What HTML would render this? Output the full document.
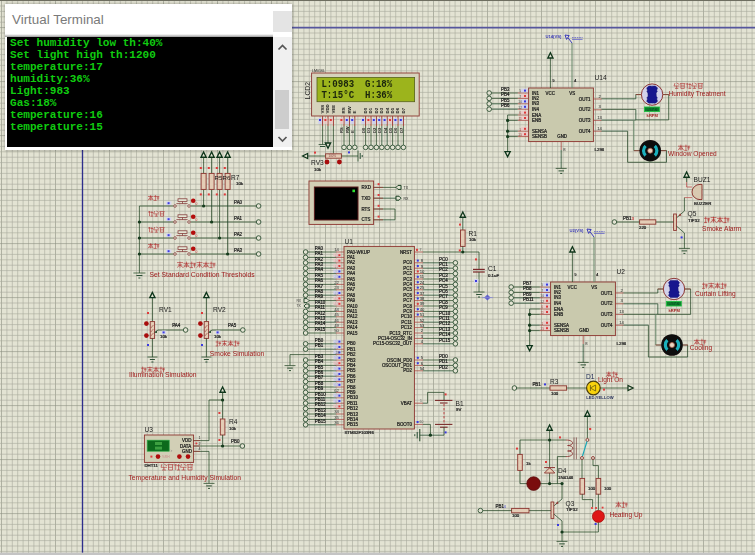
<!DOCTYPE html>
<html><head><meta charset="utf-8"><title>Virtual Terminal</title>
<style>
html,body{margin:0;padding:0;}
body{width:755px;height:555px;overflow:hidden;position:relative;background:#e3e3d3;font-family:"Liberation Sans",sans-serif;}
#vt{position:absolute;left:5px;top:4px;width:287px;height:145.6px;background:#fff;box-shadow:0 0 3px rgba(0,0,0,.35);}
#vt .title{position:absolute;left:7px;top:7.6px;font-size:13.4px;color:#7a7a7a;white-space:nowrap;line-height:16px;}
#vt .close{position:absolute;left:268px;top:7px;width:19px;height:21px;background:#e4e4e4;}
#vt .scr{position:absolute;left:2px;top:33px;width:266px;height:110px;background:#000;overflow:hidden;}
#vt .scr div{font-family:"Liberation Mono",monospace;font-weight:bold;font-size:11.05px;line-height:12px;height:12px;color:#10cc10;white-space:pre;padding-left:3px;}
#vt .sb{position:absolute;left:268px;top:33px;width:18.6px;height:110px;background:#f0f0f0;}
#vt .grad{position:absolute;left:0;top:29.5px;width:268px;height:3.5px;background:linear-gradient(#fff,#9a9a9a);}
#vt .thumb{position:absolute;left:1.8px;top:53px;width:14.6px;height:38.6px;background:#cdcdcd;}
</style></head><body>
<svg width="755" height="555" viewBox="0 0 755 555" style="position:absolute;left:0;top:0"><defs><filter id="bl" x="0" y="0" width="100%" height="100%" filterUnits="userSpaceOnUse"><feGaussianBlur stdDeviation="0.2"/></filter></defs><g><rect width="755" height="555" fill="#e3e3d3"/>
<line x1="1.50" y1="0" x2="1.50" y2="555" stroke="#8c8e82" stroke-width="0.6"/>
<line x1="6.90" y1="0" x2="6.90" y2="555" stroke="#a8aa9c" stroke-width="0.6"/>
<line x1="12.30" y1="0" x2="12.30" y2="555" stroke="#a8aa9c" stroke-width="0.6"/>
<line x1="17.70" y1="0" x2="17.70" y2="555" stroke="#a8aa9c" stroke-width="0.6"/>
<line x1="23.10" y1="0" x2="23.10" y2="555" stroke="#a8aa9c" stroke-width="0.6"/>
<line x1="28.50" y1="0" x2="28.50" y2="555" stroke="#a8aa9c" stroke-width="0.6"/>
<line x1="33.90" y1="0" x2="33.90" y2="555" stroke="#a8aa9c" stroke-width="0.6"/>
<line x1="39.30" y1="0" x2="39.30" y2="555" stroke="#a8aa9c" stroke-width="0.6"/>
<line x1="44.70" y1="0" x2="44.70" y2="555" stroke="#a8aa9c" stroke-width="0.6"/>
<line x1="50.10" y1="0" x2="50.10" y2="555" stroke="#a8aa9c" stroke-width="0.6"/>
<line x1="55.50" y1="0" x2="55.50" y2="555" stroke="#8c8e82" stroke-width="0.6"/>
<line x1="60.90" y1="0" x2="60.90" y2="555" stroke="#a8aa9c" stroke-width="0.6"/>
<line x1="66.30" y1="0" x2="66.30" y2="555" stroke="#a8aa9c" stroke-width="0.6"/>
<line x1="71.70" y1="0" x2="71.70" y2="555" stroke="#a8aa9c" stroke-width="0.6"/>
<line x1="77.10" y1="0" x2="77.10" y2="555" stroke="#a8aa9c" stroke-width="0.6"/>
<line x1="82.50" y1="0" x2="82.50" y2="555" stroke="#a8aa9c" stroke-width="0.6"/>
<line x1="87.90" y1="0" x2="87.90" y2="555" stroke="#a8aa9c" stroke-width="0.6"/>
<line x1="93.30" y1="0" x2="93.30" y2="555" stroke="#a8aa9c" stroke-width="0.6"/>
<line x1="98.70" y1="0" x2="98.70" y2="555" stroke="#a8aa9c" stroke-width="0.6"/>
<line x1="104.10" y1="0" x2="104.10" y2="555" stroke="#a8aa9c" stroke-width="0.6"/>
<line x1="109.50" y1="0" x2="109.50" y2="555" stroke="#8c8e82" stroke-width="0.6"/>
<line x1="114.90" y1="0" x2="114.90" y2="555" stroke="#a8aa9c" stroke-width="0.6"/>
<line x1="120.30" y1="0" x2="120.30" y2="555" stroke="#a8aa9c" stroke-width="0.6"/>
<line x1="125.70" y1="0" x2="125.70" y2="555" stroke="#a8aa9c" stroke-width="0.6"/>
<line x1="131.10" y1="0" x2="131.10" y2="555" stroke="#a8aa9c" stroke-width="0.6"/>
<line x1="136.50" y1="0" x2="136.50" y2="555" stroke="#a8aa9c" stroke-width="0.6"/>
<line x1="141.90" y1="0" x2="141.90" y2="555" stroke="#a8aa9c" stroke-width="0.6"/>
<line x1="147.30" y1="0" x2="147.30" y2="555" stroke="#a8aa9c" stroke-width="0.6"/>
<line x1="152.70" y1="0" x2="152.70" y2="555" stroke="#a8aa9c" stroke-width="0.6"/>
<line x1="158.10" y1="0" x2="158.10" y2="555" stroke="#a8aa9c" stroke-width="0.6"/>
<line x1="163.50" y1="0" x2="163.50" y2="555" stroke="#8c8e82" stroke-width="0.6"/>
<line x1="168.90" y1="0" x2="168.90" y2="555" stroke="#a8aa9c" stroke-width="0.6"/>
<line x1="174.30" y1="0" x2="174.30" y2="555" stroke="#a8aa9c" stroke-width="0.6"/>
<line x1="179.70" y1="0" x2="179.70" y2="555" stroke="#a8aa9c" stroke-width="0.6"/>
<line x1="185.10" y1="0" x2="185.10" y2="555" stroke="#a8aa9c" stroke-width="0.6"/>
<line x1="190.50" y1="0" x2="190.50" y2="555" stroke="#a8aa9c" stroke-width="0.6"/>
<line x1="195.90" y1="0" x2="195.90" y2="555" stroke="#a8aa9c" stroke-width="0.6"/>
<line x1="201.30" y1="0" x2="201.30" y2="555" stroke="#a8aa9c" stroke-width="0.6"/>
<line x1="206.70" y1="0" x2="206.70" y2="555" stroke="#a8aa9c" stroke-width="0.6"/>
<line x1="212.10" y1="0" x2="212.10" y2="555" stroke="#a8aa9c" stroke-width="0.6"/>
<line x1="217.50" y1="0" x2="217.50" y2="555" stroke="#8c8e82" stroke-width="0.6"/>
<line x1="222.90" y1="0" x2="222.90" y2="555" stroke="#a8aa9c" stroke-width="0.6"/>
<line x1="228.30" y1="0" x2="228.30" y2="555" stroke="#a8aa9c" stroke-width="0.6"/>
<line x1="233.70" y1="0" x2="233.70" y2="555" stroke="#a8aa9c" stroke-width="0.6"/>
<line x1="239.10" y1="0" x2="239.10" y2="555" stroke="#a8aa9c" stroke-width="0.6"/>
<line x1="244.50" y1="0" x2="244.50" y2="555" stroke="#a8aa9c" stroke-width="0.6"/>
<line x1="249.90" y1="0" x2="249.90" y2="555" stroke="#a8aa9c" stroke-width="0.6"/>
<line x1="255.30" y1="0" x2="255.30" y2="555" stroke="#a8aa9c" stroke-width="0.6"/>
<line x1="260.70" y1="0" x2="260.70" y2="555" stroke="#a8aa9c" stroke-width="0.6"/>
<line x1="266.10" y1="0" x2="266.10" y2="555" stroke="#a8aa9c" stroke-width="0.6"/>
<line x1="271.50" y1="0" x2="271.50" y2="555" stroke="#8c8e82" stroke-width="0.6"/>
<line x1="276.90" y1="0" x2="276.90" y2="555" stroke="#a8aa9c" stroke-width="0.6"/>
<line x1="282.30" y1="0" x2="282.30" y2="555" stroke="#a8aa9c" stroke-width="0.6"/>
<line x1="287.70" y1="0" x2="287.70" y2="555" stroke="#a8aa9c" stroke-width="0.6"/>
<line x1="293.10" y1="0" x2="293.10" y2="555" stroke="#a8aa9c" stroke-width="0.6"/>
<line x1="298.50" y1="0" x2="298.50" y2="555" stroke="#a8aa9c" stroke-width="0.6"/>
<line x1="303.90" y1="0" x2="303.90" y2="555" stroke="#a8aa9c" stroke-width="0.6"/>
<line x1="309.30" y1="0" x2="309.30" y2="555" stroke="#a8aa9c" stroke-width="0.6"/>
<line x1="314.70" y1="0" x2="314.70" y2="555" stroke="#a8aa9c" stroke-width="0.6"/>
<line x1="320.10" y1="0" x2="320.10" y2="555" stroke="#a8aa9c" stroke-width="0.6"/>
<line x1="325.50" y1="0" x2="325.50" y2="555" stroke="#8c8e82" stroke-width="0.6"/>
<line x1="330.90" y1="0" x2="330.90" y2="555" stroke="#a8aa9c" stroke-width="0.6"/>
<line x1="336.30" y1="0" x2="336.30" y2="555" stroke="#a8aa9c" stroke-width="0.6"/>
<line x1="341.70" y1="0" x2="341.70" y2="555" stroke="#a8aa9c" stroke-width="0.6"/>
<line x1="347.10" y1="0" x2="347.10" y2="555" stroke="#a8aa9c" stroke-width="0.6"/>
<line x1="352.50" y1="0" x2="352.50" y2="555" stroke="#a8aa9c" stroke-width="0.6"/>
<line x1="357.90" y1="0" x2="357.90" y2="555" stroke="#a8aa9c" stroke-width="0.6"/>
<line x1="363.30" y1="0" x2="363.30" y2="555" stroke="#a8aa9c" stroke-width="0.6"/>
<line x1="368.70" y1="0" x2="368.70" y2="555" stroke="#a8aa9c" stroke-width="0.6"/>
<line x1="374.10" y1="0" x2="374.10" y2="555" stroke="#a8aa9c" stroke-width="0.6"/>
<line x1="379.50" y1="0" x2="379.50" y2="555" stroke="#8c8e82" stroke-width="0.6"/>
<line x1="384.90" y1="0" x2="384.90" y2="555" stroke="#a8aa9c" stroke-width="0.6"/>
<line x1="390.30" y1="0" x2="390.30" y2="555" stroke="#a8aa9c" stroke-width="0.6"/>
<line x1="395.70" y1="0" x2="395.70" y2="555" stroke="#a8aa9c" stroke-width="0.6"/>
<line x1="401.10" y1="0" x2="401.10" y2="555" stroke="#a8aa9c" stroke-width="0.6"/>
<line x1="406.50" y1="0" x2="406.50" y2="555" stroke="#a8aa9c" stroke-width="0.6"/>
<line x1="411.90" y1="0" x2="411.90" y2="555" stroke="#a8aa9c" stroke-width="0.6"/>
<line x1="417.30" y1="0" x2="417.30" y2="555" stroke="#a8aa9c" stroke-width="0.6"/>
<line x1="422.70" y1="0" x2="422.70" y2="555" stroke="#a8aa9c" stroke-width="0.6"/>
<line x1="428.10" y1="0" x2="428.10" y2="555" stroke="#a8aa9c" stroke-width="0.6"/>
<line x1="433.50" y1="0" x2="433.50" y2="555" stroke="#8c8e82" stroke-width="0.6"/>
<line x1="438.90" y1="0" x2="438.90" y2="555" stroke="#a8aa9c" stroke-width="0.6"/>
<line x1="444.30" y1="0" x2="444.30" y2="555" stroke="#a8aa9c" stroke-width="0.6"/>
<line x1="449.70" y1="0" x2="449.70" y2="555" stroke="#a8aa9c" stroke-width="0.6"/>
<line x1="455.10" y1="0" x2="455.10" y2="555" stroke="#a8aa9c" stroke-width="0.6"/>
<line x1="460.50" y1="0" x2="460.50" y2="555" stroke="#a8aa9c" stroke-width="0.6"/>
<line x1="465.90" y1="0" x2="465.90" y2="555" stroke="#a8aa9c" stroke-width="0.6"/>
<line x1="471.30" y1="0" x2="471.30" y2="555" stroke="#a8aa9c" stroke-width="0.6"/>
<line x1="476.70" y1="0" x2="476.70" y2="555" stroke="#a8aa9c" stroke-width="0.6"/>
<line x1="482.10" y1="0" x2="482.10" y2="555" stroke="#a8aa9c" stroke-width="0.6"/>
<line x1="487.50" y1="0" x2="487.50" y2="555" stroke="#8c8e82" stroke-width="0.6"/>
<line x1="492.90" y1="0" x2="492.90" y2="555" stroke="#a8aa9c" stroke-width="0.6"/>
<line x1="498.30" y1="0" x2="498.30" y2="555" stroke="#a8aa9c" stroke-width="0.6"/>
<line x1="503.70" y1="0" x2="503.70" y2="555" stroke="#a8aa9c" stroke-width="0.6"/>
<line x1="509.10" y1="0" x2="509.10" y2="555" stroke="#a8aa9c" stroke-width="0.6"/>
<line x1="514.50" y1="0" x2="514.50" y2="555" stroke="#a8aa9c" stroke-width="0.6"/>
<line x1="519.90" y1="0" x2="519.90" y2="555" stroke="#a8aa9c" stroke-width="0.6"/>
<line x1="525.30" y1="0" x2="525.30" y2="555" stroke="#a8aa9c" stroke-width="0.6"/>
<line x1="530.70" y1="0" x2="530.70" y2="555" stroke="#a8aa9c" stroke-width="0.6"/>
<line x1="536.10" y1="0" x2="536.10" y2="555" stroke="#a8aa9c" stroke-width="0.6"/>
<line x1="541.50" y1="0" x2="541.50" y2="555" stroke="#8c8e82" stroke-width="0.6"/>
<line x1="546.90" y1="0" x2="546.90" y2="555" stroke="#a8aa9c" stroke-width="0.6"/>
<line x1="552.30" y1="0" x2="552.30" y2="555" stroke="#a8aa9c" stroke-width="0.6"/>
<line x1="557.70" y1="0" x2="557.70" y2="555" stroke="#a8aa9c" stroke-width="0.6"/>
<line x1="563.10" y1="0" x2="563.10" y2="555" stroke="#a8aa9c" stroke-width="0.6"/>
<line x1="568.50" y1="0" x2="568.50" y2="555" stroke="#a8aa9c" stroke-width="0.6"/>
<line x1="573.90" y1="0" x2="573.90" y2="555" stroke="#a8aa9c" stroke-width="0.6"/>
<line x1="579.30" y1="0" x2="579.30" y2="555" stroke="#a8aa9c" stroke-width="0.6"/>
<line x1="584.70" y1="0" x2="584.70" y2="555" stroke="#a8aa9c" stroke-width="0.6"/>
<line x1="590.10" y1="0" x2="590.10" y2="555" stroke="#a8aa9c" stroke-width="0.6"/>
<line x1="595.50" y1="0" x2="595.50" y2="555" stroke="#8c8e82" stroke-width="0.6"/>
<line x1="600.90" y1="0" x2="600.90" y2="555" stroke="#a8aa9c" stroke-width="0.6"/>
<line x1="606.30" y1="0" x2="606.30" y2="555" stroke="#a8aa9c" stroke-width="0.6"/>
<line x1="611.70" y1="0" x2="611.70" y2="555" stroke="#a8aa9c" stroke-width="0.6"/>
<line x1="617.10" y1="0" x2="617.10" y2="555" stroke="#a8aa9c" stroke-width="0.6"/>
<line x1="622.50" y1="0" x2="622.50" y2="555" stroke="#a8aa9c" stroke-width="0.6"/>
<line x1="627.90" y1="0" x2="627.90" y2="555" stroke="#a8aa9c" stroke-width="0.6"/>
<line x1="633.30" y1="0" x2="633.30" y2="555" stroke="#a8aa9c" stroke-width="0.6"/>
<line x1="638.70" y1="0" x2="638.70" y2="555" stroke="#a8aa9c" stroke-width="0.6"/>
<line x1="644.10" y1="0" x2="644.10" y2="555" stroke="#a8aa9c" stroke-width="0.6"/>
<line x1="649.50" y1="0" x2="649.50" y2="555" stroke="#8c8e82" stroke-width="0.6"/>
<line x1="654.90" y1="0" x2="654.90" y2="555" stroke="#a8aa9c" stroke-width="0.6"/>
<line x1="660.30" y1="0" x2="660.30" y2="555" stroke="#a8aa9c" stroke-width="0.6"/>
<line x1="665.70" y1="0" x2="665.70" y2="555" stroke="#a8aa9c" stroke-width="0.6"/>
<line x1="671.10" y1="0" x2="671.10" y2="555" stroke="#a8aa9c" stroke-width="0.6"/>
<line x1="676.50" y1="0" x2="676.50" y2="555" stroke="#a8aa9c" stroke-width="0.6"/>
<line x1="681.90" y1="0" x2="681.90" y2="555" stroke="#a8aa9c" stroke-width="0.6"/>
<line x1="687.30" y1="0" x2="687.30" y2="555" stroke="#a8aa9c" stroke-width="0.6"/>
<line x1="692.70" y1="0" x2="692.70" y2="555" stroke="#a8aa9c" stroke-width="0.6"/>
<line x1="698.10" y1="0" x2="698.10" y2="555" stroke="#a8aa9c" stroke-width="0.6"/>
<line x1="703.50" y1="0" x2="703.50" y2="555" stroke="#8c8e82" stroke-width="0.6"/>
<line x1="708.90" y1="0" x2="708.90" y2="555" stroke="#a8aa9c" stroke-width="0.6"/>
<line x1="714.30" y1="0" x2="714.30" y2="555" stroke="#a8aa9c" stroke-width="0.6"/>
<line x1="719.70" y1="0" x2="719.70" y2="555" stroke="#a8aa9c" stroke-width="0.6"/>
<line x1="725.10" y1="0" x2="725.10" y2="555" stroke="#a8aa9c" stroke-width="0.6"/>
<line x1="730.50" y1="0" x2="730.50" y2="555" stroke="#a8aa9c" stroke-width="0.6"/>
<line x1="735.90" y1="0" x2="735.90" y2="555" stroke="#a8aa9c" stroke-width="0.6"/>
<line x1="741.30" y1="0" x2="741.30" y2="555" stroke="#a8aa9c" stroke-width="0.6"/>
<line x1="746.70" y1="0" x2="746.70" y2="555" stroke="#a8aa9c" stroke-width="0.6"/>
<line x1="752.10" y1="0" x2="752.10" y2="555" stroke="#a8aa9c" stroke-width="0.6"/>
<line x1="0" y1="0.60" x2="755" y2="0.60" stroke="#a8aa9c" stroke-width="0.6"/>
<line x1="0" y1="6.00" x2="755" y2="6.00" stroke="#a8aa9c" stroke-width="0.6"/>
<line x1="0" y1="11.40" x2="755" y2="11.40" stroke="#a8aa9c" stroke-width="0.6"/>
<line x1="0" y1="16.80" x2="755" y2="16.80" stroke="#a8aa9c" stroke-width="0.6"/>
<line x1="0" y1="22.20" x2="755" y2="22.20" stroke="#a8aa9c" stroke-width="0.6"/>
<line x1="0" y1="27.60" x2="755" y2="27.60" stroke="#8c8e82" stroke-width="0.6"/>
<line x1="0" y1="33.00" x2="755" y2="33.00" stroke="#a8aa9c" stroke-width="0.6"/>
<line x1="0" y1="38.40" x2="755" y2="38.40" stroke="#a8aa9c" stroke-width="0.6"/>
<line x1="0" y1="43.80" x2="755" y2="43.80" stroke="#a8aa9c" stroke-width="0.6"/>
<line x1="0" y1="49.20" x2="755" y2="49.20" stroke="#a8aa9c" stroke-width="0.6"/>
<line x1="0" y1="54.60" x2="755" y2="54.60" stroke="#a8aa9c" stroke-width="0.6"/>
<line x1="0" y1="60.00" x2="755" y2="60.00" stroke="#a8aa9c" stroke-width="0.6"/>
<line x1="0" y1="65.40" x2="755" y2="65.40" stroke="#a8aa9c" stroke-width="0.6"/>
<line x1="0" y1="70.80" x2="755" y2="70.80" stroke="#a8aa9c" stroke-width="0.6"/>
<line x1="0" y1="76.20" x2="755" y2="76.20" stroke="#a8aa9c" stroke-width="0.6"/>
<line x1="0" y1="81.60" x2="755" y2="81.60" stroke="#8c8e82" stroke-width="0.6"/>
<line x1="0" y1="87.00" x2="755" y2="87.00" stroke="#a8aa9c" stroke-width="0.6"/>
<line x1="0" y1="92.40" x2="755" y2="92.40" stroke="#a8aa9c" stroke-width="0.6"/>
<line x1="0" y1="97.80" x2="755" y2="97.80" stroke="#a8aa9c" stroke-width="0.6"/>
<line x1="0" y1="103.20" x2="755" y2="103.20" stroke="#a8aa9c" stroke-width="0.6"/>
<line x1="0" y1="108.60" x2="755" y2="108.60" stroke="#a8aa9c" stroke-width="0.6"/>
<line x1="0" y1="114.00" x2="755" y2="114.00" stroke="#a8aa9c" stroke-width="0.6"/>
<line x1="0" y1="119.40" x2="755" y2="119.40" stroke="#a8aa9c" stroke-width="0.6"/>
<line x1="0" y1="124.80" x2="755" y2="124.80" stroke="#a8aa9c" stroke-width="0.6"/>
<line x1="0" y1="130.20" x2="755" y2="130.20" stroke="#a8aa9c" stroke-width="0.6"/>
<line x1="0" y1="135.60" x2="755" y2="135.60" stroke="#8c8e82" stroke-width="0.6"/>
<line x1="0" y1="141.00" x2="755" y2="141.00" stroke="#a8aa9c" stroke-width="0.6"/>
<line x1="0" y1="146.40" x2="755" y2="146.40" stroke="#a8aa9c" stroke-width="0.6"/>
<line x1="0" y1="151.80" x2="755" y2="151.80" stroke="#a8aa9c" stroke-width="0.6"/>
<line x1="0" y1="157.20" x2="755" y2="157.20" stroke="#a8aa9c" stroke-width="0.6"/>
<line x1="0" y1="162.60" x2="755" y2="162.60" stroke="#a8aa9c" stroke-width="0.6"/>
<line x1="0" y1="168.00" x2="755" y2="168.00" stroke="#a8aa9c" stroke-width="0.6"/>
<line x1="0" y1="173.40" x2="755" y2="173.40" stroke="#a8aa9c" stroke-width="0.6"/>
<line x1="0" y1="178.80" x2="755" y2="178.80" stroke="#a8aa9c" stroke-width="0.6"/>
<line x1="0" y1="184.20" x2="755" y2="184.20" stroke="#a8aa9c" stroke-width="0.6"/>
<line x1="0" y1="189.60" x2="755" y2="189.60" stroke="#8c8e82" stroke-width="0.6"/>
<line x1="0" y1="195.00" x2="755" y2="195.00" stroke="#a8aa9c" stroke-width="0.6"/>
<line x1="0" y1="200.40" x2="755" y2="200.40" stroke="#a8aa9c" stroke-width="0.6"/>
<line x1="0" y1="205.80" x2="755" y2="205.80" stroke="#a8aa9c" stroke-width="0.6"/>
<line x1="0" y1="211.20" x2="755" y2="211.20" stroke="#a8aa9c" stroke-width="0.6"/>
<line x1="0" y1="216.60" x2="755" y2="216.60" stroke="#a8aa9c" stroke-width="0.6"/>
<line x1="0" y1="222.00" x2="755" y2="222.00" stroke="#a8aa9c" stroke-width="0.6"/>
<line x1="0" y1="227.40" x2="755" y2="227.40" stroke="#a8aa9c" stroke-width="0.6"/>
<line x1="0" y1="232.80" x2="755" y2="232.80" stroke="#a8aa9c" stroke-width="0.6"/>
<line x1="0" y1="238.20" x2="755" y2="238.20" stroke="#a8aa9c" stroke-width="0.6"/>
<line x1="0" y1="243.60" x2="755" y2="243.60" stroke="#8c8e82" stroke-width="0.6"/>
<line x1="0" y1="249.00" x2="755" y2="249.00" stroke="#a8aa9c" stroke-width="0.6"/>
<line x1="0" y1="254.40" x2="755" y2="254.40" stroke="#a8aa9c" stroke-width="0.6"/>
<line x1="0" y1="259.80" x2="755" y2="259.80" stroke="#a8aa9c" stroke-width="0.6"/>
<line x1="0" y1="265.20" x2="755" y2="265.20" stroke="#a8aa9c" stroke-width="0.6"/>
<line x1="0" y1="270.60" x2="755" y2="270.60" stroke="#a8aa9c" stroke-width="0.6"/>
<line x1="0" y1="276.00" x2="755" y2="276.00" stroke="#a8aa9c" stroke-width="0.6"/>
<line x1="0" y1="281.40" x2="755" y2="281.40" stroke="#a8aa9c" stroke-width="0.6"/>
<line x1="0" y1="286.80" x2="755" y2="286.80" stroke="#a8aa9c" stroke-width="0.6"/>
<line x1="0" y1="292.20" x2="755" y2="292.20" stroke="#a8aa9c" stroke-width="0.6"/>
<line x1="0" y1="297.60" x2="755" y2="297.60" stroke="#8c8e82" stroke-width="0.6"/>
<line x1="0" y1="303.00" x2="755" y2="303.00" stroke="#a8aa9c" stroke-width="0.6"/>
<line x1="0" y1="308.40" x2="755" y2="308.40" stroke="#a8aa9c" stroke-width="0.6"/>
<line x1="0" y1="313.80" x2="755" y2="313.80" stroke="#a8aa9c" stroke-width="0.6"/>
<line x1="0" y1="319.20" x2="755" y2="319.20" stroke="#a8aa9c" stroke-width="0.6"/>
<line x1="0" y1="324.60" x2="755" y2="324.60" stroke="#a8aa9c" stroke-width="0.6"/>
<line x1="0" y1="330.00" x2="755" y2="330.00" stroke="#a8aa9c" stroke-width="0.6"/>
<line x1="0" y1="335.40" x2="755" y2="335.40" stroke="#a8aa9c" stroke-width="0.6"/>
<line x1="0" y1="340.80" x2="755" y2="340.80" stroke="#a8aa9c" stroke-width="0.6"/>
<line x1="0" y1="346.20" x2="755" y2="346.20" stroke="#a8aa9c" stroke-width="0.6"/>
<line x1="0" y1="351.60" x2="755" y2="351.60" stroke="#8c8e82" stroke-width="0.6"/>
<line x1="0" y1="357.00" x2="755" y2="357.00" stroke="#a8aa9c" stroke-width="0.6"/>
<line x1="0" y1="362.40" x2="755" y2="362.40" stroke="#a8aa9c" stroke-width="0.6"/>
<line x1="0" y1="367.80" x2="755" y2="367.80" stroke="#a8aa9c" stroke-width="0.6"/>
<line x1="0" y1="373.20" x2="755" y2="373.20" stroke="#a8aa9c" stroke-width="0.6"/>
<line x1="0" y1="378.60" x2="755" y2="378.60" stroke="#a8aa9c" stroke-width="0.6"/>
<line x1="0" y1="384.00" x2="755" y2="384.00" stroke="#a8aa9c" stroke-width="0.6"/>
<line x1="0" y1="389.40" x2="755" y2="389.40" stroke="#a8aa9c" stroke-width="0.6"/>
<line x1="0" y1="394.80" x2="755" y2="394.80" stroke="#a8aa9c" stroke-width="0.6"/>
<line x1="0" y1="400.20" x2="755" y2="400.20" stroke="#a8aa9c" stroke-width="0.6"/>
<line x1="0" y1="405.60" x2="755" y2="405.60" stroke="#8c8e82" stroke-width="0.6"/>
<line x1="0" y1="411.00" x2="755" y2="411.00" stroke="#a8aa9c" stroke-width="0.6"/>
<line x1="0" y1="416.40" x2="755" y2="416.40" stroke="#a8aa9c" stroke-width="0.6"/>
<line x1="0" y1="421.80" x2="755" y2="421.80" stroke="#a8aa9c" stroke-width="0.6"/>
<line x1="0" y1="427.20" x2="755" y2="427.20" stroke="#a8aa9c" stroke-width="0.6"/>
<line x1="0" y1="432.60" x2="755" y2="432.60" stroke="#a8aa9c" stroke-width="0.6"/>
<line x1="0" y1="438.00" x2="755" y2="438.00" stroke="#a8aa9c" stroke-width="0.6"/>
<line x1="0" y1="443.40" x2="755" y2="443.40" stroke="#a8aa9c" stroke-width="0.6"/>
<line x1="0" y1="448.80" x2="755" y2="448.80" stroke="#a8aa9c" stroke-width="0.6"/>
<line x1="0" y1="454.20" x2="755" y2="454.20" stroke="#a8aa9c" stroke-width="0.6"/>
<line x1="0" y1="459.60" x2="755" y2="459.60" stroke="#8c8e82" stroke-width="0.6"/>
<line x1="0" y1="465.00" x2="755" y2="465.00" stroke="#a8aa9c" stroke-width="0.6"/>
<line x1="0" y1="470.40" x2="755" y2="470.40" stroke="#a8aa9c" stroke-width="0.6"/>
<line x1="0" y1="475.80" x2="755" y2="475.80" stroke="#a8aa9c" stroke-width="0.6"/>
<line x1="0" y1="481.20" x2="755" y2="481.20" stroke="#a8aa9c" stroke-width="0.6"/>
<line x1="0" y1="486.60" x2="755" y2="486.60" stroke="#a8aa9c" stroke-width="0.6"/>
<line x1="0" y1="492.00" x2="755" y2="492.00" stroke="#a8aa9c" stroke-width="0.6"/>
<line x1="0" y1="497.40" x2="755" y2="497.40" stroke="#a8aa9c" stroke-width="0.6"/>
<line x1="0" y1="502.80" x2="755" y2="502.80" stroke="#a8aa9c" stroke-width="0.6"/>
<line x1="0" y1="508.20" x2="755" y2="508.20" stroke="#a8aa9c" stroke-width="0.6"/>
<line x1="0" y1="513.60" x2="755" y2="513.60" stroke="#8c8e82" stroke-width="0.6"/>
<line x1="0" y1="519.00" x2="755" y2="519.00" stroke="#a8aa9c" stroke-width="0.6"/>
<line x1="0" y1="524.40" x2="755" y2="524.40" stroke="#a8aa9c" stroke-width="0.6"/>
<line x1="0" y1="529.80" x2="755" y2="529.80" stroke="#a8aa9c" stroke-width="0.6"/>
<line x1="0" y1="535.20" x2="755" y2="535.20" stroke="#a8aa9c" stroke-width="0.6"/>
<line x1="0" y1="540.60" x2="755" y2="540.60" stroke="#a8aa9c" stroke-width="0.6"/>
<line x1="0" y1="546.00" x2="755" y2="546.00" stroke="#a8aa9c" stroke-width="0.6"/>
<line x1="0" y1="551.40" x2="755" y2="551.40" stroke="#a8aa9c" stroke-width="0.6"/></g><g filter="url(#bl)"><line x1="82.5" y1="27.6" x2="82.5" y2="553.0" stroke="#2e2e8c" stroke-width="1.35"/>
<line x1="82.5" y1="27.7" x2="755.0" y2="27.7" stroke="#56569e" stroke-width="1.8"/>
<rect x="0" y="0" width="755" height="1" fill="#6e6e60"/>
<rect x="0" y="552.6" width="755" height="2.4" fill="#c4c4c4"/>
<text x="312.0" y="71.5" font-size="3.6" fill="#1c1c1c" text-anchor="start" font-weight="normal" font-family="Liberation Sans, sans-serif" >LM016L</text>
<rect x="311.6" y="73.0" width="107.6" height="43.0" fill="#d6d3bc" stroke="#8c3630" stroke-width="0.9" />
<rect x="317" y="77.5" width="97.6" height="24.2" fill="#9cb41f" stroke="#55611a" stroke-width="0.8"/>
<text transform="translate(321.40,87.4) scale(1,1.3)" font-size="9.1" fill="#1c260a" font-weight="bold" font-family="Liberation Mono, monospace">L</text>
<text transform="translate(326.85,87.4) scale(1,1.3)" font-size="9.1" fill="#1c260a" font-weight="bold" font-family="Liberation Mono, monospace">:</text>
<text transform="translate(332.30,87.4) scale(1,1.3)" font-size="9.1" fill="#1c260a" font-weight="bold" font-family="Liberation Mono, monospace">0</text>
<text transform="translate(337.75,87.4) scale(1,1.3)" font-size="9.1" fill="#1c260a" font-weight="bold" font-family="Liberation Mono, monospace">9</text>
<text transform="translate(343.20,87.4) scale(1,1.3)" font-size="9.1" fill="#1c260a" font-weight="bold" font-family="Liberation Mono, monospace">8</text>
<text transform="translate(348.65,87.4) scale(1,1.3)" font-size="9.1" fill="#1c260a" font-weight="bold" font-family="Liberation Mono, monospace">3</text>
<text transform="translate(365.00,87.4) scale(1,1.3)" font-size="9.1" fill="#1c260a" font-weight="bold" font-family="Liberation Mono, monospace">G</text>
<text transform="translate(370.45,87.4) scale(1,1.3)" font-size="9.1" fill="#1c260a" font-weight="bold" font-family="Liberation Mono, monospace">:</text>
<text transform="translate(375.90,87.4) scale(1,1.3)" font-size="9.1" fill="#1c260a" font-weight="bold" font-family="Liberation Mono, monospace">1</text>
<text transform="translate(381.35,87.4) scale(1,1.3)" font-size="9.1" fill="#1c260a" font-weight="bold" font-family="Liberation Mono, monospace">8</text>
<text transform="translate(386.80,87.4) scale(1,1.3)" font-size="9.1" fill="#1c260a" font-weight="bold" font-family="Liberation Mono, monospace">%</text>
<text transform="translate(321.40,97.8) scale(1,1.3)" font-size="9.1" fill="#1c260a" font-weight="bold" font-family="Liberation Mono, monospace">T</text>
<text transform="translate(326.85,97.8) scale(1,1.3)" font-size="9.1" fill="#1c260a" font-weight="bold" font-family="Liberation Mono, monospace">:</text>
<text transform="translate(332.30,97.8) scale(1,1.3)" font-size="9.1" fill="#1c260a" font-weight="bold" font-family="Liberation Mono, monospace">1</text>
<text transform="translate(337.75,97.8) scale(1,1.3)" font-size="9.1" fill="#1c260a" font-weight="bold" font-family="Liberation Mono, monospace">5</text>
<text transform="translate(343.20,97.8) scale(1,1.3)" font-size="9.1" fill="#1c260a" font-weight="bold" font-family="Liberation Mono, monospace">°</text>
<text transform="translate(348.65,97.8) scale(1,1.3)" font-size="9.1" fill="#1c260a" font-weight="bold" font-family="Liberation Mono, monospace">C</text>
<text transform="translate(365.00,97.8) scale(1,1.3)" font-size="9.1" fill="#1c260a" font-weight="bold" font-family="Liberation Mono, monospace">H</text>
<text transform="translate(370.45,97.8) scale(1,1.3)" font-size="9.1" fill="#1c260a" font-weight="bold" font-family="Liberation Mono, monospace">:</text>
<text transform="translate(375.90,97.8) scale(1,1.3)" font-size="9.1" fill="#1c260a" font-weight="bold" font-family="Liberation Mono, monospace">3</text>
<text transform="translate(381.35,97.8) scale(1,1.3)" font-size="9.1" fill="#1c260a" font-weight="bold" font-family="Liberation Mono, monospace">6</text>
<text transform="translate(386.80,97.8) scale(1,1.3)" font-size="9.1" fill="#1c260a" font-weight="bold" font-family="Liberation Mono, monospace">%</text>
<text transform="translate(310.4,99.4) rotate(-90)" font-size="6.8" fill="#1c1c1c" font-family="Liberation Sans, sans-serif">LCD2</text>
<text transform="translate(324.0,113.5) rotate(-90)" font-size="4.4" font-weight="bold" fill="#1c1c1c" font-family="Liberation Sans, sans-serif">VSS</text>
<line x1="322.6" y1="116.0" x2="322.6" y2="126.0" stroke="#a03c34" stroke-width="1"/>
<rect x="318.2" y="118" width="3.8" height="6" fill="#d0d0f0" opacity="0.8"/>
<rect x="319.0" y="119.0" width="2.0" height="2.0" fill="#3a3ae0"/>
<text transform="translate(329.4,113.5) rotate(-90)" font-size="4.4" font-weight="bold" fill="#1c1c1c" font-family="Liberation Sans, sans-serif">VDD</text>
<line x1="328.0" y1="116.0" x2="328.0" y2="126.0" stroke="#a03c34" stroke-width="1"/>
<rect x="323.6" y="118" width="3.8" height="6" fill="#ecc8c8" opacity="0.8"/>
<rect x="324.4" y="119.0" width="2.0" height="2.0" fill="#e03a3a"/>
<text transform="translate(334.8,113.5) rotate(-90)" font-size="4.4" font-weight="bold" fill="#1c1c1c" font-family="Liberation Sans, sans-serif">VEE</text>
<line x1="333.4" y1="116.0" x2="333.4" y2="126.0" stroke="#a03c34" stroke-width="1"/>
<rect x="329.0" y="118" width="3.8" height="6" fill="#ecc8c8" opacity="0.8"/>
<rect x="329.8" y="119.0" width="2.0" height="2.0" fill="#e03a3a"/>
<text transform="translate(345.4,113.5) rotate(-90)" font-size="4.4" font-weight="bold" fill="#1c1c1c" font-family="Liberation Sans, sans-serif">RS</text>
<line x1="344.0" y1="116.0" x2="344.0" y2="126.0" stroke="#a03c34" stroke-width="1"/>
<rect x="339.6" y="118" width="3.8" height="6" fill="#ecc8c8" opacity="0.8"/>
<rect x="340.4" y="119.0" width="2.0" height="2.0" fill="#e03a3a"/>
<text transform="translate(343.4,133) rotate(-90)" font-size="4" font-weight="bold" fill="#1c1c1c" font-family="Liberation Sans, sans-serif">RS</text>
<line x1="344.0" y1="126.0" x2="344.0" y2="145.3" stroke="#1a4022" stroke-width="0.72"/>
<circle cx="344.0" cy="147.4" r="2.3" fill="#e3e3d3" stroke="#1a4022" stroke-width="0.8" />
<text transform="translate(350.8,113.5) rotate(-90)" font-size="4.4" font-weight="bold" fill="#1c1c1c" font-family="Liberation Sans, sans-serif">RW</text>
<line x1="349.4" y1="116.0" x2="349.4" y2="126.0" stroke="#a03c34" stroke-width="1"/>
<rect x="345.0" y="118" width="3.8" height="6" fill="#d0d0f0" opacity="0.8"/>
<rect x="345.8" y="119.0" width="2.0" height="2.0" fill="#3a3ae0"/>
<text transform="translate(348.8,133) rotate(-90)" font-size="4" font-weight="bold" fill="#1c1c1c" font-family="Liberation Sans, sans-serif">RW</text>
<line x1="349.4" y1="126.0" x2="349.4" y2="145.3" stroke="#1a4022" stroke-width="0.72"/>
<circle cx="349.4" cy="147.4" r="2.3" fill="#e3e3d3" stroke="#1a4022" stroke-width="0.8" />
<text transform="translate(356.2,113.5) rotate(-90)" font-size="4.4" font-weight="bold" fill="#1c1c1c" font-family="Liberation Sans, sans-serif">E</text>
<line x1="354.8" y1="116.0" x2="354.8" y2="126.0" stroke="#a03c34" stroke-width="1"/>
<rect x="350.4" y="118" width="3.8" height="6" fill="#d0d0f0" opacity="0.8"/>
<rect x="351.2" y="119.0" width="2.0" height="2.0" fill="#3a3ae0"/>
<text transform="translate(354.2,133) rotate(-90)" font-size="4" font-weight="bold" fill="#1c1c1c" font-family="Liberation Sans, sans-serif">E</text>
<line x1="354.8" y1="126.0" x2="354.8" y2="145.3" stroke="#1a4022" stroke-width="0.72"/>
<circle cx="354.8" cy="147.4" r="2.3" fill="#e3e3d3" stroke="#1a4022" stroke-width="0.8" />
<text transform="translate(367.0,113.5) rotate(-90)" font-size="4.4" font-weight="bold" fill="#1c1c1c" font-family="Liberation Sans, sans-serif">D0</text>
<line x1="365.6" y1="116.0" x2="365.6" y2="126.0" stroke="#a03c34" stroke-width="1"/>
<rect x="361.2" y="118" width="3.8" height="6" fill="#d0d0f0" opacity="0.8"/>
<rect x="362.0" y="119.0" width="2.0" height="2.0" fill="#3a3ae0"/>
<text transform="translate(365.0,133) rotate(-90)" font-size="4" font-weight="bold" fill="#1c1c1c" font-family="Liberation Sans, sans-serif">D0</text>
<line x1="365.6" y1="126.0" x2="365.6" y2="145.3" stroke="#1a4022" stroke-width="0.72"/>
<circle cx="365.6" cy="147.4" r="2.3" fill="#e3e3d3" stroke="#1a4022" stroke-width="0.8" />
<text transform="translate(372.4,113.5) rotate(-90)" font-size="4.4" font-weight="bold" fill="#1c1c1c" font-family="Liberation Sans, sans-serif">D1</text>
<line x1="371.0" y1="116.0" x2="371.0" y2="126.0" stroke="#a03c34" stroke-width="1"/>
<rect x="366.6" y="118" width="3.8" height="6" fill="#ecc8c8" opacity="0.8"/>
<rect x="367.4" y="119.0" width="2.0" height="2.0" fill="#e03a3a"/>
<text transform="translate(370.4,133) rotate(-90)" font-size="4" font-weight="bold" fill="#1c1c1c" font-family="Liberation Sans, sans-serif">D1</text>
<line x1="371.0" y1="126.0" x2="371.0" y2="145.3" stroke="#1a4022" stroke-width="0.72"/>
<circle cx="371.0" cy="147.4" r="2.3" fill="#e3e3d3" stroke="#1a4022" stroke-width="0.8" />
<text transform="translate(377.8,113.5) rotate(-90)" font-size="4.4" font-weight="bold" fill="#1c1c1c" font-family="Liberation Sans, sans-serif">D2</text>
<line x1="376.4" y1="116.0" x2="376.4" y2="126.0" stroke="#a03c34" stroke-width="1"/>
<rect x="372.0" y="118" width="3.8" height="6" fill="#d0d0f0" opacity="0.8"/>
<rect x="372.8" y="119.0" width="2.0" height="2.0" fill="#3a3ae0"/>
<text transform="translate(375.8,133) rotate(-90)" font-size="4" font-weight="bold" fill="#1c1c1c" font-family="Liberation Sans, sans-serif">D2</text>
<line x1="376.4" y1="126.0" x2="376.4" y2="145.3" stroke="#1a4022" stroke-width="0.72"/>
<circle cx="376.4" cy="147.4" r="2.3" fill="#e3e3d3" stroke="#1a4022" stroke-width="0.8" />
<text transform="translate(383.2,113.5) rotate(-90)" font-size="4.4" font-weight="bold" fill="#1c1c1c" font-family="Liberation Sans, sans-serif">D3</text>
<line x1="381.8" y1="116.0" x2="381.8" y2="126.0" stroke="#a03c34" stroke-width="1"/>
<rect x="377.4" y="118" width="3.8" height="6" fill="#d0d0f0" opacity="0.8"/>
<rect x="378.2" y="119.0" width="2.0" height="2.0" fill="#3a3ae0"/>
<text transform="translate(381.2,133) rotate(-90)" font-size="4" font-weight="bold" fill="#1c1c1c" font-family="Liberation Sans, sans-serif">D3</text>
<line x1="381.8" y1="126.0" x2="381.8" y2="145.3" stroke="#1a4022" stroke-width="0.72"/>
<circle cx="381.8" cy="147.4" r="2.3" fill="#e3e3d3" stroke="#1a4022" stroke-width="0.8" />
<text transform="translate(388.6,113.5) rotate(-90)" font-size="4.4" font-weight="bold" fill="#1c1c1c" font-family="Liberation Sans, sans-serif">D4</text>
<line x1="387.2" y1="116.0" x2="387.2" y2="126.0" stroke="#a03c34" stroke-width="1"/>
<rect x="382.8" y="118" width="3.8" height="6" fill="#d0d0f0" opacity="0.8"/>
<rect x="383.6" y="119.0" width="2.0" height="2.0" fill="#3a3ae0"/>
<text transform="translate(386.6,133) rotate(-90)" font-size="4" font-weight="bold" fill="#1c1c1c" font-family="Liberation Sans, sans-serif">D4</text>
<line x1="387.2" y1="126.0" x2="387.2" y2="145.3" stroke="#1a4022" stroke-width="0.72"/>
<circle cx="387.2" cy="147.4" r="2.3" fill="#e3e3d3" stroke="#1a4022" stroke-width="0.8" />
<text transform="translate(394.0,113.5) rotate(-90)" font-size="4.4" font-weight="bold" fill="#1c1c1c" font-family="Liberation Sans, sans-serif">D5</text>
<line x1="392.6" y1="116.0" x2="392.6" y2="126.0" stroke="#a03c34" stroke-width="1"/>
<rect x="388.2" y="118" width="3.8" height="6" fill="#ecc8c8" opacity="0.8"/>
<rect x="389.0" y="119.0" width="2.0" height="2.0" fill="#e03a3a"/>
<text transform="translate(392.0,133) rotate(-90)" font-size="4" font-weight="bold" fill="#1c1c1c" font-family="Liberation Sans, sans-serif">D5</text>
<line x1="392.6" y1="126.0" x2="392.6" y2="145.3" stroke="#1a4022" stroke-width="0.72"/>
<circle cx="392.6" cy="147.4" r="2.3" fill="#e3e3d3" stroke="#1a4022" stroke-width="0.8" />
<text transform="translate(399.4,113.5) rotate(-90)" font-size="4.4" font-weight="bold" fill="#1c1c1c" font-family="Liberation Sans, sans-serif">D6</text>
<line x1="398.0" y1="116.0" x2="398.0" y2="126.0" stroke="#a03c34" stroke-width="1"/>
<rect x="393.6" y="118" width="3.8" height="6" fill="#d0d0f0" opacity="0.8"/>
<rect x="394.4" y="119.0" width="2.0" height="2.0" fill="#3a3ae0"/>
<text transform="translate(397.4,133) rotate(-90)" font-size="4" font-weight="bold" fill="#1c1c1c" font-family="Liberation Sans, sans-serif">D6</text>
<line x1="398.0" y1="126.0" x2="398.0" y2="145.3" stroke="#1a4022" stroke-width="0.72"/>
<circle cx="398.0" cy="147.4" r="2.3" fill="#e3e3d3" stroke="#1a4022" stroke-width="0.8" />
<text transform="translate(404.8,113.5) rotate(-90)" font-size="4.4" font-weight="bold" fill="#1c1c1c" font-family="Liberation Sans, sans-serif">D7</text>
<line x1="403.4" y1="116.0" x2="403.4" y2="126.0" stroke="#a03c34" stroke-width="1"/>
<rect x="399.0" y="118" width="3.8" height="6" fill="#d0d0f0" opacity="0.8"/>
<rect x="399.8" y="119.0" width="2.0" height="2.0" fill="#3a3ae0"/>
<text transform="translate(402.8,133) rotate(-90)" font-size="4" font-weight="bold" fill="#1c1c1c" font-family="Liberation Sans, sans-serif">D7</text>
<line x1="403.4" y1="126.0" x2="403.4" y2="145.3" stroke="#1a4022" stroke-width="0.72"/>
<circle cx="403.4" cy="147.4" r="2.3" fill="#e3e3d3" stroke="#1a4022" stroke-width="0.8" />
<line x1="322.6" y1="126.0" x2="322.6" y2="144.5" stroke="#1a4022" stroke-width="0.72"/>
<line x1="318.6" y1="144.5" x2="326.6" y2="144.5" stroke="#1a4022" stroke-width="0.72"/>
<line x1="320.0" y1="146.5" x2="325.2" y2="146.5" stroke="#1a4022" stroke-width="0.9"/>
<line x1="328.0" y1="126.0" x2="328.0" y2="143.0" stroke="#1a4022" stroke-width="0.72"/>
<polygon points="328.0,148.2 325.4,143.0 330.6,143.0" fill="#e3e3d3" stroke="#10351a" stroke-width="1.35"/>
<line x1="333.4" y1="126.0" x2="333.4" y2="153.6" stroke="#1a4022" stroke-width="0.72"/>
<line x1="307.5" y1="156.0" x2="325.6" y2="156.0" stroke="#1a4022" stroke-width="0.72"/>
<polygon points="302.5,156.0 307.7,153.4 307.7,158.6" fill="#e3e3d3" stroke="#10351a" stroke-width="1.2"/>
<rect x="325.6" y="153.8" width="15.8" height="4.4" fill="#e4cdb6" stroke="#8c3630" stroke-width="0.9" />
<text x="328.5" y="157.2" font-size="3" fill="#844" text-anchor="start" font-weight="normal" font-family="Liberation Sans, sans-serif" >100%</text>
<line x1="341.4" y1="156.0" x2="358.0" y2="156.0" stroke="#1a4022" stroke-width="0.72"/>
<line x1="358.0" y1="150.5" x2="358.0" y2="161.5" stroke="#1a4022" stroke-width="0.72"/>
<line x1="360.2" y1="153.0" x2="360.2" y2="159.0" stroke="#1a4022" stroke-width="0.9"/>
<line x1="362.2" y1="155.0" x2="362.2" y2="157.0" stroke="#1a4022" stroke-width="0.9"/>
<rect x="314.0" y="151.6" width="2.0" height="2.0" fill="#e03a3a"/>
<rect x="348.0" y="151.4" width="2.0" height="2.0" fill="#3a3ae0"/>
<circle cx="327.0" cy="162.0" r="2.4" fill="#a80808" stroke="none" stroke-width="1" />
<circle cx="339.4" cy="162.0" r="2.4" fill="#a80808" stroke="none" stroke-width="1" />
<text x="311.0" y="165.0" font-size="6.6" fill="#1c1c1c" text-anchor="start" font-weight="normal" font-family="Liberation Sans, sans-serif" >RV3</text>
<text x="314.0" y="170.5" font-size="4.3500000000000005" fill="#1c1c1c" text-anchor="start" font-weight="normal" font-family="Liberation Sans, sans-serif"  stroke="#1c1c1c" stroke-width="0.22">10k</text>
<rect x="309.0" y="181.0" width="64.6" height="43.4" fill="#d2cfb6" stroke="#8c3630" stroke-width="0.9" />
<rect x="314.4" y="187" width="43.6" height="33" fill="#000" stroke="#5a1c1c" stroke-width="1"/>
<rect x="352.4" y="189.6" width="2.6" height="2.6" fill="#2ee02e"/>
<text x="361.5" y="189.0" font-size="4.45" fill="#1c1c1c" text-anchor="start" font-weight="normal" font-family="Liberation Sans, sans-serif"  stroke="#1c1c1c" stroke-width="0.22">RXD</text>
<rect x="377.6" y="183.2" width="2.0" height="2.0" fill="#e03a3a"/>
<text x="361.5" y="199.8" font-size="4.45" fill="#1c1c1c" text-anchor="start" font-weight="normal" font-family="Liberation Sans, sans-serif"  stroke="#1c1c1c" stroke-width="0.22">TXD</text>
<rect x="377.6" y="194.0" width="2.0" height="2.0" fill="#e03a3a"/>
<text x="361.5" y="210.6" font-size="4.45" fill="#1c1c1c" text-anchor="start" font-weight="normal" font-family="Liberation Sans, sans-serif"  stroke="#1c1c1c" stroke-width="0.22">RTS</text>
<rect x="377.6" y="204.8" width="2.0" height="2.0" fill="#e03a3a"/>
<text x="361.5" y="221.4" font-size="4.45" fill="#1c1c1c" text-anchor="start" font-weight="normal" font-family="Liberation Sans, sans-serif"  stroke="#1c1c1c" stroke-width="0.22">CTS</text>
<rect x="377.6" y="215.6" width="2.0" height="2.0" fill="#e03a3a"/>
<line x1="373.6" y1="187.4" x2="396.0" y2="187.4" stroke="#1a4022" stroke-width="0.72"/>
<line x1="373.6" y1="198.2" x2="396.0" y2="198.2" stroke="#1a4022" stroke-width="0.72"/>
<line x1="373.6" y1="187.4" x2="383.0" y2="187.4" stroke="#a03c34" stroke-width="0.72"/>
<line x1="373.6" y1="198.2" x2="383.0" y2="198.2" stroke="#a03c34" stroke-width="0.72"/>
<polyline points="373.6,209.0 395.0,209.0 395.0,219.8 373.6,219.8" fill="none" stroke="#1a4022" stroke-width="0.72" />
<line x1="373.6" y1="209.0" x2="383.0" y2="209.0" stroke="#a03c34" stroke-width="0.72"/>
<line x1="373.6" y1="219.8" x2="383.0" y2="219.8" stroke="#a03c34" stroke-width="0.72"/>
<polygon points="396,187.4 398,185.4 401,185.4 401,189.4 398,189.4" fill="#e3e3d3" stroke="#1a4022" stroke-width="1"/>
<polygon points="401,198.2 399,196.2 396,196.2 396,200.2 399,200.2" fill="#e3e3d3" stroke="#1a4022" stroke-width="1"/>
<text x="403.5" y="189.0" font-size="3.6" fill="#1c1c1c" text-anchor="start" font-weight="normal" font-family="Liberation Sans, sans-serif" >TX</text>
<text x="403.5" y="199.8" font-size="3.6" fill="#1c1c1c" text-anchor="start" font-weight="normal" font-family="Liberation Sans, sans-serif" >RX</text>
<polygon points="203.6,152.0 201.0,157.2 206.2,157.2" fill="#e3e3d3" stroke="#10351a" stroke-width="1.35"/>
<line x1="203.6" y1="157.3" x2="203.6" y2="173.4" stroke="#1a4022" stroke-width="0.72"/>
<line x1="203.6" y1="189.4" x2="203.6" y2="206.0" stroke="#1a4022" stroke-width="0.72"/>
<rect x="201.1" y="173.4" width="5.0" height="16.0" fill="#e4cdb6" stroke="#8c3630" stroke-width="0.9" />
<rect x="199.8" y="167.0" width="2.0" height="2.0" fill="#e03a3a"/>
<rect x="199.8" y="193.4" width="2.0" height="2.0" fill="#e03a3a"/>
<circle cx="203.6" cy="206.0" r="1.6" fill="#143a1c" stroke="none" stroke-width="1" />
<polygon points="211.6,152.0 209.0,157.2 214.2,157.2" fill="#e3e3d3" stroke="#10351a" stroke-width="1.35"/>
<line x1="211.6" y1="157.3" x2="211.6" y2="173.4" stroke="#1a4022" stroke-width="0.72"/>
<line x1="211.6" y1="189.4" x2="211.6" y2="222.0" stroke="#1a4022" stroke-width="0.72"/>
<rect x="209.1" y="173.4" width="5.0" height="16.0" fill="#e4cdb6" stroke="#8c3630" stroke-width="0.9" />
<rect x="207.8" y="167.0" width="2.0" height="2.0" fill="#e03a3a"/>
<rect x="207.8" y="193.4" width="2.0" height="2.0" fill="#e03a3a"/>
<circle cx="211.6" cy="222.0" r="1.6" fill="#143a1c" stroke="none" stroke-width="1" />
<polygon points="219.6,152.0 217.0,157.2 222.2,157.2" fill="#e3e3d3" stroke="#10351a" stroke-width="1.35"/>
<line x1="219.6" y1="157.3" x2="219.6" y2="173.4" stroke="#1a4022" stroke-width="0.72"/>
<line x1="219.6" y1="189.4" x2="219.6" y2="238.0" stroke="#1a4022" stroke-width="0.72"/>
<rect x="217.1" y="173.4" width="5.0" height="16.0" fill="#e4cdb6" stroke="#8c3630" stroke-width="0.9" />
<rect x="215.8" y="167.0" width="2.0" height="2.0" fill="#e03a3a"/>
<rect x="215.8" y="193.4" width="2.0" height="2.0" fill="#e03a3a"/>
<circle cx="219.6" cy="238.0" r="1.6" fill="#143a1c" stroke="none" stroke-width="1" />
<polygon points="227.6,152.0 225.0,157.2 230.2,157.2" fill="#e3e3d3" stroke="#10351a" stroke-width="1.35"/>
<line x1="227.6" y1="157.3" x2="227.6" y2="173.4" stroke="#1a4022" stroke-width="0.72"/>
<line x1="227.6" y1="189.4" x2="227.6" y2="254.0" stroke="#1a4022" stroke-width="0.72"/>
<rect x="225.1" y="173.4" width="5.0" height="16.0" fill="#e4cdb6" stroke="#8c3630" stroke-width="0.9" />
<rect x="223.8" y="167.0" width="2.0" height="2.0" fill="#e03a3a"/>
<rect x="223.8" y="193.4" width="2.0" height="2.0" fill="#e03a3a"/>
<circle cx="227.6" cy="254.0" r="1.6" fill="#143a1c" stroke="none" stroke-width="1" />
<text x="214.5" y="179.5" font-size="6.2" fill="#1c1c1c" text-anchor="start" font-weight="normal" font-family="Liberation Sans, sans-serif" >R5</text>
<text x="222.5" y="179.5" font-size="6.2" fill="#1c1c1c" text-anchor="start" font-weight="normal" font-family="Liberation Sans, sans-serif" >R6</text>
<text x="231.0" y="179.5" font-size="6.6" fill="#1c1c1c" text-anchor="start" font-weight="normal" font-family="Liberation Sans, sans-serif" >R7</text>
<text x="236.0" y="185.0" font-size="4.3500000000000005" fill="#1c1c1c" text-anchor="start" font-weight="normal" font-family="Liberation Sans, sans-serif"  stroke="#1c1c1c" stroke-width="0.22">10k</text>
<line x1="191.0" y1="206.0" x2="256.5" y2="206.0" stroke="#1a4022" stroke-width="0.72"/>
<circle cx="258.6" cy="206.0" r="2.3" fill="#e3e3d3" stroke="#1a4022" stroke-width="0.8" />
<text x="234.0" y="204.0" font-size="4.45" fill="#1c1c1c" text-anchor="start" font-weight="normal" font-family="Liberation Sans, sans-serif"  stroke="#1c1c1c" stroke-width="0.22">PA0</text>
<line x1="139.4" y1="206.0" x2="173.6" y2="206.0" stroke="#1a4022" stroke-width="0.72"/>
<circle cx="175.0" cy="206.0" r="1.3" fill="#e3e3d3" stroke="#7c2c2c" stroke-width="0.7" />
<circle cx="189.0" cy="206.0" r="1.3" fill="#e3e3d3" stroke="#7c2c2c" stroke-width="0.7" />
<rect x="178.0" y="198.8" width="9.0" height="2.8" fill="#e3e3d3" stroke="#7c2c2c" stroke-width="0.7" />
<line x1="182.5" y1="201.6" x2="182.5" y2="203.6" stroke="#7c2c2c" stroke-width="0.7"/>
<line x1="176.4" y1="203.6" x2="187.6" y2="203.6" stroke="#7c2c2c" stroke-width="0.7"/>
<circle cx="193.2" cy="200.8" r="2.3" fill="#b41010" stroke="none" stroke-width="1" />
<text x="195.5" y="205.0" font-size="3.4" fill="#c33" text-anchor="start" font-weight="normal" font-family="Liberation Sans, sans-serif" >0</text>
<rect x="166" y="201.4" width="5.4" height="3.6" fill="#d6d6ee"/>
<rect x="167.6" y="202.2" width="2.0" height="2.0" fill="#3a3ae0"/>
<line x1="191.0" y1="222.0" x2="256.5" y2="222.0" stroke="#1a4022" stroke-width="0.72"/>
<circle cx="258.6" cy="222.0" r="2.3" fill="#e3e3d3" stroke="#1a4022" stroke-width="0.8" />
<text x="234.0" y="220.0" font-size="4.45" fill="#1c1c1c" text-anchor="start" font-weight="normal" font-family="Liberation Sans, sans-serif"  stroke="#1c1c1c" stroke-width="0.22">PA1</text>
<line x1="139.4" y1="222.0" x2="173.6" y2="222.0" stroke="#1a4022" stroke-width="0.72"/>
<circle cx="175.0" cy="222.0" r="1.3" fill="#e3e3d3" stroke="#7c2c2c" stroke-width="0.7" />
<circle cx="189.0" cy="222.0" r="1.3" fill="#e3e3d3" stroke="#7c2c2c" stroke-width="0.7" />
<rect x="178.0" y="214.8" width="9.0" height="2.8" fill="#e3e3d3" stroke="#7c2c2c" stroke-width="0.7" />
<line x1="182.5" y1="217.6" x2="182.5" y2="219.6" stroke="#7c2c2c" stroke-width="0.7"/>
<line x1="176.4" y1="219.6" x2="187.6" y2="219.6" stroke="#7c2c2c" stroke-width="0.7"/>
<circle cx="193.2" cy="216.8" r="2.3" fill="#b41010" stroke="none" stroke-width="1" />
<text x="195.5" y="221.0" font-size="3.4" fill="#c33" text-anchor="start" font-weight="normal" font-family="Liberation Sans, sans-serif" >0</text>
<rect x="166" y="217.4" width="5.4" height="3.6" fill="#d6d6ee"/>
<rect x="167.6" y="218.2" width="2.0" height="2.0" fill="#3a3ae0"/>
<line x1="191.0" y1="238.0" x2="256.5" y2="238.0" stroke="#1a4022" stroke-width="0.72"/>
<circle cx="258.6" cy="238.0" r="2.3" fill="#e3e3d3" stroke="#1a4022" stroke-width="0.8" />
<text x="234.0" y="236.0" font-size="4.45" fill="#1c1c1c" text-anchor="start" font-weight="normal" font-family="Liberation Sans, sans-serif"  stroke="#1c1c1c" stroke-width="0.22">PA2</text>
<line x1="139.4" y1="238.0" x2="173.6" y2="238.0" stroke="#1a4022" stroke-width="0.72"/>
<circle cx="175.0" cy="238.0" r="1.3" fill="#e3e3d3" stroke="#7c2c2c" stroke-width="0.7" />
<circle cx="189.0" cy="238.0" r="1.3" fill="#e3e3d3" stroke="#7c2c2c" stroke-width="0.7" />
<rect x="178.0" y="230.8" width="9.0" height="2.8" fill="#e3e3d3" stroke="#7c2c2c" stroke-width="0.7" />
<line x1="182.5" y1="233.6" x2="182.5" y2="235.6" stroke="#7c2c2c" stroke-width="0.7"/>
<line x1="176.4" y1="235.6" x2="187.6" y2="235.6" stroke="#7c2c2c" stroke-width="0.7"/>
<circle cx="193.2" cy="232.8" r="2.3" fill="#b41010" stroke="none" stroke-width="1" />
<text x="195.5" y="237.0" font-size="3.4" fill="#c33" text-anchor="start" font-weight="normal" font-family="Liberation Sans, sans-serif" >0</text>
<rect x="166" y="233.4" width="5.4" height="3.6" fill="#d6d6ee"/>
<rect x="167.6" y="234.2" width="2.0" height="2.0" fill="#3a3ae0"/>
<line x1="191.0" y1="254.0" x2="256.5" y2="254.0" stroke="#1a4022" stroke-width="0.72"/>
<circle cx="258.6" cy="254.0" r="2.3" fill="#e3e3d3" stroke="#1a4022" stroke-width="0.8" />
<text x="234.0" y="252.0" font-size="4.45" fill="#1c1c1c" text-anchor="start" font-weight="normal" font-family="Liberation Sans, sans-serif"  stroke="#1c1c1c" stroke-width="0.22">PA3</text>
<line x1="139.4" y1="254.0" x2="173.6" y2="254.0" stroke="#1a4022" stroke-width="0.72"/>
<circle cx="175.0" cy="254.0" r="1.3" fill="#e3e3d3" stroke="#7c2c2c" stroke-width="0.7" />
<circle cx="189.0" cy="254.0" r="1.3" fill="#e3e3d3" stroke="#7c2c2c" stroke-width="0.7" />
<rect x="178.0" y="246.8" width="9.0" height="2.8" fill="#e3e3d3" stroke="#7c2c2c" stroke-width="0.7" />
<line x1="182.5" y1="249.6" x2="182.5" y2="251.6" stroke="#7c2c2c" stroke-width="0.7"/>
<line x1="176.4" y1="251.6" x2="187.6" y2="251.6" stroke="#7c2c2c" stroke-width="0.7"/>
<circle cx="193.2" cy="248.8" r="2.3" fill="#b41010" stroke="none" stroke-width="1" />
<text x="195.5" y="253.0" font-size="3.4" fill="#c33" text-anchor="start" font-weight="normal" font-family="Liberation Sans, sans-serif" >0</text>
<rect x="166" y="249.4" width="5.4" height="3.6" fill="#d6d6ee"/>
<rect x="167.6" y="250.2" width="2.0" height="2.0" fill="#3a3ae0"/>
<polyline points="139.4,206.0 139.4,273.0" fill="none" stroke="#1a4022" stroke-width="0.72" />
<circle cx="139.4" cy="222.0" r="1.6" fill="#143a1c" stroke="none" stroke-width="1" />
<circle cx="139.4" cy="238.0" r="1.6" fill="#143a1c" stroke="none" stroke-width="1" />
<circle cx="139.4" cy="254.0" r="1.6" fill="#143a1c" stroke="none" stroke-width="1" />
<line x1="133.4" y1="273.0" x2="145.4" y2="273.0" stroke="#1a4022" stroke-width="0.72"/>
<line x1="136.4" y1="275.5" x2="142.4" y2="275.5" stroke="#1a4022" stroke-width="0.9"/>
<line x1="138.4" y1="278.0" x2="140.4" y2="278.0" stroke="#1a4022" stroke-width="0.9"/>
<path transform="translate(148.0,195.0)" d="M2.7 0 V5.4 M0 1.5 H5.4 M0 5.4 L2.7 1.5 M5.4 5.4 L2.7 1.5 M1 4.1 H4.4" stroke="#b03030" stroke-width="0.8" fill="none" opacity="0.78"/>
<path transform="translate(153.9,195.0)" d="M0 1.5 H5.4 M1.5 0 V5.4 M4.1 1.5 V5.4 M2.7 3.0 H5.4 M0 5.4 H2.7" stroke="#b03030" stroke-width="0.8" fill="none" opacity="0.78"/>
<path transform="translate(148.0,211.0)" d="M0 1 H2.6 M1.5 0 V5.2 M2.6 1.5 H5.2 M3.9 0 V5.2 M2.6 5.2 H5.2" stroke="#b03030" stroke-width="0.8" fill="none" opacity="0.78"/>
<path transform="translate(153.7,211.0)" d="M1 0 L0 2.9 M0 2.9 H5.2 M2.6 2.9 V5.2 M1 5.2 H4.2 M2.6 0 L5.2 1.5" stroke="#b03030" stroke-width="0.8" fill="none" opacity="0.78"/>
<path transform="translate(159.4,211.0)" d="M0 0.6 H5.2 M1 0.6 V5.2 M4.2 0.6 V5.2 M1 2.9 H4.2 M1 5.2 H4.2" stroke="#b03030" stroke-width="0.8" fill="none" opacity="0.78"/>
<path transform="translate(148.0,227.0)" d="M0 1 H2.6 M1.5 0 V5.2 M2.6 1.5 H5.2 M3.9 0 V5.2 M2.6 5.2 H5.2" stroke="#b03030" stroke-width="0.8" fill="none" opacity="0.78"/>
<path transform="translate(153.7,227.0)" d="M1 0 L0 2.9 M0 2.9 H5.2 M2.6 2.9 V5.2 M1 5.2 H4.2 M2.6 0 L5.2 1.5" stroke="#b03030" stroke-width="0.8" fill="none" opacity="0.78"/>
<path transform="translate(159.4,227.0)" d="M0 0.6 H5.2 M1 0.6 V5.2 M4.2 0.6 V5.2 M1 2.9 H4.2 M1 5.2 H4.2" stroke="#b03030" stroke-width="0.8" fill="none" opacity="0.78"/>
<path transform="translate(148.0,243.0)" d="M2.7 0 V5.4 M0 1.5 H5.4 M0 5.4 L2.7 1.5 M5.4 5.4 L2.7 1.5 M1 4.1 H4.4" stroke="#b03030" stroke-width="0.8" fill="none" opacity="0.78"/>
<path transform="translate(153.9,243.0)" d="M0 1.5 H5.4 M1.5 0 V5.4 M4.1 1.5 V5.4 M2.7 3.0 H5.4 M0 5.4 H2.7" stroke="#b03030" stroke-width="0.8" fill="none" opacity="0.78"/>
<path transform="translate(177.0,261.6)" d="M0 1 H6.0 M3.0 0 V6.0 M0 6.0 L3.0 3.3 L6.0 6.0 M1 3.3 H5.0" stroke="#b03030" stroke-width="0.8" fill="none" opacity="0.78"/>
<path transform="translate(183.5,261.6)" d="M3.0 0 V6.0 M0 1.7 H6.0 M0 6.0 L3.0 1.7 M6.0 6.0 L3.0 1.7 M1 4.5 H5.0" stroke="#b03030" stroke-width="0.8" fill="none" opacity="0.78"/>
<path transform="translate(190.0,261.6)" d="M0 1.7 H6.0 M1.7 0 V6.0 M4.5 1.7 V6.0 M3.0 3.3 H6.0 M0 6.0 H3.0" stroke="#b03030" stroke-width="0.8" fill="none" opacity="0.78"/>
<path transform="translate(196.5,261.6)" d="M0 1 H6.0 M3.0 0 V6.0 M0 6.0 L3.0 3.3 L6.0 6.0 M1 3.3 H5.0" stroke="#b03030" stroke-width="0.8" fill="none" opacity="0.78"/>
<path transform="translate(203.0,261.6)" d="M3.0 0 V6.0 M0 1.7 H6.0 M0 6.0 L3.0 1.7 M6.0 6.0 L3.0 1.7 M1 4.5 H5.0" stroke="#b03030" stroke-width="0.8" fill="none" opacity="0.78"/>
<path transform="translate(209.5,261.6)" d="M0 1.7 H6.0 M1.7 0 V6.0 M4.5 1.7 V6.0 M3.0 3.3 H6.0 M0 6.0 H3.0" stroke="#b03030" stroke-width="0.8" fill="none" opacity="0.78"/>
<text x="149.6" y="277.0" font-size="6.75" fill="#a02020" text-anchor="start" font-weight="normal" font-family="Liberation Sans, sans-serif" >Set Standard Condition Thresholds</text>
<polygon points="152.4,292.4 149.8,297.6 155.0,297.6" fill="#e3e3d3" stroke="#10351a" stroke-width="1.35"/>
<line x1="152.4" y1="297.6" x2="152.4" y2="321.6" stroke="#1a4022" stroke-width="0.72"/>
<rect x="150.2" y="321.6" width="4.4" height="16.8" fill="#e4cdb6" stroke="#8c3630" stroke-width="0.9" />
<path d="M150.8 328.0 l2.6 -3 M150.8 332.0 l2.6 -3 M150.8 336.0 l2.6 -3" stroke="#8c3630" stroke-width="0.6"/>
<line x1="152.4" y1="338.4" x2="152.4" y2="357.0" stroke="#1a4022" stroke-width="0.72"/>
<line x1="147.4" y1="357.0" x2="157.4" y2="357.0" stroke="#1a4022" stroke-width="0.72"/>
<line x1="149.9" y1="359.5" x2="154.9" y2="359.5" stroke="#1a4022" stroke-width="0.9"/>
<line x1="151.4" y1="362.0" x2="153.4" y2="362.0" stroke="#1a4022" stroke-width="0.9"/>
<polyline points="154.6,332.6 158.0,330.0 183.4,330.0" fill="none" stroke="#1a4022" stroke-width="0.72" />
<circle cx="185.6" cy="330.0" r="2.3" fill="#e3e3d3" stroke="#1a4022" stroke-width="0.8" />
<polygon points="154.6,332.6 156.8,330.4 157.0,333.0" fill="#1a4022"/>
<text x="172.2" y="327.4" font-size="4.45" fill="#1c1c1c" text-anchor="start" font-weight="normal" font-family="Liberation Sans, sans-serif"  stroke="#1c1c1c" stroke-width="0.22">PA4</text>
<rect x="161.8" y="330.6" width="4.4" height="3.6" fill="#d6d6ee"/>
<rect x="162.6" y="331.4" width="2.0" height="2.0" fill="#3a3ae0"/>
<text x="160.0" y="338.0" font-size="4.3500000000000005" fill="#1c1c1c" text-anchor="start" font-weight="normal" font-family="Liberation Sans, sans-serif"  stroke="#1c1c1c" stroke-width="0.22">10k</text>
<circle cx="146.4" cy="323.6" r="2.3" fill="#a80808" stroke="none" stroke-width="1" />
<circle cx="146.4" cy="335.6" r="2.3" fill="#a80808" stroke="none" stroke-width="1" />
<rect x="147.0" y="312.0" width="2.0" height="2.0" fill="#e03a3a"/>
<rect x="147.0" y="344.0" width="2.0" height="2.0" fill="#3a3ae0"/>
<text x="159.0" y="312.2" font-size="6.6" fill="#1c1c1c" text-anchor="start" font-weight="normal" font-family="Liberation Sans, sans-serif" >RV1</text>
<polygon points="206.4,292.4 203.8,297.6 209.0,297.6" fill="#e3e3d3" stroke="#10351a" stroke-width="1.35"/>
<line x1="206.4" y1="297.6" x2="206.4" y2="321.6" stroke="#1a4022" stroke-width="0.72"/>
<rect x="204.2" y="321.6" width="4.4" height="16.8" fill="#e4cdb6" stroke="#8c3630" stroke-width="0.9" />
<path d="M204.8 328.0 l2.6 -3 M204.8 332.0 l2.6 -3 M204.8 336.0 l2.6 -3" stroke="#8c3630" stroke-width="0.6"/>
<line x1="206.4" y1="338.4" x2="206.4" y2="357.0" stroke="#1a4022" stroke-width="0.72"/>
<line x1="201.4" y1="357.0" x2="211.4" y2="357.0" stroke="#1a4022" stroke-width="0.72"/>
<line x1="203.9" y1="359.5" x2="208.9" y2="359.5" stroke="#1a4022" stroke-width="0.9"/>
<line x1="205.4" y1="362.0" x2="207.4" y2="362.0" stroke="#1a4022" stroke-width="0.9"/>
<polyline points="208.6,332.6 212.0,330.0 240.6,330.0" fill="none" stroke="#1a4022" stroke-width="0.72" />
<circle cx="242.8" cy="330.0" r="2.3" fill="#e3e3d3" stroke="#1a4022" stroke-width="0.8" />
<polygon points="208.6,332.6 210.8,330.4 211.0,333.0" fill="#1a4022"/>
<text x="228.1" y="327.4" font-size="4.45" fill="#1c1c1c" text-anchor="start" font-weight="normal" font-family="Liberation Sans, sans-serif"  stroke="#1c1c1c" stroke-width="0.22">PA5</text>
<rect x="215.8" y="330.6" width="4.4" height="3.6" fill="#d6d6ee"/>
<rect x="216.6" y="331.4" width="2.0" height="2.0" fill="#3a3ae0"/>
<text x="214.0" y="338.0" font-size="4.3500000000000005" fill="#1c1c1c" text-anchor="start" font-weight="normal" font-family="Liberation Sans, sans-serif"  stroke="#1c1c1c" stroke-width="0.22">10k</text>
<circle cx="200.4" cy="323.6" r="2.3" fill="#a80808" stroke="none" stroke-width="1" />
<circle cx="200.4" cy="335.6" r="2.3" fill="#a80808" stroke="none" stroke-width="1" />
<rect x="201.0" y="312.0" width="2.0" height="2.0" fill="#e03a3a"/>
<rect x="201.0" y="344.0" width="2.0" height="2.0" fill="#3a3ae0"/>
<text x="213.0" y="312.2" font-size="6.6" fill="#1c1c1c" text-anchor="start" font-weight="normal" font-family="Liberation Sans, sans-serif" >RV2</text>
<path transform="translate(141.0,366.6)" d="M0 1.6 H5.6 M1.6 0 V5.6 M4.2 1.6 V5.6 M2.8 3.1 H5.6 M0 5.6 H2.8" stroke="#b03030" stroke-width="0.8" fill="none" opacity="0.78"/>
<path transform="translate(147.1,366.6)" d="M0 1 H5.6 M2.8 0 V5.6 M0 5.6 L2.8 3.1 L5.6 5.6 M1 3.1 H4.6" stroke="#b03030" stroke-width="0.8" fill="none" opacity="0.78"/>
<path transform="translate(153.2,366.6)" d="M2.8 0 V5.6 M0 1.6 H5.6 M0 5.6 L2.8 1.6 M5.6 5.6 L2.8 1.6 M1 4.2 H4.6" stroke="#b03030" stroke-width="0.8" fill="none" opacity="0.78"/>
<path transform="translate(159.3,366.6)" d="M0 1.6 H5.6 M1.6 0 V5.6 M4.2 1.6 V5.6 M2.8 3.1 H5.6 M0 5.6 H2.8" stroke="#b03030" stroke-width="0.8" fill="none" opacity="0.78"/>
<text x="129.0" y="377.0" font-size="6.75" fill="#a02020" text-anchor="start" font-weight="normal" font-family="Liberation Sans, sans-serif" >Illumination Simulation</text>
<path transform="translate(215.6,340.4)" d="M0 1.6 H5.6 M1.6 0 V5.6 M4.2 1.6 V5.6 M2.8 3.1 H5.6 M0 5.6 H2.8" stroke="#b03030" stroke-width="0.8" fill="none" opacity="0.78"/>
<path transform="translate(221.7,340.4)" d="M0 1 H5.6 M2.8 0 V5.6 M0 5.6 L2.8 3.1 L5.6 5.6 M1 3.1 H4.6" stroke="#b03030" stroke-width="0.8" fill="none" opacity="0.78"/>
<path transform="translate(227.8,340.4)" d="M2.8 0 V5.6 M0 1.6 H5.6 M0 5.6 L2.8 1.6 M5.6 5.6 L2.8 1.6 M1 4.2 H4.6" stroke="#b03030" stroke-width="0.8" fill="none" opacity="0.78"/>
<path transform="translate(233.9,340.4)" d="M0 1.6 H5.6 M1.6 0 V5.6 M4.2 1.6 V5.6 M2.8 3.1 H5.6 M0 5.6 H2.8" stroke="#b03030" stroke-width="0.8" fill="none" opacity="0.78"/>
<text x="209.8" y="355.5" font-size="6.75" fill="#a02020" text-anchor="start" font-weight="normal" font-family="Liberation Sans, sans-serif" >Smoke Simulation</text>
<text x="144.4" y="432.4" font-size="6.6" fill="#1c1c1c" text-anchor="start" font-weight="normal" font-family="Liberation Sans, sans-serif" >U3</text>
<rect x="144.4" y="435.0" width="49.2" height="27.4" fill="#d2cfb6" stroke="#8c3630" stroke-width="0.9" />
<rect x="147.2" y="440.2" width="22" height="11" fill="#0c6a1e" stroke="#2aa83e" stroke-width="0.7"/>
<rect x="155" y="442" width="7" height="3" fill="#3da040"/><rect x="155" y="446.6" width="7" height="3" fill="#3da040"/>
<circle cx="158.0" cy="456.6" r="2.3" fill="#b00c0c" stroke="none" stroke-width="1" />
<circle cx="179.4" cy="456.6" r="2.3" fill="#b00c0c" stroke="none" stroke-width="1" />
<circle cx="188.0" cy="456.6" r="2.3" fill="#b00c0c" stroke="none" stroke-width="1" />
<rect x="150.4" y="455.6" width="2.0" height="2.0" fill="#e03a3a"/>
<text x="162.0" y="458.0" font-size="3.2" fill="#c88" text-anchor="start" font-weight="normal" font-family="Liberation Sans, sans-serif" >%RH</text>
<text x="170.4" y="452.0" font-size="3" fill="#777" text-anchor="start" font-weight="normal" font-family="Liberation Sans, sans-serif" >></text>
<text x="182.0" y="442.2" font-size="4.45" fill="#1c1c1c" text-anchor="start" font-weight="normal" font-family="Liberation Sans, sans-serif"  stroke="#1c1c1c" stroke-width="0.22">VDD</text>
<text x="180.0" y="447.6" font-size="4.45" fill="#1c1c1c" text-anchor="start" font-weight="normal" font-family="Liberation Sans, sans-serif"  stroke="#1c1c1c" stroke-width="0.22">DATA</text>
<text x="182.0" y="453.0" font-size="4.45" fill="#1c1c1c" text-anchor="start" font-weight="normal" font-family="Liberation Sans, sans-serif"  stroke="#1c1c1c" stroke-width="0.22">GND</text>
<text x="144.4" y="467.0" font-size="4.3500000000000005" fill="#1c1c1c" text-anchor="start" font-weight="normal" font-family="Liberation Sans, sans-serif"  stroke="#1c1c1c" stroke-width="0.22">DHT11</text>
<path transform="translate(161.0,464.0)" d="M1 0 L0 3.3 M0 3.3 H6.0 M3.0 3.3 V6.0 M1 6.0 H5.0 M3.0 0 L6.0 1.7" stroke="#b03030" stroke-width="0.8" fill="none" opacity="0.78"/>
<path transform="translate(167.5,464.0)" d="M0 0.6 H6.0 M1 0.6 V6.0 M5.0 0.6 V6.0 M1 3.3 H5.0 M1 6.0 H5.0" stroke="#b03030" stroke-width="0.8" fill="none" opacity="0.78"/>
<path transform="translate(174.0,464.0)" d="M0 1 H3.0 M1.7 0 V6.0 M3.0 1.7 H6.0 M4.5 0 V6.0 M3.0 6.0 H6.0" stroke="#b03030" stroke-width="0.8" fill="none" opacity="0.78"/>
<path transform="translate(180.5,464.0)" d="M1 0 L0 3.3 M0 3.3 H6.0 M3.0 3.3 V6.0 M1 6.0 H5.0 M3.0 0 L6.0 1.7" stroke="#b03030" stroke-width="0.8" fill="none" opacity="0.78"/>
<path transform="translate(187.0,464.0)" d="M0 0.6 H6.0 M1 0.6 V6.0 M5.0 0.6 V6.0 M1 3.3 H5.0 M1 6.0 H5.0" stroke="#b03030" stroke-width="0.8" fill="none" opacity="0.78"/>
<text x="128.4" y="480.0" font-size="6.75" fill="#a02020" text-anchor="start" font-weight="normal" font-family="Liberation Sans, sans-serif" >Temperature and Humidity Simulation</text>
<polyline points="193.6,440.6 209.0,440.6 209.0,400.0 222.6,400.0" fill="none" stroke="#1a4022" stroke-width="0.72" />
<line x1="193.6" y1="446.0" x2="240.3" y2="446.0" stroke="#1a4022" stroke-width="0.72"/>
<circle cx="242.4" cy="446.0" r="2.3" fill="#e3e3d3" stroke="#1a4022" stroke-width="0.8" />
<polyline points="193.6,451.4 209.0,451.4 209.0,483.4" fill="none" stroke="#1a4022" stroke-width="0.72" />
<line x1="203.5" y1="483.4" x2="214.5" y2="483.4" stroke="#1a4022" stroke-width="0.72"/>
<line x1="206.2" y1="485.9" x2="211.8" y2="485.9" stroke="#1a4022" stroke-width="0.9"/>
<line x1="208.0" y1="488.4" x2="210.0" y2="488.4" stroke="#1a4022" stroke-width="0.9"/>
<line x1="193.6" y1="440.6" x2="200.0" y2="440.6" stroke="#a03c34" stroke-width="0.72"/>
<line x1="193.6" y1="446.0" x2="200.0" y2="446.0" stroke="#a03c34" stroke-width="0.72"/>
<line x1="193.6" y1="451.4" x2="200.0" y2="451.4" stroke="#a03c34" stroke-width="0.72"/>
<text x="198.4" y="439.4" font-size="3.6" fill="#1c1c1c" text-anchor="start" font-weight="normal" font-family="Liberation Sans, sans-serif" >1</text>
<text x="198.4" y="444.8" font-size="3.6" fill="#1c1c1c" text-anchor="start" font-weight="normal" font-family="Liberation Sans, sans-serif" >2</text>
<text x="198.4" y="450.4" font-size="3.6" fill="#1c1c1c" text-anchor="start" font-weight="normal" font-family="Liberation Sans, sans-serif" >4</text>
<rect x="195.5" y="442.5" width="1.8" height="1.8" fill="#e03a3a"/>
<polygon points="222.6,387.0 220.0,392.2 225.2,392.2" fill="#e3e3d3" stroke="#10351a" stroke-width="1.35"/>
<line x1="222.6" y1="392.2" x2="222.6" y2="419.0" stroke="#1a4022" stroke-width="0.72"/>
<circle cx="222.6" cy="400.0" r="1.6" fill="#143a1c" stroke="none" stroke-width="1" />
<rect x="220.3" y="419.0" width="4.6" height="16.0" fill="#e4cdb6" stroke="#8c3630" stroke-width="0.9" />
<line x1="222.6" y1="435.0" x2="222.6" y2="446.0" stroke="#1a4022" stroke-width="0.72"/>
<circle cx="222.6" cy="446.0" r="1.6" fill="#143a1c" stroke="none" stroke-width="1" />
<rect x="218.4" y="412.0" width="2.0" height="2.0" fill="#e03a3a"/>
<rect x="218.4" y="439.0" width="2.0" height="2.0" fill="#e03a3a"/>
<text x="229.0" y="424.4" font-size="6.6" fill="#1c1c1c" text-anchor="start" font-weight="normal" font-family="Liberation Sans, sans-serif" >R4</text>
<text x="229.0" y="429.6" font-size="4.3500000000000005" fill="#1c1c1c" text-anchor="start" font-weight="normal" font-family="Liberation Sans, sans-serif"  stroke="#1c1c1c" stroke-width="0.22">10k</text>
<text x="231.0" y="443.4" font-size="4.45" fill="#1c1c1c" text-anchor="start" font-weight="normal" font-family="Liberation Sans, sans-serif"  stroke="#1c1c1c" stroke-width="0.22">PB0</text>
<text x="344.4" y="243.6" font-size="6.6" fill="#1c1c1c" text-anchor="start" font-weight="normal" font-family="Liberation Sans, sans-serif" >U1</text>
<rect x="344.0" y="246.4" width="70.4" height="182.6" fill="#c9c9ad" stroke="#8c3630" stroke-width="0.9" />
<text x="344.4" y="433.6" font-size="4.3500000000000005" fill="#1c1c1c" text-anchor="start" font-weight="normal" font-family="Liberation Sans, sans-serif"  stroke="#1c1c1c" stroke-width="0.22">STM32F103R6</text>
<line x1="336.0" y1="252.0" x2="344.0" y2="252.0" stroke="#a03c34" stroke-width="0.72"/>
<line x1="307.7" y1="252.0" x2="336.0" y2="252.0" stroke="#1a4022" stroke-width="0.72"/>
<circle cx="305.6" cy="252.0" r="2.3" fill="#e3e3d3" stroke="#1a4022" stroke-width="0.8" />
<text x="347.0" y="253.6" font-size="4.45" fill="#1c1c1c" text-anchor="start" font-weight="normal" font-family="Liberation Sans, sans-serif"  stroke="#1c1c1c" stroke-width="0.22">PA0-WKUP</text>
<text x="314.8" y="249.7" font-size="4.45" fill="#1c1c1c" text-anchor="start" font-weight="normal" font-family="Liberation Sans, sans-serif"  stroke="#1c1c1c" stroke-width="0.22">PA0</text>
<text x="336.6" y="251.4" font-size="4.2" fill="#333" text-anchor="middle" font-weight="normal" font-family="Liberation Sans, sans-serif" >14</text>
<line x1="336.0" y1="257.4" x2="344.0" y2="257.4" stroke="#a03c34" stroke-width="0.72"/>
<line x1="307.7" y1="257.4" x2="336.0" y2="257.4" stroke="#1a4022" stroke-width="0.72"/>
<circle cx="305.6" cy="257.4" r="2.3" fill="#e3e3d3" stroke="#1a4022" stroke-width="0.8" />
<text x="347.0" y="259.0" font-size="4.45" fill="#1c1c1c" text-anchor="start" font-weight="normal" font-family="Liberation Sans, sans-serif"  stroke="#1c1c1c" stroke-width="0.22">PA1</text>
<text x="314.8" y="255.1" font-size="4.45" fill="#1c1c1c" text-anchor="start" font-weight="normal" font-family="Liberation Sans, sans-serif"  stroke="#1c1c1c" stroke-width="0.22">PA1</text>
<text x="336.6" y="256.8" font-size="4.2" fill="#333" text-anchor="middle" font-weight="normal" font-family="Liberation Sans, sans-serif" >15</text>
<rect x="333.4" y="253.2" width="7.6" height="3.6" fill="#ecc8c8" opacity="0.8"/>
<rect x="338.4" y="254.2" width="2.0" height="2.0" fill="#e03a3a"/>
<line x1="336.0" y1="262.8" x2="344.0" y2="262.8" stroke="#a03c34" stroke-width="0.72"/>
<line x1="307.7" y1="262.8" x2="336.0" y2="262.8" stroke="#1a4022" stroke-width="0.72"/>
<circle cx="305.6" cy="262.8" r="2.3" fill="#e3e3d3" stroke="#1a4022" stroke-width="0.8" />
<text x="347.0" y="264.4" font-size="4.45" fill="#1c1c1c" text-anchor="start" font-weight="normal" font-family="Liberation Sans, sans-serif"  stroke="#1c1c1c" stroke-width="0.22">PA2</text>
<text x="314.8" y="260.5" font-size="4.45" fill="#1c1c1c" text-anchor="start" font-weight="normal" font-family="Liberation Sans, sans-serif"  stroke="#1c1c1c" stroke-width="0.22">PA2</text>
<text x="336.6" y="262.2" font-size="4.2" fill="#333" text-anchor="middle" font-weight="normal" font-family="Liberation Sans, sans-serif" >16</text>
<rect x="333.4" y="258.6" width="7.6" height="3.6" fill="#ecc8c8" opacity="0.8"/>
<rect x="338.4" y="259.6" width="2.0" height="2.0" fill="#e03a3a"/>
<line x1="336.0" y1="268.2" x2="344.0" y2="268.2" stroke="#a03c34" stroke-width="0.72"/>
<line x1="307.7" y1="268.2" x2="336.0" y2="268.2" stroke="#1a4022" stroke-width="0.72"/>
<circle cx="305.6" cy="268.2" r="2.3" fill="#e3e3d3" stroke="#1a4022" stroke-width="0.8" />
<text x="347.0" y="269.8" font-size="4.45" fill="#1c1c1c" text-anchor="start" font-weight="normal" font-family="Liberation Sans, sans-serif"  stroke="#1c1c1c" stroke-width="0.22">PA3</text>
<text x="314.8" y="265.9" font-size="4.45" fill="#1c1c1c" text-anchor="start" font-weight="normal" font-family="Liberation Sans, sans-serif"  stroke="#1c1c1c" stroke-width="0.22">PA3</text>
<text x="336.6" y="267.6" font-size="4.2" fill="#333" text-anchor="middle" font-weight="normal" font-family="Liberation Sans, sans-serif" >17</text>
<rect x="333.4" y="264.0" width="7.6" height="3.6" fill="#ecc8c8" opacity="0.8"/>
<rect x="338.4" y="265.0" width="2.0" height="2.0" fill="#e03a3a"/>
<line x1="336.0" y1="273.6" x2="344.0" y2="273.6" stroke="#a03c34" stroke-width="0.72"/>
<line x1="307.7" y1="273.6" x2="336.0" y2="273.6" stroke="#1a4022" stroke-width="0.72"/>
<circle cx="305.6" cy="273.6" r="2.3" fill="#e3e3d3" stroke="#1a4022" stroke-width="0.8" />
<text x="347.0" y="275.2" font-size="4.45" fill="#1c1c1c" text-anchor="start" font-weight="normal" font-family="Liberation Sans, sans-serif"  stroke="#1c1c1c" stroke-width="0.22">PA4</text>
<text x="314.8" y="271.3" font-size="4.45" fill="#1c1c1c" text-anchor="start" font-weight="normal" font-family="Liberation Sans, sans-serif"  stroke="#1c1c1c" stroke-width="0.22">PA4</text>
<text x="336.6" y="273.0" font-size="4.2" fill="#333" text-anchor="middle" font-weight="normal" font-family="Liberation Sans, sans-serif" >20</text>
<rect x="333.4" y="269.4" width="7.6" height="3.6" fill="#d0d0f0" opacity="0.8"/>
<rect x="338.4" y="270.4" width="2.0" height="2.0" fill="#3a3ae0"/>
<line x1="336.0" y1="279.0" x2="344.0" y2="279.0" stroke="#a03c34" stroke-width="0.72"/>
<line x1="307.7" y1="279.0" x2="336.0" y2="279.0" stroke="#1a4022" stroke-width="0.72"/>
<circle cx="305.6" cy="279.0" r="2.3" fill="#e3e3d3" stroke="#1a4022" stroke-width="0.8" />
<text x="347.0" y="280.6" font-size="4.45" fill="#1c1c1c" text-anchor="start" font-weight="normal" font-family="Liberation Sans, sans-serif"  stroke="#1c1c1c" stroke-width="0.22">PA5</text>
<text x="314.8" y="276.7" font-size="4.45" fill="#1c1c1c" text-anchor="start" font-weight="normal" font-family="Liberation Sans, sans-serif"  stroke="#1c1c1c" stroke-width="0.22">PA5</text>
<text x="336.6" y="278.4" font-size="4.2" fill="#333" text-anchor="middle" font-weight="normal" font-family="Liberation Sans, sans-serif" >21</text>
<rect x="333.4" y="274.8" width="7.6" height="3.6" fill="#d0d0f0" opacity="0.8"/>
<rect x="338.4" y="275.8" width="2.0" height="2.0" fill="#3a3ae0"/>
<line x1="336.0" y1="284.4" x2="344.0" y2="284.4" stroke="#a03c34" stroke-width="0.72"/>
<line x1="307.7" y1="284.4" x2="336.0" y2="284.4" stroke="#1a4022" stroke-width="0.72"/>
<circle cx="305.6" cy="284.4" r="2.3" fill="#e3e3d3" stroke="#1a4022" stroke-width="0.8" />
<text x="347.0" y="286.0" font-size="4.45" fill="#1c1c1c" text-anchor="start" font-weight="normal" font-family="Liberation Sans, sans-serif"  stroke="#1c1c1c" stroke-width="0.22">PA6</text>
<text x="314.8" y="282.1" font-size="4.45" fill="#1c1c1c" text-anchor="start" font-weight="normal" font-family="Liberation Sans, sans-serif"  stroke="#1c1c1c" stroke-width="0.22">PA6</text>
<text x="336.6" y="283.8" font-size="4.2" fill="#333" text-anchor="middle" font-weight="normal" font-family="Liberation Sans, sans-serif" >22</text>
<line x1="336.0" y1="289.8" x2="344.0" y2="289.8" stroke="#a03c34" stroke-width="0.72"/>
<line x1="307.7" y1="289.8" x2="336.0" y2="289.8" stroke="#1a4022" stroke-width="0.72"/>
<circle cx="305.6" cy="289.8" r="2.3" fill="#e3e3d3" stroke="#1a4022" stroke-width="0.8" />
<text x="347.0" y="291.4" font-size="4.45" fill="#1c1c1c" text-anchor="start" font-weight="normal" font-family="Liberation Sans, sans-serif"  stroke="#1c1c1c" stroke-width="0.22">PA7</text>
<text x="314.8" y="287.5" font-size="4.45" fill="#1c1c1c" text-anchor="start" font-weight="normal" font-family="Liberation Sans, sans-serif"  stroke="#1c1c1c" stroke-width="0.22">PA7</text>
<text x="336.6" y="289.2" font-size="4.2" fill="#333" text-anchor="middle" font-weight="normal" font-family="Liberation Sans, sans-serif" >23</text>
<line x1="336.0" y1="295.2" x2="344.0" y2="295.2" stroke="#a03c34" stroke-width="0.72"/>
<line x1="307.7" y1="295.2" x2="336.0" y2="295.2" stroke="#1a4022" stroke-width="0.72"/>
<circle cx="305.6" cy="295.2" r="2.3" fill="#e3e3d3" stroke="#1a4022" stroke-width="0.8" />
<text x="347.0" y="296.8" font-size="4.45" fill="#1c1c1c" text-anchor="start" font-weight="normal" font-family="Liberation Sans, sans-serif"  stroke="#1c1c1c" stroke-width="0.22">PA8</text>
<text x="314.8" y="292.9" font-size="4.45" fill="#1c1c1c" text-anchor="start" font-weight="normal" font-family="Liberation Sans, sans-serif"  stroke="#1c1c1c" stroke-width="0.22">PA8</text>
<text x="336.6" y="294.6" font-size="4.2" fill="#333" text-anchor="middle" font-weight="normal" font-family="Liberation Sans, sans-serif" >41</text>
<rect x="333.4" y="291.0" width="7.6" height="3.6" fill="#d0d0f0" opacity="0.8"/>
<rect x="338.4" y="292.0" width="2.0" height="2.0" fill="#3a3ae0"/>
<text x="296.4" y="301.8" font-size="3.4" fill="#333" text-anchor="start" font-weight="normal" font-family="Liberation Sans, sans-serif" >RX</text>
<line x1="336.0" y1="300.6" x2="344.0" y2="300.6" stroke="#a03c34" stroke-width="0.72"/>
<line x1="309.0" y1="300.6" x2="336.0" y2="300.6" stroke="#1a4022" stroke-width="0.72"/>
<polygon points="309,300.6 307,298.6 304,298.6 304,302.6 307,302.6" fill="#e3e3d3" stroke="#1a4022" stroke-width="0.9"/>
<text x="347.0" y="302.2" font-size="4.45" fill="#1c1c1c" text-anchor="start" font-weight="normal" font-family="Liberation Sans, sans-serif"  stroke="#1c1c1c" stroke-width="0.22">PA9</text>
<text x="314.8" y="298.3" font-size="4.45" fill="#1c1c1c" text-anchor="start" font-weight="normal" font-family="Liberation Sans, sans-serif"  stroke="#1c1c1c" stroke-width="0.22">PA9</text>
<text x="336.6" y="300.0" font-size="4.2" fill="#333" text-anchor="middle" font-weight="normal" font-family="Liberation Sans, sans-serif" >42</text>
<rect x="333.4" y="296.4" width="7.6" height="3.6" fill="#ecc8c8" opacity="0.8"/>
<rect x="338.4" y="297.4" width="2.0" height="2.0" fill="#e03a3a"/>
<text x="296.4" y="307.2" font-size="3.4" fill="#333" text-anchor="start" font-weight="normal" font-family="Liberation Sans, sans-serif" >TX</text>
<line x1="336.0" y1="306.0" x2="344.0" y2="306.0" stroke="#a03c34" stroke-width="0.72"/>
<line x1="309.0" y1="306.0" x2="336.0" y2="306.0" stroke="#1a4022" stroke-width="0.72"/>
<polygon points="304,306.0 306,304.0 309,304.0 309,308.0 306,308.0" fill="#e3e3d3" stroke="#1a4022" stroke-width="0.9"/>
<text x="347.0" y="307.6" font-size="4.45" fill="#1c1c1c" text-anchor="start" font-weight="normal" font-family="Liberation Sans, sans-serif"  stroke="#1c1c1c" stroke-width="0.22">PA10</text>
<text x="314.8" y="303.7" font-size="4.45" fill="#1c1c1c" text-anchor="start" font-weight="normal" font-family="Liberation Sans, sans-serif"  stroke="#1c1c1c" stroke-width="0.22">PA10</text>
<text x="336.6" y="305.4" font-size="4.2" fill="#333" text-anchor="middle" font-weight="normal" font-family="Liberation Sans, sans-serif" >43</text>
<rect x="333.4" y="301.8" width="7.6" height="3.6" fill="#ecc8c8" opacity="0.8"/>
<rect x="338.4" y="302.8" width="2.0" height="2.0" fill="#e03a3a"/>
<line x1="336.0" y1="311.4" x2="344.0" y2="311.4" stroke="#a03c34" stroke-width="0.72"/>
<line x1="307.7" y1="311.4" x2="336.0" y2="311.4" stroke="#1a4022" stroke-width="0.72"/>
<circle cx="305.6" cy="311.4" r="2.3" fill="#e3e3d3" stroke="#1a4022" stroke-width="0.8" />
<text x="347.0" y="313.0" font-size="4.45" fill="#1c1c1c" text-anchor="start" font-weight="normal" font-family="Liberation Sans, sans-serif"  stroke="#1c1c1c" stroke-width="0.22">PA11</text>
<text x="314.8" y="309.1" font-size="4.45" fill="#1c1c1c" text-anchor="start" font-weight="normal" font-family="Liberation Sans, sans-serif"  stroke="#1c1c1c" stroke-width="0.22">PA11</text>
<text x="336.6" y="310.8" font-size="4.2" fill="#333" text-anchor="middle" font-weight="normal" font-family="Liberation Sans, sans-serif" >44</text>
<line x1="336.0" y1="316.8" x2="344.0" y2="316.8" stroke="#a03c34" stroke-width="0.72"/>
<line x1="307.7" y1="316.8" x2="336.0" y2="316.8" stroke="#1a4022" stroke-width="0.72"/>
<circle cx="305.6" cy="316.8" r="2.3" fill="#e3e3d3" stroke="#1a4022" stroke-width="0.8" />
<text x="347.0" y="318.4" font-size="4.45" fill="#1c1c1c" text-anchor="start" font-weight="normal" font-family="Liberation Sans, sans-serif"  stroke="#1c1c1c" stroke-width="0.22">PA12</text>
<text x="314.8" y="314.5" font-size="4.45" fill="#1c1c1c" text-anchor="start" font-weight="normal" font-family="Liberation Sans, sans-serif"  stroke="#1c1c1c" stroke-width="0.22">PA12</text>
<text x="336.6" y="316.2" font-size="4.2" fill="#333" text-anchor="middle" font-weight="normal" font-family="Liberation Sans, sans-serif" >45</text>
<line x1="336.0" y1="322.2" x2="344.0" y2="322.2" stroke="#a03c34" stroke-width="0.72"/>
<line x1="307.7" y1="322.2" x2="336.0" y2="322.2" stroke="#1a4022" stroke-width="0.72"/>
<circle cx="305.6" cy="322.2" r="2.3" fill="#e3e3d3" stroke="#1a4022" stroke-width="0.8" />
<text x="347.0" y="323.8" font-size="4.45" fill="#1c1c1c" text-anchor="start" font-weight="normal" font-family="Liberation Sans, sans-serif"  stroke="#1c1c1c" stroke-width="0.22">PA13</text>
<text x="314.8" y="319.9" font-size="4.45" fill="#1c1c1c" text-anchor="start" font-weight="normal" font-family="Liberation Sans, sans-serif"  stroke="#1c1c1c" stroke-width="0.22">PA13</text>
<text x="336.6" y="321.6" font-size="4.2" fill="#333" text-anchor="middle" font-weight="normal" font-family="Liberation Sans, sans-serif" >46</text>
<line x1="336.0" y1="327.6" x2="344.0" y2="327.6" stroke="#a03c34" stroke-width="0.72"/>
<line x1="307.7" y1="327.6" x2="336.0" y2="327.6" stroke="#1a4022" stroke-width="0.72"/>
<circle cx="305.6" cy="327.6" r="2.3" fill="#e3e3d3" stroke="#1a4022" stroke-width="0.8" />
<text x="347.0" y="329.2" font-size="4.45" fill="#1c1c1c" text-anchor="start" font-weight="normal" font-family="Liberation Sans, sans-serif"  stroke="#1c1c1c" stroke-width="0.22">PA14</text>
<text x="314.8" y="325.3" font-size="4.45" fill="#1c1c1c" text-anchor="start" font-weight="normal" font-family="Liberation Sans, sans-serif"  stroke="#1c1c1c" stroke-width="0.22">PA14</text>
<text x="336.6" y="327.0" font-size="4.2" fill="#333" text-anchor="middle" font-weight="normal" font-family="Liberation Sans, sans-serif" >49</text>
<line x1="336.0" y1="333.0" x2="344.0" y2="333.0" stroke="#a03c34" stroke-width="0.72"/>
<line x1="307.7" y1="333.0" x2="336.0" y2="333.0" stroke="#1a4022" stroke-width="0.72"/>
<circle cx="305.6" cy="333.0" r="2.3" fill="#e3e3d3" stroke="#1a4022" stroke-width="0.8" />
<text x="347.0" y="334.6" font-size="4.45" fill="#1c1c1c" text-anchor="start" font-weight="normal" font-family="Liberation Sans, sans-serif"  stroke="#1c1c1c" stroke-width="0.22">PA15</text>
<text x="314.8" y="330.7" font-size="4.45" fill="#1c1c1c" text-anchor="start" font-weight="normal" font-family="Liberation Sans, sans-serif"  stroke="#1c1c1c" stroke-width="0.22">PA15</text>
<text x="336.6" y="332.4" font-size="4.2" fill="#333" text-anchor="middle" font-weight="normal" font-family="Liberation Sans, sans-serif" >50</text>
<line x1="336.0" y1="343.8" x2="344.0" y2="343.8" stroke="#a03c34" stroke-width="0.72"/>
<line x1="307.7" y1="343.8" x2="336.0" y2="343.8" stroke="#1a4022" stroke-width="0.72"/>
<circle cx="305.6" cy="343.8" r="2.3" fill="#e3e3d3" stroke="#1a4022" stroke-width="0.8" />
<text x="347.0" y="345.4" font-size="4.45" fill="#1c1c1c" text-anchor="start" font-weight="normal" font-family="Liberation Sans, sans-serif"  stroke="#1c1c1c" stroke-width="0.22">PB0</text>
<text x="314.8" y="341.5" font-size="4.45" fill="#1c1c1c" text-anchor="start" font-weight="normal" font-family="Liberation Sans, sans-serif"  stroke="#1c1c1c" stroke-width="0.22">PB0</text>
<text x="336.6" y="343.2" font-size="4.2" fill="#333" text-anchor="middle" font-weight="normal" font-family="Liberation Sans, sans-serif" >26</text>
<rect x="333.4" y="339.6" width="7.6" height="3.6" fill="#d0d0f0" opacity="0.8"/>
<rect x="338.4" y="340.6" width="2.0" height="2.0" fill="#3a3ae0"/>
<line x1="336.0" y1="349.2" x2="344.0" y2="349.2" stroke="#a03c34" stroke-width="0.72"/>
<line x1="307.7" y1="349.2" x2="336.0" y2="349.2" stroke="#1a4022" stroke-width="0.72"/>
<circle cx="305.6" cy="349.2" r="2.3" fill="#e3e3d3" stroke="#1a4022" stroke-width="0.8" />
<text x="347.0" y="350.8" font-size="4.45" fill="#1c1c1c" text-anchor="start" font-weight="normal" font-family="Liberation Sans, sans-serif"  stroke="#1c1c1c" stroke-width="0.22">PB1</text>
<text x="314.8" y="346.9" font-size="4.45" fill="#1c1c1c" text-anchor="start" font-weight="normal" font-family="Liberation Sans, sans-serif"  stroke="#1c1c1c" stroke-width="0.22">PB1</text>
<text x="336.6" y="348.6" font-size="4.2" fill="#333" text-anchor="middle" font-weight="normal" font-family="Liberation Sans, sans-serif" >27</text>
<rect x="333.4" y="345.0" width="7.6" height="3.6" fill="#d0d0f0" opacity="0.8"/>
<rect x="338.4" y="346.0" width="2.0" height="2.0" fill="#3a3ae0"/>
<line x1="336.0" y1="354.6" x2="344.0" y2="354.6" stroke="#a03c34" stroke-width="0.72"/>
<polyline points="336.0,354.6 290.0,354.6 290.0,365.6" fill="none" stroke="#1a4022" stroke-width="0.72" />
<line x1="284.5" y1="365.6" x2="295.5" y2="365.6" stroke="#1a4022" stroke-width="0.72"/>
<line x1="287.2" y1="368.1" x2="292.8" y2="368.1" stroke="#1a4022" stroke-width="0.9"/>
<line x1="289.0" y1="370.6" x2="291.0" y2="370.6" stroke="#1a4022" stroke-width="0.9"/>
<text x="347.0" y="356.2" font-size="4.45" fill="#1c1c1c" text-anchor="start" font-weight="normal" font-family="Liberation Sans, sans-serif"  stroke="#1c1c1c" stroke-width="0.22">PB2</text>
<rect x="333.4" y="350.4" width="7.6" height="3.6" fill="#d0d0f0" opacity="0.8"/>
<rect x="338.4" y="351.4" width="2.0" height="2.0" fill="#3a3ae0"/>
<text x="337.5" y="354.0" font-size="3.4" fill="#555" text-anchor="middle" font-weight="normal" font-family="Liberation Sans, sans-serif" >28</text>
<line x1="336.0" y1="360.0" x2="344.0" y2="360.0" stroke="#a03c34" stroke-width="0.72"/>
<line x1="307.7" y1="360.0" x2="336.0" y2="360.0" stroke="#1a4022" stroke-width="0.72"/>
<circle cx="305.6" cy="360.0" r="2.3" fill="#e3e3d3" stroke="#1a4022" stroke-width="0.8" />
<text x="347.0" y="361.6" font-size="4.45" fill="#1c1c1c" text-anchor="start" font-weight="normal" font-family="Liberation Sans, sans-serif"  stroke="#1c1c1c" stroke-width="0.22">PB3</text>
<text x="314.8" y="357.7" font-size="4.45" fill="#1c1c1c" text-anchor="start" font-weight="normal" font-family="Liberation Sans, sans-serif"  stroke="#1c1c1c" stroke-width="0.22">PB3</text>
<text x="336.6" y="359.4" font-size="4.2" fill="#333" text-anchor="middle" font-weight="normal" font-family="Liberation Sans, sans-serif" >55</text>
<rect x="333.4" y="355.8" width="7.6" height="3.6" fill="#d0d0f0" opacity="0.8"/>
<rect x="338.4" y="356.8" width="2.0" height="2.0" fill="#3a3ae0"/>
<line x1="336.0" y1="365.4" x2="344.0" y2="365.4" stroke="#a03c34" stroke-width="0.72"/>
<line x1="307.7" y1="365.4" x2="336.0" y2="365.4" stroke="#1a4022" stroke-width="0.72"/>
<circle cx="305.6" cy="365.4" r="2.3" fill="#e3e3d3" stroke="#1a4022" stroke-width="0.8" />
<text x="347.0" y="367.0" font-size="4.45" fill="#1c1c1c" text-anchor="start" font-weight="normal" font-family="Liberation Sans, sans-serif"  stroke="#1c1c1c" stroke-width="0.22">PB4</text>
<text x="314.8" y="363.1" font-size="4.45" fill="#1c1c1c" text-anchor="start" font-weight="normal" font-family="Liberation Sans, sans-serif"  stroke="#1c1c1c" stroke-width="0.22">PB4</text>
<text x="336.6" y="364.8" font-size="4.2" fill="#333" text-anchor="middle" font-weight="normal" font-family="Liberation Sans, sans-serif" >56</text>
<rect x="333.4" y="361.2" width="7.6" height="3.6" fill="#ecc8c8" opacity="0.8"/>
<rect x="338.4" y="362.2" width="2.0" height="2.0" fill="#e03a3a"/>
<line x1="336.0" y1="370.8" x2="344.0" y2="370.8" stroke="#a03c34" stroke-width="0.72"/>
<line x1="307.7" y1="370.8" x2="336.0" y2="370.8" stroke="#1a4022" stroke-width="0.72"/>
<circle cx="305.6" cy="370.8" r="2.3" fill="#e3e3d3" stroke="#1a4022" stroke-width="0.8" />
<text x="347.0" y="372.4" font-size="4.45" fill="#1c1c1c" text-anchor="start" font-weight="normal" font-family="Liberation Sans, sans-serif"  stroke="#1c1c1c" stroke-width="0.22">PB5</text>
<text x="314.8" y="368.5" font-size="4.45" fill="#1c1c1c" text-anchor="start" font-weight="normal" font-family="Liberation Sans, sans-serif"  stroke="#1c1c1c" stroke-width="0.22">PB5</text>
<text x="336.6" y="370.2" font-size="4.2" fill="#333" text-anchor="middle" font-weight="normal" font-family="Liberation Sans, sans-serif" >57</text>
<rect x="333.4" y="366.6" width="7.6" height="3.6" fill="#d0d0f0" opacity="0.8"/>
<rect x="338.4" y="367.6" width="2.0" height="2.0" fill="#3a3ae0"/>
<line x1="336.0" y1="376.2" x2="344.0" y2="376.2" stroke="#a03c34" stroke-width="0.72"/>
<line x1="307.7" y1="376.2" x2="336.0" y2="376.2" stroke="#1a4022" stroke-width="0.72"/>
<circle cx="305.6" cy="376.2" r="2.3" fill="#e3e3d3" stroke="#1a4022" stroke-width="0.8" />
<text x="347.0" y="377.8" font-size="4.45" fill="#1c1c1c" text-anchor="start" font-weight="normal" font-family="Liberation Sans, sans-serif"  stroke="#1c1c1c" stroke-width="0.22">PB6</text>
<text x="314.8" y="373.9" font-size="4.45" fill="#1c1c1c" text-anchor="start" font-weight="normal" font-family="Liberation Sans, sans-serif"  stroke="#1c1c1c" stroke-width="0.22">PB6</text>
<text x="336.6" y="375.6" font-size="4.2" fill="#333" text-anchor="middle" font-weight="normal" font-family="Liberation Sans, sans-serif" >58</text>
<rect x="333.4" y="372.0" width="7.6" height="3.6" fill="#d0d0f0" opacity="0.8"/>
<rect x="338.4" y="373.0" width="2.0" height="2.0" fill="#3a3ae0"/>
<line x1="336.0" y1="381.6" x2="344.0" y2="381.6" stroke="#a03c34" stroke-width="0.72"/>
<line x1="307.7" y1="381.6" x2="336.0" y2="381.6" stroke="#1a4022" stroke-width="0.72"/>
<circle cx="305.6" cy="381.6" r="2.3" fill="#e3e3d3" stroke="#1a4022" stroke-width="0.8" />
<text x="347.0" y="383.2" font-size="4.45" fill="#1c1c1c" text-anchor="start" font-weight="normal" font-family="Liberation Sans, sans-serif"  stroke="#1c1c1c" stroke-width="0.22">PB7</text>
<text x="314.8" y="379.3" font-size="4.45" fill="#1c1c1c" text-anchor="start" font-weight="normal" font-family="Liberation Sans, sans-serif"  stroke="#1c1c1c" stroke-width="0.22">PB7</text>
<text x="336.6" y="381.0" font-size="4.2" fill="#333" text-anchor="middle" font-weight="normal" font-family="Liberation Sans, sans-serif" >59</text>
<rect x="333.4" y="377.4" width="7.6" height="3.6" fill="#d0d0f0" opacity="0.8"/>
<rect x="338.4" y="378.4" width="2.0" height="2.0" fill="#3a3ae0"/>
<line x1="336.0" y1="387.0" x2="344.0" y2="387.0" stroke="#a03c34" stroke-width="0.72"/>
<line x1="307.7" y1="387.0" x2="336.0" y2="387.0" stroke="#1a4022" stroke-width="0.72"/>
<circle cx="305.6" cy="387.0" r="2.3" fill="#e3e3d3" stroke="#1a4022" stroke-width="0.8" />
<text x="347.0" y="388.6" font-size="4.45" fill="#1c1c1c" text-anchor="start" font-weight="normal" font-family="Liberation Sans, sans-serif"  stroke="#1c1c1c" stroke-width="0.22">PB8</text>
<text x="314.8" y="384.7" font-size="4.45" fill="#1c1c1c" text-anchor="start" font-weight="normal" font-family="Liberation Sans, sans-serif"  stroke="#1c1c1c" stroke-width="0.22">PB8</text>
<text x="336.6" y="386.4" font-size="4.2" fill="#333" text-anchor="middle" font-weight="normal" font-family="Liberation Sans, sans-serif" >61</text>
<rect x="333.4" y="382.8" width="7.6" height="3.6" fill="#d0d0f0" opacity="0.8"/>
<rect x="338.4" y="383.8" width="2.0" height="2.0" fill="#3a3ae0"/>
<line x1="336.0" y1="392.4" x2="344.0" y2="392.4" stroke="#a03c34" stroke-width="0.72"/>
<line x1="307.7" y1="392.4" x2="336.0" y2="392.4" stroke="#1a4022" stroke-width="0.72"/>
<circle cx="305.6" cy="392.4" r="2.3" fill="#e3e3d3" stroke="#1a4022" stroke-width="0.8" />
<text x="347.0" y="394.0" font-size="4.45" fill="#1c1c1c" text-anchor="start" font-weight="normal" font-family="Liberation Sans, sans-serif"  stroke="#1c1c1c" stroke-width="0.22">PB9</text>
<text x="314.8" y="390.1" font-size="4.45" fill="#1c1c1c" text-anchor="start" font-weight="normal" font-family="Liberation Sans, sans-serif"  stroke="#1c1c1c" stroke-width="0.22">PB9</text>
<text x="336.6" y="391.8" font-size="4.2" fill="#333" text-anchor="middle" font-weight="normal" font-family="Liberation Sans, sans-serif" >62</text>
<line x1="336.0" y1="397.8" x2="344.0" y2="397.8" stroke="#a03c34" stroke-width="0.72"/>
<line x1="307.7" y1="397.8" x2="336.0" y2="397.8" stroke="#1a4022" stroke-width="0.72"/>
<circle cx="305.6" cy="397.8" r="2.3" fill="#e3e3d3" stroke="#1a4022" stroke-width="0.8" />
<text x="347.0" y="399.4" font-size="4.45" fill="#1c1c1c" text-anchor="start" font-weight="normal" font-family="Liberation Sans, sans-serif"  stroke="#1c1c1c" stroke-width="0.22">PB10</text>
<text x="314.8" y="395.5" font-size="4.45" fill="#1c1c1c" text-anchor="start" font-weight="normal" font-family="Liberation Sans, sans-serif"  stroke="#1c1c1c" stroke-width="0.22">PB10</text>
<text x="336.6" y="397.2" font-size="4.2" fill="#333" text-anchor="middle" font-weight="normal" font-family="Liberation Sans, sans-serif" >29</text>
<rect x="333.4" y="393.6" width="7.6" height="3.6" fill="#d0d0f0" opacity="0.8"/>
<rect x="338.4" y="394.6" width="2.0" height="2.0" fill="#3a3ae0"/>
<line x1="336.0" y1="403.2" x2="344.0" y2="403.2" stroke="#a03c34" stroke-width="0.72"/>
<line x1="307.7" y1="403.2" x2="336.0" y2="403.2" stroke="#1a4022" stroke-width="0.72"/>
<circle cx="305.6" cy="403.2" r="2.3" fill="#e3e3d3" stroke="#1a4022" stroke-width="0.8" />
<text x="347.0" y="404.8" font-size="4.45" fill="#1c1c1c" text-anchor="start" font-weight="normal" font-family="Liberation Sans, sans-serif"  stroke="#1c1c1c" stroke-width="0.22">PB11</text>
<text x="314.8" y="400.9" font-size="4.45" fill="#1c1c1c" text-anchor="start" font-weight="normal" font-family="Liberation Sans, sans-serif"  stroke="#1c1c1c" stroke-width="0.22">PB11</text>
<text x="336.6" y="402.6" font-size="4.2" fill="#333" text-anchor="middle" font-weight="normal" font-family="Liberation Sans, sans-serif" >30</text>
<rect x="333.4" y="399.0" width="7.6" height="3.6" fill="#d0d0f0" opacity="0.8"/>
<rect x="338.4" y="400.0" width="2.0" height="2.0" fill="#3a3ae0"/>
<line x1="336.0" y1="408.6" x2="344.0" y2="408.6" stroke="#a03c34" stroke-width="0.72"/>
<line x1="307.7" y1="408.6" x2="336.0" y2="408.6" stroke="#1a4022" stroke-width="0.72"/>
<circle cx="305.6" cy="408.6" r="2.3" fill="#e3e3d3" stroke="#1a4022" stroke-width="0.8" />
<text x="347.0" y="410.2" font-size="4.45" fill="#1c1c1c" text-anchor="start" font-weight="normal" font-family="Liberation Sans, sans-serif"  stroke="#1c1c1c" stroke-width="0.22">PB12</text>
<text x="314.8" y="406.3" font-size="4.45" fill="#1c1c1c" text-anchor="start" font-weight="normal" font-family="Liberation Sans, sans-serif"  stroke="#1c1c1c" stroke-width="0.22">PB12</text>
<text x="336.6" y="408.0" font-size="4.2" fill="#333" text-anchor="middle" font-weight="normal" font-family="Liberation Sans, sans-serif" >33</text>
<rect x="333.4" y="404.4" width="7.6" height="3.6" fill="#ecc8c8" opacity="0.8"/>
<rect x="338.4" y="405.4" width="2.0" height="2.0" fill="#e03a3a"/>
<line x1="336.0" y1="414.0" x2="344.0" y2="414.0" stroke="#a03c34" stroke-width="0.72"/>
<line x1="307.7" y1="414.0" x2="336.0" y2="414.0" stroke="#1a4022" stroke-width="0.72"/>
<circle cx="305.6" cy="414.0" r="2.3" fill="#e3e3d3" stroke="#1a4022" stroke-width="0.8" />
<text x="347.0" y="415.6" font-size="4.45" fill="#1c1c1c" text-anchor="start" font-weight="normal" font-family="Liberation Sans, sans-serif"  stroke="#1c1c1c" stroke-width="0.22">PB13</text>
<text x="314.8" y="411.7" font-size="4.45" fill="#1c1c1c" text-anchor="start" font-weight="normal" font-family="Liberation Sans, sans-serif"  stroke="#1c1c1c" stroke-width="0.22">PB13</text>
<text x="336.6" y="413.4" font-size="4.2" fill="#333" text-anchor="middle" font-weight="normal" font-family="Liberation Sans, sans-serif" >34</text>
<line x1="336.0" y1="419.4" x2="344.0" y2="419.4" stroke="#a03c34" stroke-width="0.72"/>
<line x1="307.7" y1="419.4" x2="336.0" y2="419.4" stroke="#1a4022" stroke-width="0.72"/>
<circle cx="305.6" cy="419.4" r="2.3" fill="#e3e3d3" stroke="#1a4022" stroke-width="0.8" />
<text x="347.0" y="421.0" font-size="4.45" fill="#1c1c1c" text-anchor="start" font-weight="normal" font-family="Liberation Sans, sans-serif"  stroke="#1c1c1c" stroke-width="0.22">PB14</text>
<text x="314.8" y="417.1" font-size="4.45" fill="#1c1c1c" text-anchor="start" font-weight="normal" font-family="Liberation Sans, sans-serif"  stroke="#1c1c1c" stroke-width="0.22">PB14</text>
<text x="336.6" y="418.8" font-size="4.2" fill="#333" text-anchor="middle" font-weight="normal" font-family="Liberation Sans, sans-serif" >35</text>
<line x1="336.0" y1="424.8" x2="344.0" y2="424.8" stroke="#a03c34" stroke-width="0.72"/>
<line x1="307.7" y1="424.8" x2="336.0" y2="424.8" stroke="#1a4022" stroke-width="0.72"/>
<circle cx="305.6" cy="424.8" r="2.3" fill="#e3e3d3" stroke="#1a4022" stroke-width="0.8" />
<text x="347.0" y="426.4" font-size="4.45" fill="#1c1c1c" text-anchor="start" font-weight="normal" font-family="Liberation Sans, sans-serif"  stroke="#1c1c1c" stroke-width="0.22">PB15</text>
<text x="314.8" y="422.5" font-size="4.45" fill="#1c1c1c" text-anchor="start" font-weight="normal" font-family="Liberation Sans, sans-serif"  stroke="#1c1c1c" stroke-width="0.22">PB15</text>
<text x="336.6" y="424.2" font-size="4.2" fill="#333" text-anchor="middle" font-weight="normal" font-family="Liberation Sans, sans-serif" >36</text>
<text x="412.0" y="253.6" font-size="4.45" fill="#1c1c1c" text-anchor="end" font-weight="normal" font-family="Liberation Sans, sans-serif"  stroke="#1c1c1c" stroke-width="0.22">NRST</text>
<line x1="414.4" y1="252.0" x2="423.0" y2="252.0" stroke="#a03c34" stroke-width="0.72"/>
<text x="419.5" y="250.6" font-size="3.6" fill="#555" text-anchor="start" font-weight="normal" font-family="Liberation Sans, sans-serif" >7</text>
<rect x="416.0" y="248.8" width="2.0" height="2.0" fill="#e03a3a"/>
<line x1="414.4" y1="262.8" x2="423.0" y2="262.8" stroke="#a03c34" stroke-width="0.72"/>
<line x1="423.0" y1="262.8" x2="453.3" y2="262.8" stroke="#1a4022" stroke-width="0.72"/>
<circle cx="455.4" cy="262.8" r="2.3" fill="#e3e3d3" stroke="#1a4022" stroke-width="0.8" />
<text x="412.0" y="264.4" font-size="4.45" fill="#1c1c1c" text-anchor="end" font-weight="normal" font-family="Liberation Sans, sans-serif"  stroke="#1c1c1c" stroke-width="0.22">PC0</text>
<text x="439.0" y="260.5" font-size="4.45" fill="#1c1c1c" text-anchor="start" font-weight="normal" font-family="Liberation Sans, sans-serif"  stroke="#1c1c1c" stroke-width="0.22">PC0</text>
<text x="422.0" y="262.2" font-size="4.2" fill="#222" text-anchor="middle" font-weight="normal" font-family="Liberation Sans, sans-serif" >8</text>
<rect x="416.8" y="259.6" width="2.0" height="2.0" fill="#3a3ae0"/>
<line x1="414.4" y1="268.2" x2="423.0" y2="268.2" stroke="#a03c34" stroke-width="0.72"/>
<line x1="423.0" y1="268.2" x2="453.3" y2="268.2" stroke="#1a4022" stroke-width="0.72"/>
<circle cx="455.4" cy="268.2" r="2.3" fill="#e3e3d3" stroke="#1a4022" stroke-width="0.8" />
<text x="412.0" y="269.8" font-size="4.45" fill="#1c1c1c" text-anchor="end" font-weight="normal" font-family="Liberation Sans, sans-serif"  stroke="#1c1c1c" stroke-width="0.22">PC1</text>
<text x="439.0" y="265.9" font-size="4.45" fill="#1c1c1c" text-anchor="start" font-weight="normal" font-family="Liberation Sans, sans-serif"  stroke="#1c1c1c" stroke-width="0.22">PC1</text>
<text x="422.0" y="267.6" font-size="4.2" fill="#222" text-anchor="middle" font-weight="normal" font-family="Liberation Sans, sans-serif" >9</text>
<rect x="416.8" y="265.0" width="2.0" height="2.0" fill="#3a3ae0"/>
<line x1="414.4" y1="273.6" x2="423.0" y2="273.6" stroke="#a03c34" stroke-width="0.72"/>
<line x1="423.0" y1="273.6" x2="453.3" y2="273.6" stroke="#1a4022" stroke-width="0.72"/>
<circle cx="455.4" cy="273.6" r="2.3" fill="#e3e3d3" stroke="#1a4022" stroke-width="0.8" />
<text x="412.0" y="275.2" font-size="4.45" fill="#1c1c1c" text-anchor="end" font-weight="normal" font-family="Liberation Sans, sans-serif"  stroke="#1c1c1c" stroke-width="0.22">PC2</text>
<text x="439.0" y="271.3" font-size="4.45" fill="#1c1c1c" text-anchor="start" font-weight="normal" font-family="Liberation Sans, sans-serif"  stroke="#1c1c1c" stroke-width="0.22">PC2</text>
<text x="422.0" y="273.0" font-size="4.2" fill="#222" text-anchor="middle" font-weight="normal" font-family="Liberation Sans, sans-serif" >10</text>
<rect x="416.8" y="270.4" width="2.0" height="2.0" fill="#e03a3a"/>
<line x1="414.4" y1="279.0" x2="423.0" y2="279.0" stroke="#a03c34" stroke-width="0.72"/>
<line x1="423.0" y1="279.0" x2="453.3" y2="279.0" stroke="#1a4022" stroke-width="0.72"/>
<circle cx="455.4" cy="279.0" r="2.3" fill="#e3e3d3" stroke="#1a4022" stroke-width="0.8" />
<text x="412.0" y="280.6" font-size="4.45" fill="#1c1c1c" text-anchor="end" font-weight="normal" font-family="Liberation Sans, sans-serif"  stroke="#1c1c1c" stroke-width="0.22">PC3</text>
<text x="439.0" y="276.7" font-size="4.45" fill="#1c1c1c" text-anchor="start" font-weight="normal" font-family="Liberation Sans, sans-serif"  stroke="#1c1c1c" stroke-width="0.22">PC3</text>
<text x="422.0" y="278.4" font-size="4.2" fill="#222" text-anchor="middle" font-weight="normal" font-family="Liberation Sans, sans-serif" >11</text>
<rect x="416.8" y="275.8" width="2.0" height="2.0" fill="#3a3ae0"/>
<line x1="414.4" y1="284.4" x2="423.0" y2="284.4" stroke="#a03c34" stroke-width="0.72"/>
<line x1="423.0" y1="284.4" x2="453.3" y2="284.4" stroke="#1a4022" stroke-width="0.72"/>
<circle cx="455.4" cy="284.4" r="2.3" fill="#e3e3d3" stroke="#1a4022" stroke-width="0.8" />
<text x="412.0" y="286.0" font-size="4.45" fill="#1c1c1c" text-anchor="end" font-weight="normal" font-family="Liberation Sans, sans-serif"  stroke="#1c1c1c" stroke-width="0.22">PC4</text>
<text x="439.0" y="282.1" font-size="4.45" fill="#1c1c1c" text-anchor="start" font-weight="normal" font-family="Liberation Sans, sans-serif"  stroke="#1c1c1c" stroke-width="0.22">PC4</text>
<text x="422.0" y="283.8" font-size="4.2" fill="#222" text-anchor="middle" font-weight="normal" font-family="Liberation Sans, sans-serif" >24</text>
<rect x="416.8" y="281.2" width="2.0" height="2.0" fill="#3a3ae0"/>
<line x1="414.4" y1="289.8" x2="423.0" y2="289.8" stroke="#a03c34" stroke-width="0.72"/>
<line x1="423.0" y1="289.8" x2="453.3" y2="289.8" stroke="#1a4022" stroke-width="0.72"/>
<circle cx="455.4" cy="289.8" r="2.3" fill="#e3e3d3" stroke="#1a4022" stroke-width="0.8" />
<text x="412.0" y="291.4" font-size="4.45" fill="#1c1c1c" text-anchor="end" font-weight="normal" font-family="Liberation Sans, sans-serif"  stroke="#1c1c1c" stroke-width="0.22">PC5</text>
<text x="439.0" y="287.5" font-size="4.45" fill="#1c1c1c" text-anchor="start" font-weight="normal" font-family="Liberation Sans, sans-serif"  stroke="#1c1c1c" stroke-width="0.22">PC5</text>
<text x="422.0" y="289.2" font-size="4.2" fill="#222" text-anchor="middle" font-weight="normal" font-family="Liberation Sans, sans-serif" >25</text>
<rect x="416.8" y="286.6" width="2.0" height="2.0" fill="#3a3ae0"/>
<line x1="414.4" y1="295.2" x2="423.0" y2="295.2" stroke="#a03c34" stroke-width="0.72"/>
<line x1="423.0" y1="295.2" x2="453.3" y2="295.2" stroke="#1a4022" stroke-width="0.72"/>
<circle cx="455.4" cy="295.2" r="2.3" fill="#e3e3d3" stroke="#1a4022" stroke-width="0.8" />
<text x="412.0" y="296.8" font-size="4.45" fill="#1c1c1c" text-anchor="end" font-weight="normal" font-family="Liberation Sans, sans-serif"  stroke="#1c1c1c" stroke-width="0.22">PC6</text>
<text x="439.0" y="292.9" font-size="4.45" fill="#1c1c1c" text-anchor="start" font-weight="normal" font-family="Liberation Sans, sans-serif"  stroke="#1c1c1c" stroke-width="0.22">PC6</text>
<text x="422.0" y="294.6" font-size="4.2" fill="#222" text-anchor="middle" font-weight="normal" font-family="Liberation Sans, sans-serif" >37</text>
<rect x="416.8" y="292.0" width="2.0" height="2.0" fill="#3a3ae0"/>
<line x1="414.4" y1="300.6" x2="423.0" y2="300.6" stroke="#a03c34" stroke-width="0.72"/>
<line x1="423.0" y1="300.6" x2="453.3" y2="300.6" stroke="#1a4022" stroke-width="0.72"/>
<circle cx="455.4" cy="300.6" r="2.3" fill="#e3e3d3" stroke="#1a4022" stroke-width="0.8" />
<text x="412.0" y="302.2" font-size="4.45" fill="#1c1c1c" text-anchor="end" font-weight="normal" font-family="Liberation Sans, sans-serif"  stroke="#1c1c1c" stroke-width="0.22">PC7</text>
<text x="439.0" y="298.3" font-size="4.45" fill="#1c1c1c" text-anchor="start" font-weight="normal" font-family="Liberation Sans, sans-serif"  stroke="#1c1c1c" stroke-width="0.22">PC7</text>
<text x="422.0" y="300.0" font-size="4.2" fill="#222" text-anchor="middle" font-weight="normal" font-family="Liberation Sans, sans-serif" >38</text>
<rect x="416.8" y="297.4" width="2.0" height="2.0" fill="#3a3ae0"/>
<line x1="414.4" y1="306.0" x2="423.0" y2="306.0" stroke="#a03c34" stroke-width="0.72"/>
<line x1="423.0" y1="306.0" x2="453.3" y2="306.0" stroke="#1a4022" stroke-width="0.72"/>
<circle cx="455.4" cy="306.0" r="2.3" fill="#e3e3d3" stroke="#1a4022" stroke-width="0.8" />
<text x="412.0" y="307.6" font-size="4.45" fill="#1c1c1c" text-anchor="end" font-weight="normal" font-family="Liberation Sans, sans-serif"  stroke="#1c1c1c" stroke-width="0.22">PC8</text>
<text x="439.0" y="303.7" font-size="4.45" fill="#1c1c1c" text-anchor="start" font-weight="normal" font-family="Liberation Sans, sans-serif"  stroke="#1c1c1c" stroke-width="0.22">PC8</text>
<text x="422.0" y="305.4" font-size="4.2" fill="#222" text-anchor="middle" font-weight="normal" font-family="Liberation Sans, sans-serif" >39</text>
<rect x="416.8" y="302.8" width="2.0" height="2.0" fill="#e03a3a"/>
<line x1="414.4" y1="311.4" x2="423.0" y2="311.4" stroke="#a03c34" stroke-width="0.72"/>
<line x1="423.0" y1="311.4" x2="453.3" y2="311.4" stroke="#1a4022" stroke-width="0.72"/>
<circle cx="455.4" cy="311.4" r="2.3" fill="#e3e3d3" stroke="#1a4022" stroke-width="0.8" />
<text x="412.0" y="313.0" font-size="4.45" fill="#1c1c1c" text-anchor="end" font-weight="normal" font-family="Liberation Sans, sans-serif"  stroke="#1c1c1c" stroke-width="0.22">PC9</text>
<text x="439.0" y="309.1" font-size="4.45" fill="#1c1c1c" text-anchor="start" font-weight="normal" font-family="Liberation Sans, sans-serif"  stroke="#1c1c1c" stroke-width="0.22">PC9</text>
<text x="422.0" y="310.8" font-size="4.2" fill="#222" text-anchor="middle" font-weight="normal" font-family="Liberation Sans, sans-serif" >40</text>
<rect x="416.8" y="308.2" width="2.0" height="2.0" fill="#3a3ae0"/>
<line x1="414.4" y1="316.8" x2="423.0" y2="316.8" stroke="#a03c34" stroke-width="0.72"/>
<line x1="423.0" y1="316.8" x2="453.3" y2="316.8" stroke="#1a4022" stroke-width="0.72"/>
<circle cx="455.4" cy="316.8" r="2.3" fill="#e3e3d3" stroke="#1a4022" stroke-width="0.8" />
<text x="412.0" y="318.4" font-size="4.45" fill="#1c1c1c" text-anchor="end" font-weight="normal" font-family="Liberation Sans, sans-serif"  stroke="#1c1c1c" stroke-width="0.22">PC10</text>
<text x="439.0" y="314.5" font-size="4.45" fill="#1c1c1c" text-anchor="start" font-weight="normal" font-family="Liberation Sans, sans-serif"  stroke="#1c1c1c" stroke-width="0.22">PC10</text>
<text x="422.0" y="316.2" font-size="4.2" fill="#222" text-anchor="middle" font-weight="normal" font-family="Liberation Sans, sans-serif" >51</text>
<rect x="416.8" y="313.6" width="2.0" height="2.0" fill="#3a3ae0"/>
<line x1="414.4" y1="322.2" x2="423.0" y2="322.2" stroke="#a03c34" stroke-width="0.72"/>
<line x1="423.0" y1="322.2" x2="453.3" y2="322.2" stroke="#1a4022" stroke-width="0.72"/>
<circle cx="455.4" cy="322.2" r="2.3" fill="#e3e3d3" stroke="#1a4022" stroke-width="0.8" />
<text x="412.0" y="323.8" font-size="4.45" fill="#1c1c1c" text-anchor="end" font-weight="normal" font-family="Liberation Sans, sans-serif"  stroke="#1c1c1c" stroke-width="0.22">PC11</text>
<text x="439.0" y="319.9" font-size="4.45" fill="#1c1c1c" text-anchor="start" font-weight="normal" font-family="Liberation Sans, sans-serif"  stroke="#1c1c1c" stroke-width="0.22">PC11</text>
<text x="422.0" y="321.6" font-size="4.2" fill="#222" text-anchor="middle" font-weight="normal" font-family="Liberation Sans, sans-serif" >52</text>
<line x1="414.4" y1="327.6" x2="423.0" y2="327.6" stroke="#a03c34" stroke-width="0.72"/>
<line x1="423.0" y1="327.6" x2="453.3" y2="327.6" stroke="#1a4022" stroke-width="0.72"/>
<circle cx="455.4" cy="327.6" r="2.3" fill="#e3e3d3" stroke="#1a4022" stroke-width="0.8" />
<text x="412.0" y="329.2" font-size="4.45" fill="#1c1c1c" text-anchor="end" font-weight="normal" font-family="Liberation Sans, sans-serif"  stroke="#1c1c1c" stroke-width="0.22">PC12</text>
<text x="439.0" y="325.3" font-size="4.45" fill="#1c1c1c" text-anchor="start" font-weight="normal" font-family="Liberation Sans, sans-serif"  stroke="#1c1c1c" stroke-width="0.22">PC12</text>
<text x="422.0" y="327.0" font-size="4.2" fill="#222" text-anchor="middle" font-weight="normal" font-family="Liberation Sans, sans-serif" >53</text>
<line x1="414.4" y1="333.0" x2="423.0" y2="333.0" stroke="#a03c34" stroke-width="0.72"/>
<line x1="423.0" y1="333.0" x2="453.3" y2="333.0" stroke="#1a4022" stroke-width="0.72"/>
<circle cx="455.4" cy="333.0" r="2.3" fill="#e3e3d3" stroke="#1a4022" stroke-width="0.8" />
<text x="412.0" y="334.6" font-size="4.45" fill="#1c1c1c" text-anchor="end" font-weight="normal" font-family="Liberation Sans, sans-serif"  stroke="#1c1c1c" stroke-width="0.22">PC13_RTC</text>
<text x="439.0" y="330.7" font-size="4.45" fill="#1c1c1c" text-anchor="start" font-weight="normal" font-family="Liberation Sans, sans-serif"  stroke="#1c1c1c" stroke-width="0.22">PC13</text>
<text x="422.0" y="332.4" font-size="4.2" fill="#222" text-anchor="middle" font-weight="normal" font-family="Liberation Sans, sans-serif" >2</text>
<line x1="414.4" y1="338.4" x2="423.0" y2="338.4" stroke="#a03c34" stroke-width="0.72"/>
<line x1="423.0" y1="338.4" x2="453.3" y2="338.4" stroke="#1a4022" stroke-width="0.72"/>
<circle cx="455.4" cy="338.4" r="2.3" fill="#e3e3d3" stroke="#1a4022" stroke-width="0.8" />
<text x="412.0" y="340.0" font-size="4.45" fill="#1c1c1c" text-anchor="end" font-weight="normal" font-family="Liberation Sans, sans-serif"  stroke="#1c1c1c" stroke-width="0.22">PC14-OSC32_IN</text>
<text x="439.0" y="336.1" font-size="4.45" fill="#1c1c1c" text-anchor="start" font-weight="normal" font-family="Liberation Sans, sans-serif"  stroke="#1c1c1c" stroke-width="0.22">PC14</text>
<text x="422.0" y="337.8" font-size="4.2" fill="#222" text-anchor="middle" font-weight="normal" font-family="Liberation Sans, sans-serif" >3</text>
<line x1="414.4" y1="343.8" x2="423.0" y2="343.8" stroke="#a03c34" stroke-width="0.72"/>
<line x1="423.0" y1="343.8" x2="453.3" y2="343.8" stroke="#1a4022" stroke-width="0.72"/>
<circle cx="455.4" cy="343.8" r="2.3" fill="#e3e3d3" stroke="#1a4022" stroke-width="0.8" />
<text x="412.0" y="345.4" font-size="4.45" fill="#1c1c1c" text-anchor="end" font-weight="normal" font-family="Liberation Sans, sans-serif"  stroke="#1c1c1c" stroke-width="0.22">PC15-OSC32_OUT</text>
<text x="439.0" y="341.5" font-size="4.45" fill="#1c1c1c" text-anchor="start" font-weight="normal" font-family="Liberation Sans, sans-serif"  stroke="#1c1c1c" stroke-width="0.22">PC15</text>
<text x="422.0" y="343.2" font-size="4.2" fill="#222" text-anchor="middle" font-weight="normal" font-family="Liberation Sans, sans-serif" >4</text>
<line x1="414.4" y1="360.0" x2="423.0" y2="360.0" stroke="#a03c34" stroke-width="0.72"/>
<line x1="423.0" y1="360.0" x2="453.3" y2="360.0" stroke="#1a4022" stroke-width="0.72"/>
<circle cx="455.4" cy="360.0" r="2.3" fill="#e3e3d3" stroke="#1a4022" stroke-width="0.8" />
<text x="412.0" y="361.6" font-size="4.45" fill="#1c1c1c" text-anchor="end" font-weight="normal" font-family="Liberation Sans, sans-serif"  stroke="#1c1c1c" stroke-width="0.22">OSCIN_PD0</text>
<text x="439.0" y="357.7" font-size="4.45" fill="#1c1c1c" text-anchor="start" font-weight="normal" font-family="Liberation Sans, sans-serif"  stroke="#1c1c1c" stroke-width="0.22">PD0</text>
<text x="422.0" y="359.4" font-size="4.2" fill="#222" text-anchor="middle" font-weight="normal" font-family="Liberation Sans, sans-serif" >5</text>
<rect x="416.8" y="356.8" width="2.0" height="2.0" fill="#3a3ae0"/>
<line x1="414.4" y1="365.4" x2="423.0" y2="365.4" stroke="#a03c34" stroke-width="0.72"/>
<line x1="423.0" y1="365.4" x2="453.3" y2="365.4" stroke="#1a4022" stroke-width="0.72"/>
<circle cx="455.4" cy="365.4" r="2.3" fill="#e3e3d3" stroke="#1a4022" stroke-width="0.8" />
<text x="412.0" y="367.0" font-size="4.45" fill="#1c1c1c" text-anchor="end" font-weight="normal" font-family="Liberation Sans, sans-serif"  stroke="#1c1c1c" stroke-width="0.22">OSCOUT_PD1</text>
<text x="439.0" y="363.1" font-size="4.45" fill="#1c1c1c" text-anchor="start" font-weight="normal" font-family="Liberation Sans, sans-serif"  stroke="#1c1c1c" stroke-width="0.22">PD1</text>
<text x="422.0" y="364.8" font-size="4.2" fill="#222" text-anchor="middle" font-weight="normal" font-family="Liberation Sans, sans-serif" >6</text>
<rect x="416.8" y="362.2" width="2.0" height="2.0" fill="#3a3ae0"/>
<line x1="414.4" y1="370.8" x2="423.0" y2="370.8" stroke="#a03c34" stroke-width="0.72"/>
<line x1="423.0" y1="370.8" x2="453.3" y2="370.8" stroke="#1a4022" stroke-width="0.72"/>
<circle cx="455.4" cy="370.8" r="2.3" fill="#e3e3d3" stroke="#1a4022" stroke-width="0.8" />
<text x="412.0" y="372.4" font-size="4.45" fill="#1c1c1c" text-anchor="end" font-weight="normal" font-family="Liberation Sans, sans-serif"  stroke="#1c1c1c" stroke-width="0.22">PD2</text>
<text x="439.0" y="368.5" font-size="4.45" fill="#1c1c1c" text-anchor="start" font-weight="normal" font-family="Liberation Sans, sans-serif"  stroke="#1c1c1c" stroke-width="0.22">PD2</text>
<text x="422.0" y="370.2" font-size="4.2" fill="#222" text-anchor="middle" font-weight="normal" font-family="Liberation Sans, sans-serif" >54</text>
<text x="412.0" y="404.8" font-size="4.45" fill="#1c1c1c" text-anchor="end" font-weight="normal" font-family="Liberation Sans, sans-serif"  stroke="#1c1c1c" stroke-width="0.22">VBAT</text>
<text x="412.0" y="426.4" font-size="4.45" fill="#1c1c1c" text-anchor="end" font-weight="normal" font-family="Liberation Sans, sans-serif"  stroke="#1c1c1c" stroke-width="0.22">BOOT0</text>
<line x1="414.4" y1="403.2" x2="423.0" y2="403.2" stroke="#a03c34" stroke-width="0.72"/>
<text x="420.0" y="402.0" font-size="3.4" fill="#555" text-anchor="start" font-weight="normal" font-family="Liberation Sans, sans-serif" >1</text>
<line x1="414.4" y1="424.4" x2="423.0" y2="424.4" stroke="#a03c34" stroke-width="0.72"/>
<text x="421.5" y="423.4" font-size="3.4" fill="#555" text-anchor="middle" font-weight="normal" font-family="Liberation Sans, sans-serif" >60</text>
<rect x="416.6" y="421.0" width="2.0" height="2.0" fill="#3a3ae0"/>
<polyline points="423.0,403.2 427.6,403.2 427.6,392.4 444.0,392.4 444.0,400.4" fill="none" stroke="#1a4022" stroke-width="0.72" />
<line x1="435.0" y1="400.4" x2="452.4" y2="400.4" stroke="#7a2a2a" stroke-width="1.1"/>
<line x1="440.0" y1="403.0" x2="447.6" y2="403.0" stroke="#7a2a2a" stroke-width="1.1"/>
<line x1="444" y1="404" x2="444" y2="423" stroke="#b44" stroke-width="1" stroke-dasharray="2.4 1.6"/>
<line x1="435.0" y1="424.4" x2="452.4" y2="424.4" stroke="#7a2a2a" stroke-width="1.1"/>
<line x1="440.0" y1="427.2" x2="447.6" y2="427.2" stroke="#7a2a2a" stroke-width="1.1"/>
<polyline points="444.0,427.2 444.0,435.2 419.8,435.2" fill="none" stroke="#1a4022" stroke-width="0.72" />
<polyline points="423.0,424.4 430.4,424.4 430.4,435.2" fill="none" stroke="#1a4022" stroke-width="0.72" />
<circle cx="430.4" cy="435.2" r="1.6" fill="#143a1c" stroke="none" stroke-width="1" />
<line x1="419.8" y1="429.0" x2="419.8" y2="441.3" stroke="#1a4022" stroke-width="1"/>
<line x1="417.2" y1="432.0" x2="417.2" y2="438.4" stroke="#1a4022" stroke-width="0.9"/>
<line x1="414.8" y1="434.2" x2="414.8" y2="436.2" stroke="#1a4022" stroke-width="0.9"/>
<rect x="444.6" y="393.4" width="2.0" height="2.0" fill="#e03a3a"/>
<rect x="444.6" y="431.4" width="2.0" height="2.0" fill="#3a3ae0"/>
<text x="455.6" y="405.6" font-size="6.6" fill="#1c1c1c" text-anchor="start" font-weight="normal" font-family="Liberation Sans, sans-serif" >B1</text>
<text x="456.0" y="411.4" font-size="4.3500000000000005" fill="#1c1c1c" text-anchor="start" font-weight="normal" font-family="Liberation Sans, sans-serif"  stroke="#1c1c1c" stroke-width="0.22">9V</text>
<line x1="423.0" y1="252.0" x2="462.8" y2="252.0" stroke="#1a4022" stroke-width="0.72"/>
<circle cx="462.8" cy="252.0" r="1.6" fill="#143a1c" stroke="none" stroke-width="1" />
<polygon points="462.8,212.0 460.2,217.2 465.4,217.2" fill="#e3e3d3" stroke="#10351a" stroke-width="1.35"/>
<line x1="462.8" y1="217.2" x2="462.8" y2="230.0" stroke="#1a4022" stroke-width="0.72"/>
<rect x="460.5" y="230.0" width="4.6" height="16.4" fill="#e4cdb6" stroke="#8c3630" stroke-width="0.9" />
<line x1="462.8" y1="246.4" x2="462.8" y2="252.0" stroke="#1a4022" stroke-width="0.72"/>
<rect x="459.0" y="223.6" width="2.0" height="2.0" fill="#e03a3a"/>
<rect x="458.8" y="249.4" width="2.0" height="2.0" fill="#e03a3a"/>
<text x="468.6" y="235.6" font-size="6.6" fill="#1c1c1c" text-anchor="start" font-weight="normal" font-family="Liberation Sans, sans-serif" >R1</text>
<text x="469.0" y="241.0" font-size="4.3500000000000005" fill="#1c1c1c" text-anchor="start" font-weight="normal" font-family="Liberation Sans, sans-serif"  stroke="#1c1c1c" stroke-width="0.22">10k</text>
<polyline points="462.8,252.0 479.0,252.0 479.0,269.4" fill="none" stroke="#1a4022" stroke-width="0.72" />
<line x1="473.0" y1="269.4" x2="484.8" y2="269.4" stroke="#7a2a2a" stroke-width="1.2"/>
<line x1="473.0" y1="272.0" x2="484.8" y2="272.0" stroke="#7a2a2a" stroke-width="1.2"/>
<line x1="479.0" y1="272.0" x2="479.0" y2="292.0" stroke="#1a4022" stroke-width="0.72"/>
<line x1="473.5" y1="292.0" x2="484.5" y2="292.0" stroke="#1a4022" stroke-width="0.72"/>
<line x1="476.2" y1="294.5" x2="481.8" y2="294.5" stroke="#1a4022" stroke-width="0.9"/>
<line x1="478.0" y1="297.0" x2="480.0" y2="297.0" stroke="#1a4022" stroke-width="0.9"/>
<rect x="475.0" y="258.4" width="2.0" height="2.0" fill="#e03a3a"/>
<rect x="474" y="279" width="4.4" height="4" fill="#d6d6ee"/>
<rect x="475.0" y="280.0" width="2.0" height="2.0" fill="#3a3ae0"/>
<text x="488.0" y="270.6" font-size="6.6" fill="#1c1c1c" text-anchor="start" font-weight="normal" font-family="Liberation Sans, sans-serif" >C1</text>
<text x="488.0" y="276.6" font-size="4.3500000000000005" fill="#1c1c1c" text-anchor="start" font-weight="normal" font-family="Liberation Sans, sans-serif"  stroke="#1c1c1c" stroke-width="0.22">0.1uF</text>
<polygon points="487.4,294.6 490.6,297.6 487.4,300.6 484.2,297.6" fill="#4a4acc" opacity="0.8"/>
<line x1="482" y1="297.6" x2="493" y2="297.6" stroke="#8a8ad8" stroke-width="0.8"/>
<rect x="528.6" y="88.0" width="64.8" height="53.6" fill="#c9c9ad" stroke="#8c3630" stroke-width="0.9" />
<text x="594.6" y="80.4" font-size="6.6" fill="#1c1c1c" text-anchor="start" font-weight="normal" font-family="Liberation Sans, sans-serif" >U14</text>
<text x="532.0" y="94.6" font-size="4.45" fill="#1c1c1c" text-anchor="start" font-weight="normal" font-family="Liberation Sans, sans-serif"  stroke="#1c1c1c" stroke-width="0.22">IN1</text>
<line x1="517.8" y1="93.0" x2="528.6" y2="93.0" stroke="#a03c34" stroke-width="0.72"/>
<line x1="491.4" y1="93.0" x2="517.8" y2="93.0" stroke="#1a4022" stroke-width="0.72"/>
<circle cx="489.2" cy="93.0" r="2.3" fill="#e3e3d3" stroke="#1a4022" stroke-width="0.8" />
<text x="501.0" y="90.8" font-size="4.45" fill="#1c1c1c" text-anchor="start" font-weight="normal" font-family="Liberation Sans, sans-serif"  stroke="#1c1c1c" stroke-width="0.22">PB3</text>
<rect x="521.0" y="88.6" width="7" height="3.8" fill="#d0d0f0" opacity="0.8"/>
<rect x="524.0" y="89.6" width="2.0" height="2.0" fill="#3a3ae0"/>
<text x="520.2" y="92.4" font-size="3.4" fill="#555" text-anchor="middle" font-weight="normal" font-family="Liberation Sans, sans-serif" >5</text>
<text x="532.0" y="100.0" font-size="4.45" fill="#1c1c1c" text-anchor="start" font-weight="normal" font-family="Liberation Sans, sans-serif"  stroke="#1c1c1c" stroke-width="0.22">IN2</text>
<line x1="517.8" y1="98.4" x2="528.6" y2="98.4" stroke="#a03c34" stroke-width="0.72"/>
<line x1="491.4" y1="98.4" x2="517.8" y2="98.4" stroke="#1a4022" stroke-width="0.72"/>
<circle cx="489.2" cy="98.4" r="2.3" fill="#e3e3d3" stroke="#1a4022" stroke-width="0.8" />
<text x="501.0" y="96.2" font-size="4.45" fill="#1c1c1c" text-anchor="start" font-weight="normal" font-family="Liberation Sans, sans-serif"  stroke="#1c1c1c" stroke-width="0.22">PB4</text>
<rect x="521.0" y="94.0" width="7" height="3.8" fill="#ecc8c8" opacity="0.8"/>
<rect x="524.0" y="95.0" width="2.0" height="2.0" fill="#e03a3a"/>
<text x="520.2" y="97.8" font-size="3.4" fill="#555" text-anchor="middle" font-weight="normal" font-family="Liberation Sans, sans-serif" >7</text>
<text x="532.0" y="105.4" font-size="4.45" fill="#1c1c1c" text-anchor="start" font-weight="normal" font-family="Liberation Sans, sans-serif"  stroke="#1c1c1c" stroke-width="0.22">IN3</text>
<line x1="517.8" y1="103.8" x2="528.6" y2="103.8" stroke="#a03c34" stroke-width="0.72"/>
<line x1="491.4" y1="103.8" x2="517.8" y2="103.8" stroke="#1a4022" stroke-width="0.72"/>
<circle cx="489.2" cy="103.8" r="2.3" fill="#e3e3d3" stroke="#1a4022" stroke-width="0.8" />
<text x="501.0" y="101.6" font-size="4.45" fill="#1c1c1c" text-anchor="start" font-weight="normal" font-family="Liberation Sans, sans-serif"  stroke="#1c1c1c" stroke-width="0.22">PB5</text>
<rect x="521.0" y="99.4" width="7" height="3.8" fill="#d0d0f0" opacity="0.8"/>
<rect x="524.0" y="100.4" width="2.0" height="2.0" fill="#3a3ae0"/>
<text x="520.2" y="103.2" font-size="3.4" fill="#555" text-anchor="middle" font-weight="normal" font-family="Liberation Sans, sans-serif" >10</text>
<text x="532.0" y="110.8" font-size="4.45" fill="#1c1c1c" text-anchor="start" font-weight="normal" font-family="Liberation Sans, sans-serif"  stroke="#1c1c1c" stroke-width="0.22">IN4</text>
<line x1="517.8" y1="109.2" x2="528.6" y2="109.2" stroke="#a03c34" stroke-width="0.72"/>
<line x1="491.4" y1="109.2" x2="517.8" y2="109.2" stroke="#1a4022" stroke-width="0.72"/>
<circle cx="489.2" cy="109.2" r="2.3" fill="#e3e3d3" stroke="#1a4022" stroke-width="0.8" />
<text x="501.0" y="107.0" font-size="4.45" fill="#1c1c1c" text-anchor="start" font-weight="normal" font-family="Liberation Sans, sans-serif"  stroke="#1c1c1c" stroke-width="0.22">PB6</text>
<rect x="521.0" y="104.8" width="7" height="3.8" fill="#d0d0f0" opacity="0.8"/>
<rect x="524.0" y="105.8" width="2.0" height="2.0" fill="#3a3ae0"/>
<text x="520.2" y="108.6" font-size="3.4" fill="#555" text-anchor="middle" font-weight="normal" font-family="Liberation Sans, sans-serif" >12</text>
<text x="532.0" y="116.6" font-size="4.45" fill="#1c1c1c" text-anchor="start" font-weight="normal" font-family="Liberation Sans, sans-serif"  stroke="#1c1c1c" stroke-width="0.22">ENA</text>
<line x1="517.8" y1="115.0" x2="528.6" y2="115.0" stroke="#a03c34" stroke-width="0.72"/>
<line x1="507.6" y1="115.0" x2="517.8" y2="115.0" stroke="#1a4022" stroke-width="0.72"/>
<rect x="521.0" y="110.6" width="7" height="3.8" fill="#ecc8c8" opacity="0.8"/>
<rect x="524.0" y="111.6" width="2.0" height="2.0" fill="#e03a3a"/>
<text x="520.2" y="114.4" font-size="3.4" fill="#a44" text-anchor="middle" font-weight="normal" font-family="Liberation Sans, sans-serif" >6</text>
<text x="532.0" y="122.0" font-size="4.45" fill="#1c1c1c" text-anchor="start" font-weight="normal" font-family="Liberation Sans, sans-serif"  stroke="#1c1c1c" stroke-width="0.22">ENB</text>
<line x1="517.8" y1="120.4" x2="528.6" y2="120.4" stroke="#a03c34" stroke-width="0.72"/>
<line x1="507.6" y1="120.4" x2="517.8" y2="120.4" stroke="#1a4022" stroke-width="0.72"/>
<rect x="521.0" y="116.0" width="7" height="3.8" fill="#ecc8c8" opacity="0.8"/>
<rect x="524.0" y="117.0" width="2.0" height="2.0" fill="#e03a3a"/>
<text x="520.2" y="119.8" font-size="3.4" fill="#a44" text-anchor="middle" font-weight="normal" font-family="Liberation Sans, sans-serif" >11</text>
<text x="532.0" y="132.8" font-size="4.45" fill="#1c1c1c" text-anchor="start" font-weight="normal" font-family="Liberation Sans, sans-serif"  stroke="#1c1c1c" stroke-width="0.22">SENSA</text>
<line x1="517.8" y1="131.2" x2="528.6" y2="131.2" stroke="#a03c34" stroke-width="0.72"/>
<line x1="507.6" y1="131.2" x2="517.8" y2="131.2" stroke="#1a4022" stroke-width="0.72"/>
<rect x="521.0" y="126.8" width="7" height="3.8" fill="#ecc8c8" opacity="0.8"/>
<rect x="524.0" y="127.8" width="2.0" height="2.0" fill="#e03a3a"/>
<text x="520.2" y="130.6" font-size="3.4" fill="#a44" text-anchor="middle" font-weight="normal" font-family="Liberation Sans, sans-serif" >1</text>
<text x="532.0" y="138.2" font-size="4.45" fill="#1c1c1c" text-anchor="start" font-weight="normal" font-family="Liberation Sans, sans-serif"  stroke="#1c1c1c" stroke-width="0.22">SENSB</text>
<line x1="517.8" y1="136.6" x2="528.6" y2="136.6" stroke="#a03c34" stroke-width="0.72"/>
<line x1="507.6" y1="136.6" x2="517.8" y2="136.6" stroke="#1a4022" stroke-width="0.72"/>
<rect x="521.0" y="132.2" width="7" height="3.8" fill="#ecc8c8" opacity="0.8"/>
<rect x="524.0" y="133.2" width="2.0" height="2.0" fill="#e03a3a"/>
<text x="520.2" y="136.0" font-size="3.4" fill="#a44" text-anchor="middle" font-weight="normal" font-family="Liberation Sans, sans-serif" >15</text>
<line x1="507.6" y1="115.0" x2="507.6" y2="151.6" stroke="#1a4022" stroke-width="0.72"/>
<polygon points="507.6,156.8 505.0,151.6 510.2,151.6" fill="#e3e3d3" stroke="#10351a" stroke-width="1.35"/>
<circle cx="507.6" cy="120.4" r="1.6" fill="#143a1c" stroke="none" stroke-width="1" />
<circle cx="507.6" cy="131.2" r="1.6" fill="#143a1c" stroke="none" stroke-width="1" />
<circle cx="507.6" cy="136.6" r="1.6" fill="#143a1c" stroke="none" stroke-width="1" />
<text x="545.6" y="94.6" font-size="4.45" fill="#1c1c1c" text-anchor="start" font-weight="normal" font-family="Liberation Sans, sans-serif"  stroke="#1c1c1c" stroke-width="0.22">VCC</text>
<text x="569.2" y="94.6" font-size="4.45" fill="#1c1c1c" text-anchor="start" font-weight="normal" font-family="Liberation Sans, sans-serif"  stroke="#1c1c1c" stroke-width="0.22">VS</text>
<text x="557.2" y="138.2" font-size="4.45" fill="#1c1c1c" text-anchor="start" font-weight="normal" font-family="Liberation Sans, sans-serif"  stroke="#1c1c1c" stroke-width="0.22">GND</text>
<text x="590.6" y="100.6" font-size="4.45" fill="#1c1c1c" text-anchor="end" font-weight="normal" font-family="Liberation Sans, sans-serif"  stroke="#1c1c1c" stroke-width="0.22">OUT1</text>
<line x1="593.4" y1="99.0" x2="601.6" y2="99.0" stroke="#a03c34" stroke-width="0.72"/>
<text x="599.6" y="97.6" font-size="4.2" fill="#222" text-anchor="middle" font-weight="normal" font-family="Liberation Sans, sans-serif" >2</text>
<text x="590.6" y="111.4" font-size="4.45" fill="#1c1c1c" text-anchor="end" font-weight="normal" font-family="Liberation Sans, sans-serif"  stroke="#1c1c1c" stroke-width="0.22">OUT2</text>
<line x1="593.4" y1="109.8" x2="601.6" y2="109.8" stroke="#a03c34" stroke-width="0.72"/>
<text x="599.6" y="108.4" font-size="4.2" fill="#222" text-anchor="middle" font-weight="normal" font-family="Liberation Sans, sans-serif" >3</text>
<text x="590.6" y="122.0" font-size="4.45" fill="#1c1c1c" text-anchor="end" font-weight="normal" font-family="Liberation Sans, sans-serif"  stroke="#1c1c1c" stroke-width="0.22">OUT3</text>
<line x1="593.4" y1="120.4" x2="601.6" y2="120.4" stroke="#a03c34" stroke-width="0.72"/>
<text x="599.6" y="119.0" font-size="4.2" fill="#222" text-anchor="middle" font-weight="normal" font-family="Liberation Sans, sans-serif" >13</text>
<text x="590.6" y="132.8" font-size="4.45" fill="#1c1c1c" text-anchor="end" font-weight="normal" font-family="Liberation Sans, sans-serif"  stroke="#1c1c1c" stroke-width="0.22">OUT4</text>
<line x1="593.4" y1="131.2" x2="601.6" y2="131.2" stroke="#a03c34" stroke-width="0.72"/>
<text x="599.6" y="129.8" font-size="4.2" fill="#222" text-anchor="middle" font-weight="normal" font-family="Liberation Sans, sans-serif" >14</text>
<line x1="550.4" y1="57.6" x2="550.4" y2="88.0" stroke="#1a4022" stroke-width="0.72"/>
<polygon points="550.4,52.8 547.8,58.0 553.0,58.0" fill="#e3e3d3" stroke="#10351a" stroke-width="1.35"/>
<text x="552.2" y="81.8" font-size="4.3" fill="#222" text-anchor="start" font-weight="bold" font-family="Liberation Sans, sans-serif" >9</text>
<line x1="572.0" y1="43.0" x2="572.0" y2="88.0" stroke="#67866a" stroke-width="1.0"/>
<text x="574.0" y="81.8" font-size="4.3" fill="#222" text-anchor="start" font-weight="bold" font-family="Liberation Sans, sans-serif" >4</text>
<text x="545.4" y="37.6" font-size="4.2" fill="#3a3ab4" text-anchor="start" font-weight="bold" font-family="Liberation Sans, sans-serif" >U14(VS)</text>
<polygon points="565.0,35.0 569.2,35.6 566.6,39.4" fill="none" stroke="#3a3ab8" stroke-width="1"/>
<line x1="568.2" y1="38.0" x2="572.0" y2="43.0" stroke="#3a3ab8" stroke-width="1"/>
<line x1="572.0" y1="37.6" x2="582.6" y2="37.6" stroke="#5a5ac8" stroke-width="0.8" stroke-dasharray="1.6 0.8"/>
<line x1="572.0" y1="39.4" x2="582.6" y2="39.4" stroke="#5a5ac8" stroke-width="0.8"/>
<line x1="561.2" y1="141.6" x2="561.2" y2="150.0" stroke="#a03c34" stroke-width="0.72"/>
<line x1="561.2" y1="150.0" x2="561.2" y2="168.4" stroke="#1a4022" stroke-width="0.72"/>
<line x1="555.7" y1="168.4" x2="566.7" y2="168.4" stroke="#1a4022" stroke-width="0.72"/>
<line x1="558.5" y1="170.9" x2="564.0" y2="170.9" stroke="#1a4022" stroke-width="0.9"/>
<line x1="560.2" y1="173.4" x2="562.2" y2="173.4" stroke="#1a4022" stroke-width="0.9"/>
<text x="563.2" y="151.0" font-size="4.2" fill="#222" text-anchor="start" font-weight="normal" font-family="Liberation Sans, sans-serif" >8</text>
<text x="594.6" y="151.4" font-size="4.3500000000000005" fill="#1c1c1c" text-anchor="start" font-weight="normal" font-family="Liberation Sans, sans-serif"  stroke="#1c1c1c" stroke-width="0.22">L298</text>
<rect x="550.6" y="282.0" width="64.8" height="53.6" fill="#c9c9ad" stroke="#8c3630" stroke-width="0.9" />
<text x="616.6" y="274.4" font-size="6.6" fill="#1c1c1c" text-anchor="start" font-weight="normal" font-family="Liberation Sans, sans-serif" >U2</text>
<text x="554.0" y="288.6" font-size="4.45" fill="#1c1c1c" text-anchor="start" font-weight="normal" font-family="Liberation Sans, sans-serif"  stroke="#1c1c1c" stroke-width="0.22">IN1</text>
<line x1="539.8" y1="287.0" x2="550.6" y2="287.0" stroke="#a03c34" stroke-width="0.72"/>
<line x1="513.4" y1="287.0" x2="539.8" y2="287.0" stroke="#1a4022" stroke-width="0.72"/>
<circle cx="511.2" cy="287.0" r="2.3" fill="#e3e3d3" stroke="#1a4022" stroke-width="0.8" />
<text x="523.0" y="284.8" font-size="4.45" fill="#1c1c1c" text-anchor="start" font-weight="normal" font-family="Liberation Sans, sans-serif"  stroke="#1c1c1c" stroke-width="0.22">PB7</text>
<rect x="543.0" y="282.6" width="7" height="3.8" fill="#d0d0f0" opacity="0.8"/>
<rect x="546.0" y="283.6" width="2.0" height="2.0" fill="#3a3ae0"/>
<text x="542.2" y="286.4" font-size="3.4" fill="#555" text-anchor="middle" font-weight="normal" font-family="Liberation Sans, sans-serif" >5</text>
<text x="554.0" y="294.0" font-size="4.45" fill="#1c1c1c" text-anchor="start" font-weight="normal" font-family="Liberation Sans, sans-serif"  stroke="#1c1c1c" stroke-width="0.22">IN2</text>
<line x1="539.8" y1="292.4" x2="550.6" y2="292.4" stroke="#a03c34" stroke-width="0.72"/>
<line x1="513.4" y1="292.4" x2="539.8" y2="292.4" stroke="#1a4022" stroke-width="0.72"/>
<circle cx="511.2" cy="292.4" r="2.3" fill="#e3e3d3" stroke="#1a4022" stroke-width="0.8" />
<text x="523.0" y="290.2" font-size="4.45" fill="#1c1c1c" text-anchor="start" font-weight="normal" font-family="Liberation Sans, sans-serif"  stroke="#1c1c1c" stroke-width="0.22">PB8</text>
<rect x="543.0" y="288.0" width="7" height="3.8" fill="#d0d0f0" opacity="0.8"/>
<rect x="546.0" y="289.0" width="2.0" height="2.0" fill="#3a3ae0"/>
<text x="542.2" y="291.8" font-size="3.4" fill="#555" text-anchor="middle" font-weight="normal" font-family="Liberation Sans, sans-serif" >7</text>
<text x="554.0" y="299.4" font-size="4.45" fill="#1c1c1c" text-anchor="start" font-weight="normal" font-family="Liberation Sans, sans-serif"  stroke="#1c1c1c" stroke-width="0.22">IN3</text>
<line x1="539.8" y1="297.8" x2="550.6" y2="297.8" stroke="#a03c34" stroke-width="0.72"/>
<line x1="513.4" y1="297.8" x2="539.8" y2="297.8" stroke="#1a4022" stroke-width="0.72"/>
<circle cx="511.2" cy="297.8" r="2.3" fill="#e3e3d3" stroke="#1a4022" stroke-width="0.8" />
<text x="523.0" y="295.6" font-size="4.45" fill="#1c1c1c" text-anchor="start" font-weight="normal" font-family="Liberation Sans, sans-serif"  stroke="#1c1c1c" stroke-width="0.22">PB9</text>
<rect x="543.0" y="293.4" width="7" height="3.8" fill="#d0d0f0" opacity="0.8"/>
<rect x="546.0" y="294.4" width="2.0" height="2.0" fill="#3a3ae0"/>
<text x="542.2" y="297.2" font-size="3.4" fill="#555" text-anchor="middle" font-weight="normal" font-family="Liberation Sans, sans-serif" >10</text>
<text x="554.0" y="304.8" font-size="4.45" fill="#1c1c1c" text-anchor="start" font-weight="normal" font-family="Liberation Sans, sans-serif"  stroke="#1c1c1c" stroke-width="0.22">IN4</text>
<line x1="539.8" y1="303.2" x2="550.6" y2="303.2" stroke="#a03c34" stroke-width="0.72"/>
<line x1="513.4" y1="303.2" x2="539.8" y2="303.2" stroke="#1a4022" stroke-width="0.72"/>
<circle cx="511.2" cy="303.2" r="2.3" fill="#e3e3d3" stroke="#1a4022" stroke-width="0.8" />
<text x="523.0" y="301.0" font-size="4.45" fill="#1c1c1c" text-anchor="start" font-weight="normal" font-family="Liberation Sans, sans-serif"  stroke="#1c1c1c" stroke-width="0.22">PB11</text>
<rect x="543.0" y="298.8" width="7" height="3.8" fill="#ecc8c8" opacity="0.8"/>
<rect x="546.0" y="299.8" width="2.0" height="2.0" fill="#e03a3a"/>
<text x="542.2" y="302.6" font-size="3.4" fill="#555" text-anchor="middle" font-weight="normal" font-family="Liberation Sans, sans-serif" >12</text>
<text x="554.0" y="310.6" font-size="4.45" fill="#1c1c1c" text-anchor="start" font-weight="normal" font-family="Liberation Sans, sans-serif"  stroke="#1c1c1c" stroke-width="0.22">ENA</text>
<line x1="539.8" y1="309.0" x2="550.6" y2="309.0" stroke="#a03c34" stroke-width="0.72"/>
<line x1="529.6" y1="309.0" x2="539.8" y2="309.0" stroke="#1a4022" stroke-width="0.72"/>
<rect x="543.0" y="304.6" width="7" height="3.8" fill="#ecc8c8" opacity="0.8"/>
<rect x="546.0" y="305.6" width="2.0" height="2.0" fill="#e03a3a"/>
<text x="542.2" y="308.4" font-size="3.4" fill="#a44" text-anchor="middle" font-weight="normal" font-family="Liberation Sans, sans-serif" >6</text>
<text x="554.0" y="316.0" font-size="4.45" fill="#1c1c1c" text-anchor="start" font-weight="normal" font-family="Liberation Sans, sans-serif"  stroke="#1c1c1c" stroke-width="0.22">ENB</text>
<line x1="539.8" y1="314.4" x2="550.6" y2="314.4" stroke="#a03c34" stroke-width="0.72"/>
<line x1="529.6" y1="314.4" x2="539.8" y2="314.4" stroke="#1a4022" stroke-width="0.72"/>
<rect x="543.0" y="310.0" width="7" height="3.8" fill="#ecc8c8" opacity="0.8"/>
<rect x="546.0" y="311.0" width="2.0" height="2.0" fill="#e03a3a"/>
<text x="542.2" y="313.8" font-size="3.4" fill="#a44" text-anchor="middle" font-weight="normal" font-family="Liberation Sans, sans-serif" >11</text>
<text x="554.0" y="326.8" font-size="4.45" fill="#1c1c1c" text-anchor="start" font-weight="normal" font-family="Liberation Sans, sans-serif"  stroke="#1c1c1c" stroke-width="0.22">SENSA</text>
<line x1="539.8" y1="325.2" x2="550.6" y2="325.2" stroke="#a03c34" stroke-width="0.72"/>
<line x1="529.6" y1="325.2" x2="539.8" y2="325.2" stroke="#1a4022" stroke-width="0.72"/>
<rect x="543.0" y="320.8" width="7" height="3.8" fill="#ecc8c8" opacity="0.8"/>
<rect x="546.0" y="321.8" width="2.0" height="2.0" fill="#e03a3a"/>
<text x="542.2" y="324.6" font-size="3.4" fill="#a44" text-anchor="middle" font-weight="normal" font-family="Liberation Sans, sans-serif" >1</text>
<text x="554.0" y="332.2" font-size="4.45" fill="#1c1c1c" text-anchor="start" font-weight="normal" font-family="Liberation Sans, sans-serif"  stroke="#1c1c1c" stroke-width="0.22">SENSB</text>
<line x1="539.8" y1="330.6" x2="550.6" y2="330.6" stroke="#a03c34" stroke-width="0.72"/>
<line x1="529.6" y1="330.6" x2="539.8" y2="330.6" stroke="#1a4022" stroke-width="0.72"/>
<rect x="543.0" y="326.2" width="7" height="3.8" fill="#ecc8c8" opacity="0.8"/>
<rect x="546.0" y="327.2" width="2.0" height="2.0" fill="#e03a3a"/>
<text x="542.2" y="330.0" font-size="3.4" fill="#a44" text-anchor="middle" font-weight="normal" font-family="Liberation Sans, sans-serif" >15</text>
<line x1="529.6" y1="309.0" x2="529.6" y2="345.6" stroke="#1a4022" stroke-width="0.72"/>
<polygon points="529.6,350.8 527.0,345.6 532.2,345.6" fill="#e3e3d3" stroke="#10351a" stroke-width="1.35"/>
<circle cx="529.6" cy="314.4" r="1.6" fill="#143a1c" stroke="none" stroke-width="1" />
<circle cx="529.6" cy="325.2" r="1.6" fill="#143a1c" stroke="none" stroke-width="1" />
<circle cx="529.6" cy="330.6" r="1.6" fill="#143a1c" stroke="none" stroke-width="1" />
<text x="567.6" y="288.6" font-size="4.45" fill="#1c1c1c" text-anchor="start" font-weight="normal" font-family="Liberation Sans, sans-serif"  stroke="#1c1c1c" stroke-width="0.22">VCC</text>
<text x="591.2" y="288.6" font-size="4.45" fill="#1c1c1c" text-anchor="start" font-weight="normal" font-family="Liberation Sans, sans-serif"  stroke="#1c1c1c" stroke-width="0.22">VS</text>
<text x="579.2" y="332.2" font-size="4.45" fill="#1c1c1c" text-anchor="start" font-weight="normal" font-family="Liberation Sans, sans-serif"  stroke="#1c1c1c" stroke-width="0.22">GND</text>
<text x="612.6" y="294.6" font-size="4.45" fill="#1c1c1c" text-anchor="end" font-weight="normal" font-family="Liberation Sans, sans-serif"  stroke="#1c1c1c" stroke-width="0.22">OUT1</text>
<line x1="615.4" y1="293.0" x2="623.6" y2="293.0" stroke="#a03c34" stroke-width="0.72"/>
<text x="621.6" y="291.6" font-size="4.2" fill="#222" text-anchor="middle" font-weight="normal" font-family="Liberation Sans, sans-serif" >2</text>
<text x="612.6" y="305.4" font-size="4.45" fill="#1c1c1c" text-anchor="end" font-weight="normal" font-family="Liberation Sans, sans-serif"  stroke="#1c1c1c" stroke-width="0.22">OUT2</text>
<line x1="615.4" y1="303.8" x2="623.6" y2="303.8" stroke="#a03c34" stroke-width="0.72"/>
<text x="621.6" y="302.4" font-size="4.2" fill="#222" text-anchor="middle" font-weight="normal" font-family="Liberation Sans, sans-serif" >3</text>
<text x="612.6" y="316.0" font-size="4.45" fill="#1c1c1c" text-anchor="end" font-weight="normal" font-family="Liberation Sans, sans-serif"  stroke="#1c1c1c" stroke-width="0.22">OUT3</text>
<line x1="615.4" y1="314.4" x2="623.6" y2="314.4" stroke="#a03c34" stroke-width="0.72"/>
<text x="621.6" y="313.0" font-size="4.2" fill="#222" text-anchor="middle" font-weight="normal" font-family="Liberation Sans, sans-serif" >13</text>
<text x="612.6" y="326.8" font-size="4.45" fill="#1c1c1c" text-anchor="end" font-weight="normal" font-family="Liberation Sans, sans-serif"  stroke="#1c1c1c" stroke-width="0.22">OUT4</text>
<line x1="615.4" y1="325.2" x2="623.6" y2="325.2" stroke="#a03c34" stroke-width="0.72"/>
<text x="621.6" y="323.8" font-size="4.2" fill="#222" text-anchor="middle" font-weight="normal" font-family="Liberation Sans, sans-serif" >14</text>
<line x1="572.4" y1="251.6" x2="572.4" y2="282.0" stroke="#1a4022" stroke-width="0.72"/>
<polygon points="572.4,246.8 569.8,252.0 575.0,252.0" fill="#e3e3d3" stroke="#10351a" stroke-width="1.35"/>
<text x="574.2" y="275.8" font-size="4.3" fill="#222" text-anchor="start" font-weight="bold" font-family="Liberation Sans, sans-serif" >9</text>
<line x1="594.0" y1="237.0" x2="594.0" y2="282.0" stroke="#67866a" stroke-width="1.0"/>
<text x="596.0" y="275.8" font-size="4.3" fill="#222" text-anchor="start" font-weight="bold" font-family="Liberation Sans, sans-serif" >4</text>
<text x="569.6" y="231.6" font-size="4.2" fill="#3a3ab4" text-anchor="start" font-weight="bold" font-family="Liberation Sans, sans-serif" >U2(VS)</text>
<polygon points="587.0,229.0 591.2,229.6 588.6,233.4" fill="none" stroke="#3a3ab8" stroke-width="1"/>
<line x1="590.2" y1="232.0" x2="594.0" y2="237.0" stroke="#3a3ab8" stroke-width="1"/>
<line x1="594.0" y1="231.6" x2="604.6" y2="231.6" stroke="#5a5ac8" stroke-width="0.8" stroke-dasharray="1.6 0.8"/>
<line x1="594.0" y1="233.4" x2="604.6" y2="233.4" stroke="#5a5ac8" stroke-width="0.8"/>
<line x1="583.2" y1="335.6" x2="583.2" y2="344.0" stroke="#a03c34" stroke-width="0.72"/>
<line x1="583.2" y1="344.0" x2="583.2" y2="362.4" stroke="#1a4022" stroke-width="0.72"/>
<line x1="577.7" y1="362.4" x2="588.7" y2="362.4" stroke="#1a4022" stroke-width="0.72"/>
<line x1="580.5" y1="364.9" x2="586.0" y2="364.9" stroke="#1a4022" stroke-width="0.9"/>
<line x1="582.2" y1="367.4" x2="584.2" y2="367.4" stroke="#1a4022" stroke-width="0.9"/>
<text x="585.2" y="345.0" font-size="4.2" fill="#222" text-anchor="start" font-weight="normal" font-family="Liberation Sans, sans-serif" >8</text>
<text x="616.6" y="345.4" font-size="4.3500000000000005" fill="#1c1c1c" text-anchor="start" font-weight="normal" font-family="Liberation Sans, sans-serif"  stroke="#1c1c1c" stroke-width="0.22">L298</text>
<polyline points="601.4,98.8 635.8,98.8 635.8,94.5 641.4,94.5" fill="none" stroke="#1a4022" stroke-width="0.72" />
<polyline points="601.4,109.4 635.8,109.4 635.8,119.9 668.7,119.9 668.7,94.5 662.6,94.5" fill="none" stroke="#1a4022" stroke-width="0.72" />
<polyline points="601.4,120.2 635.8,120.2" fill="none" stroke="#1a4022" stroke-width="0.72" />
<polyline points="633.8,120.4 633.8,150.5 640.0,150.5" fill="none" stroke="#67866a" stroke-width="1.0" />
<polyline points="601.4,131.2 627.6,131.2 627.6,162.3 666.5,162.3 666.5,150.5 660.6,150.5" fill="none" stroke="#1a4022" stroke-width="0.72" />
<circle cx="652.1" cy="94.6" r="10.7" fill="#d2d2ea" stroke="#8c3630" stroke-width="1.0" />
<path transform="translate(652.1,94.6)" d="M-3.6 -8.4 C-1.6 -9 -1.2 -8 0 -8.6 C1.2 -8 1.6 -9 3.6 -8.4 L5.4 -6.6 L4.6 -4.4 L5.2 -3.2 L4 -1.6 L4.2 1.6 L5.2 3.2 L4.6 4.4 L5.4 6.6 L3.6 8.4 C1.6 9 1.2 8 0 8.6 C-1.2 8 -1.6 9 -3.6 8.4 L-5.4 6.6 L-4.6 4.4 L-5.2 3.2 L-4 1.6 L-4.2 -1.6 L-5.2 -3.2 L-4.6 -4.4 L-5.4 -6.6 Z" fill="#16168e" stroke="#10106a" stroke-width="0.5"/>
<line x1="635.8" y1="94.6" x2="641.4" y2="94.6" stroke="#a03c34" stroke-width="0.72"/>
<line x1="662.8" y1="94.6" x2="668.7" y2="94.6" stroke="#a03c34" stroke-width="0.72"/>
<rect x="644.5" y="107.0" width="14.9" height="4.6" fill="#0c7c2c" stroke="#22c044" stroke-width="0.9" />
<text x="652.1" y="110.8" font-size="4.2" fill="#042" text-anchor="middle" font-weight="normal" font-family="Liberation Sans, sans-serif" >+57.6</text>
<text x="652.3" y="117.4" font-size="4.1" fill="#a02020" text-anchor="middle" font-weight="bold" font-family="Liberation Sans, sans-serif" >kRPM</text>
<line x1="633.8" y1="150.7" x2="640.2" y2="150.7" stroke="#a03c34" stroke-width="0.72"/>
<line x1="660.2" y1="150.7" x2="666.2" y2="150.7" stroke="#a03c34" stroke-width="0.72"/>
<circle cx="650.2" cy="150.7" r="10.8" fill="#0a0808" stroke="none" stroke-width="1" />
<path d="M645.6 145.9 a6.6 6.6 0 0 0 0 9.6" fill="none" stroke="#1cb0bc" stroke-width="3.2"/>
<path d="M654.8 145.9 a6.6 6.6 0 0 1 0 9.6" fill="none" stroke="#1cb0bc" stroke-width="3.2"/>
<circle cx="650.2" cy="150.7" r="2.5" fill="#ead8c4" stroke="#a8604c" stroke-width="0.8" />
<path transform="translate(674.0,83.0)" d="M1 0 L0 3.0 M0 3.0 H5.4 M2.7 3.0 V5.4 M1 5.4 H4.4 M2.7 0 L5.4 1.5" stroke="#b03030" stroke-width="0.8" fill="none" opacity="0.78"/>
<path transform="translate(679.9,83.0)" d="M0 0.6 H5.4 M1 0.6 V5.4 M4.4 0.6 V5.4 M1 3.0 H4.4 M1 5.4 H4.4" stroke="#b03030" stroke-width="0.8" fill="none" opacity="0.78"/>
<path transform="translate(685.8,83.0)" d="M0 1 H2.7 M1.5 0 V5.4 M2.7 1.5 H5.4 M4.1 0 V5.4 M2.7 5.4 H5.4" stroke="#b03030" stroke-width="0.8" fill="none" opacity="0.78"/>
<path transform="translate(691.7,83.0)" d="M1 0 L0 3.0 M0 3.0 H5.4 M2.7 3.0 V5.4 M1 5.4 H4.4 M2.7 0 L5.4 1.5" stroke="#b03030" stroke-width="0.8" fill="none" opacity="0.78"/>
<path transform="translate(697.6,83.0)" d="M0 0.6 H5.4 M1 0.6 V5.4 M4.4 0.6 V5.4 M1 3.0 H4.4 M1 5.4 H4.4" stroke="#b03030" stroke-width="0.8" fill="none" opacity="0.78"/>
<text x="668.4" y="96.0" font-size="6.6" fill="#a02020" text-anchor="start" font-weight="normal" font-family="Liberation Sans, sans-serif" >Humidity Treatment</text>
<path transform="translate(678.0,144.6)" d="M2.9 0 V5.8 M0 1.6 H5.8 M0 5.8 L2.9 1.6 M5.8 5.8 L2.9 1.6 M1 4.3 H4.8" stroke="#b03030" stroke-width="0.8" fill="none" opacity="0.78"/>
<path transform="translate(684.3,144.6)" d="M0 1.6 H5.8 M1.6 0 V5.8 M4.3 1.6 V5.8 M2.9 3.2 H5.8 M0 5.8 H2.9" stroke="#b03030" stroke-width="0.8" fill="none" opacity="0.78"/>
<text x="668.0" y="155.8" font-size="6.6" fill="#a02020" text-anchor="start" font-weight="normal" font-family="Liberation Sans, sans-serif" >Window Opened</text>
<polyline points="623.4,293.0 657.8,293.0 657.8,289.0 663.0,289.0" fill="none" stroke="#1a4022" stroke-width="0.72" />
<polyline points="623.4,303.8 657.8,303.8 657.8,314.4 690.6,314.4 690.6,289.0 685.0,289.0" fill="none" stroke="#1a4022" stroke-width="0.72" />
<polyline points="623.4,314.4 657.8,314.4" fill="none" stroke="#1a4022" stroke-width="0.72" />
<polyline points="655.8,314.4 655.8,345.0 661.6,345.0" fill="none" stroke="#67866a" stroke-width="1.0" />
<polyline points="623.4,325.2 648.4,325.2 648.4,357.0 687.6,357.0 687.6,345.0 682.4,345.0" fill="none" stroke="#1a4022" stroke-width="0.72" />
<circle cx="674.0" cy="289.0" r="10.7" fill="#d2d2ea" stroke="#8c3630" stroke-width="1.0" />
<path transform="translate(674.0,289.0)" d="M-3.6 -8.4 C-1.6 -9 -1.2 -8 0 -8.6 C1.2 -8 1.6 -9 3.6 -8.4 L5.4 -6.6 L4.6 -4.4 L5.2 -3.2 L4 -1.6 L4.2 1.6 L5.2 3.2 L4.6 4.4 L5.4 6.6 L3.6 8.4 C1.6 9 1.2 8 0 8.6 C-1.2 8 -1.6 9 -3.6 8.4 L-5.4 6.6 L-4.6 4.4 L-5.2 3.2 L-4 1.6 L-4.2 -1.6 L-5.2 -3.2 L-4.6 -4.4 L-5.4 -6.6 Z" fill="#16168e" stroke="#10106a" stroke-width="0.5"/>
<line x1="657.7" y1="289.0" x2="663.3" y2="289.0" stroke="#a03c34" stroke-width="0.72"/>
<line x1="684.7" y1="289.0" x2="690.6" y2="289.0" stroke="#a03c34" stroke-width="0.72"/>
<rect x="666.4" y="301.4" width="14.9" height="4.6" fill="#0c7c2c" stroke="#22c044" stroke-width="0.9" />
<text x="674.0" y="305.2" font-size="4.2" fill="#042" text-anchor="middle" font-weight="normal" font-family="Liberation Sans, sans-serif" >+57.6</text>
<text x="674.2" y="311.8" font-size="4.1" fill="#a02020" text-anchor="middle" font-weight="bold" font-family="Liberation Sans, sans-serif" >kRPM</text>
<line x1="655.6" y1="345.0" x2="662.0" y2="345.0" stroke="#a03c34" stroke-width="0.72"/>
<line x1="682.0" y1="345.0" x2="688.0" y2="345.0" stroke="#a03c34" stroke-width="0.72"/>
<circle cx="672.0" cy="345.0" r="10.8" fill="#0a0808" stroke="none" stroke-width="1" />
<path d="M667.4 340.2 a6.6 6.6 0 0 0 0 9.6" fill="none" stroke="#1cb0bc" stroke-width="3.2"/>
<path d="M676.6 340.2 a6.6 6.6 0 0 1 0 9.6" fill="none" stroke="#1cb0bc" stroke-width="3.2"/>
<circle cx="672.0" cy="345.0" r="2.5" fill="#ead8c4" stroke="#a8604c" stroke-width="0.8" />
<path transform="translate(702.0,282.6)" d="M0 1.6 H5.8 M1.6 0 V5.8 M4.3 1.6 V5.8 M2.9 3.2 H5.8 M0 5.8 H2.9" stroke="#b03030" stroke-width="0.8" fill="none" opacity="0.78"/>
<path transform="translate(708.3,282.6)" d="M0 1 H5.8 M2.9 0 V5.8 M0 5.8 L2.9 3.2 L5.8 5.8 M1 3.2 H4.8" stroke="#b03030" stroke-width="0.8" fill="none" opacity="0.78"/>
<path transform="translate(714.6,282.6)" d="M2.9 0 V5.8 M0 1.6 H5.8 M0 5.8 L2.9 1.6 M5.8 5.8 L2.9 1.6 M1 4.3 H4.8" stroke="#b03030" stroke-width="0.8" fill="none" opacity="0.78"/>
<path transform="translate(720.9,282.6)" d="M0 1.6 H5.8 M1.6 0 V5.8 M4.3 1.6 V5.8 M2.9 3.2 H5.8 M0 5.8 H2.9" stroke="#b03030" stroke-width="0.8" fill="none" opacity="0.78"/>
<text x="695.0" y="295.6" font-size="6.6" fill="#a02020" text-anchor="start" font-weight="normal" font-family="Liberation Sans, sans-serif" >Curtain Lifting</text>
<path transform="translate(694.0,338.8)" d="M2.9 0 V5.8 M0 1.6 H5.8 M0 5.8 L2.9 1.6 M5.8 5.8 L2.9 1.6 M1 4.3 H4.8" stroke="#b03030" stroke-width="0.8" fill="none" opacity="0.78"/>
<path transform="translate(700.3,338.8)" d="M0 1.6 H5.8 M1.6 0 V5.8 M4.3 1.6 V5.8 M2.9 3.2 H5.8 M0 5.8 H2.9" stroke="#b03030" stroke-width="0.8" fill="none" opacity="0.78"/>
<text x="689.8" y="349.6" font-size="6.6" fill="#a02020" text-anchor="start" font-weight="normal" font-family="Liberation Sans, sans-serif" >Cooling</text>
<polygon points="686.6,172.0 684.0,177.2 689.2,177.2" fill="#e3e3d3" stroke="#10351a" stroke-width="1.35"/>
<line x1="686.6" y1="177.2" x2="686.6" y2="182.0" stroke="#1a4022" stroke-width="0.72"/>
<polyline points="686.6,182.0 686.6,187.0 692.0,187.0" fill="none" stroke="#b44" stroke-width="0.72" />
<polyline points="692.0,197.6 684.4,197.6" fill="none" stroke="#b44" stroke-width="0.72" />
<polyline points="684.4,197.6 684.4,211.0 676.4,218.0" fill="none" stroke="#1a4022" stroke-width="0.72" />
<path d="M702 184.4 L702 199.6 L700 199.6 A8 7.6 0 0 1 700 184.4 Z" fill="#d9c9b0" stroke="#8c3630" stroke-width="1"/>
<text x="693.6" y="182.0" font-size="6.6" fill="#1c1c1c" text-anchor="start" font-weight="normal" font-family="Liberation Sans, sans-serif" >BUZ1</text>
<text x="694.0" y="205.4" font-size="4.3500000000000005" fill="#1c1c1c" text-anchor="start" font-weight="normal" font-family="Liberation Sans, sans-serif"  stroke="#1c1c1c" stroke-width="0.22">BUZZER</text>
<rect x="673.6" y="214.0" width="2.8" height="16.4" fill="#e4cdb6" stroke="#8c3630" stroke-width="0.9" />
<polyline points="676.4,226.0 684.4,233.0 684.4,248.4" fill="none" stroke="#1a4022" stroke-width="0.72" />
<line x1="678.9" y1="248.4" x2="689.9" y2="248.4" stroke="#1a4022" stroke-width="0.72"/>
<line x1="681.6" y1="250.9" x2="687.1" y2="250.9" stroke="#1a4022" stroke-width="0.9"/>
<line x1="683.4" y1="253.4" x2="685.4" y2="253.4" stroke="#1a4022" stroke-width="0.9"/>
<polygon points="678.4,216.2 681.4,215.6 680.2,213.2" fill="#8c3630"/>
<line x1="655.8" y1="222.0" x2="673.6" y2="222.0" stroke="#1a4022" stroke-width="0.72"/>
<rect x="639.6" y="219.8" width="16.2" height="4.4" fill="#e4cdb6" stroke="#8c3630" stroke-width="0.9" />
<line x1="616.5" y1="222.0" x2="639.6" y2="222.0" stroke="#1a4022" stroke-width="0.72"/>
<circle cx="614.4" cy="222.0" r="2.3" fill="#e3e3d3" stroke="#1a4022" stroke-width="0.8" />
<text x="623.0" y="219.8" font-size="4.45" fill="#1c1c1c" text-anchor="start" font-weight="normal" font-family="Liberation Sans, sans-serif"  stroke="#1c1c1c" stroke-width="0.22">PB1</text>
<text x="631.4" y="219.8" font-size="4.4" fill="#c33" text-anchor="start" font-weight="bold" font-family="Liberation Sans, sans-serif" >3</text>
<text x="639.0" y="228.6" font-size="4.3500000000000005" fill="#1c1c1c" text-anchor="start" font-weight="normal" font-family="Liberation Sans, sans-serif"  stroke="#1c1c1c" stroke-width="0.22">220</text>
<text x="687.6" y="216.0" font-size="6.6" fill="#1c1c1c" text-anchor="start" font-weight="normal" font-family="Liberation Sans, sans-serif" >Q5</text>
<text x="688.0" y="221.6" font-size="4.3500000000000005" fill="#1c1c1c" text-anchor="start" font-weight="normal" font-family="Liberation Sans, sans-serif"  stroke="#1c1c1c" stroke-width="0.22">TIP32</text>
<path transform="translate(704.0,216.6)" d="M0 1.7 H6.0 M1.7 0 V6.0 M4.5 1.7 V6.0 M3.0 3.3 H6.0 M0 6.0 H3.0" stroke="#b02020" stroke-width="0.8" fill="none" opacity="0.78"/>
<path transform="translate(710.5,216.6)" d="M0 1 H6.0 M3.0 0 V6.0 M0 6.0 L3.0 3.3 L6.0 6.0 M1 3.3 H5.0" stroke="#b02020" stroke-width="0.8" fill="none" opacity="0.78"/>
<path transform="translate(717.0,216.6)" d="M3.0 0 V6.0 M0 1.7 H6.0 M0 6.0 L3.0 1.7 M6.0 6.0 L3.0 1.7 M1 4.5 H5.0" stroke="#b02020" stroke-width="0.8" fill="none" opacity="0.78"/>
<path transform="translate(723.5,216.6)" d="M0 1.7 H6.0 M1.7 0 V6.0 M4.5 1.7 V6.0 M3.0 3.3 H6.0 M0 6.0 H3.0" stroke="#b02020" stroke-width="0.8" fill="none" opacity="0.78"/>
<text x="702.0" y="230.6" font-size="6.6" fill="#a02020" text-anchor="start" font-weight="normal" font-family="Liberation Sans, sans-serif" >Smoke Alarm</text>
<rect x="680.6" y="236.4" width="2.0" height="2.0" fill="#3a3ae0"/>
<circle cx="514.4" cy="388.0" r="2.3" fill="#e3e3d3" stroke="#1a4022" stroke-width="0.8" />
<line x1="516.5" y1="388.0" x2="550.0" y2="388.0" stroke="#1a4022" stroke-width="0.72"/>
<rect x="550.0" y="385.8" width="16.6" height="4.4" fill="#e4cdb6" stroke="#8c3630" stroke-width="0.9" />
<line x1="566.6" y1="388.0" x2="628.0" y2="388.0" stroke="#1a4022" stroke-width="0.72"/>
<polygon points="633.2,388.0 628.0,385.4 628.0,390.6" fill="#e3e3d3" stroke="#10351a" stroke-width="1.2"/>
<circle cx="593.4" cy="388.0" r="6.8" fill="#f8d208" stroke="#4a3c08" stroke-width="1.2" />
<path d="M590.4 388 L595.6 385 L595.6 391 Z M590.4 385 V391" fill="none" stroke="#6a5a10" stroke-width="0.8"/>
<text x="550.0" y="384.0" font-size="6.6" fill="#1c1c1c" text-anchor="start" font-weight="normal" font-family="Liberation Sans, sans-serif" >R3</text>
<text x="551.0" y="394.6" font-size="4.3500000000000005" fill="#1c1c1c" text-anchor="start" font-weight="normal" font-family="Liberation Sans, sans-serif"  stroke="#1c1c1c" stroke-width="0.22">100</text>
<text x="532.4" y="386.4" font-size="4.45" fill="#1c1c1c" text-anchor="start" font-weight="normal" font-family="Liberation Sans, sans-serif"  stroke="#1c1c1c" stroke-width="0.22">PB1</text>
<rect x="544.0" y="383.4" width="2.0" height="2.0" fill="#3a3ae0"/>
<text x="586.0" y="379.4" font-size="6.6" fill="#1a2450" text-anchor="start" font-weight="normal" font-family="Liberation Sans, sans-serif" >D1</text>
<path transform="translate(606.0,371.4)" d="M2.8 0 V5.6 M0 1.6 H5.6 M0 5.6 L2.8 1.6 M5.6 5.6 L2.8 1.6 M1 4.2 H4.6" stroke="#b03030" stroke-width="0.8" fill="none" opacity="0.78"/>
<path transform="translate(612.1,371.4)" d="M0 1.6 H5.6 M1.6 0 V5.6 M4.2 1.6 V5.6 M2.8 3.1 H5.6 M0 5.6 H2.8" stroke="#b03030" stroke-width="0.8" fill="none" opacity="0.78"/>
<text x="598.0" y="382.2" font-size="6.6" fill="#a02020" text-anchor="start" font-weight="normal" font-family="Liberation Sans, sans-serif" >Light On</text>
<text x="586.2" y="399.4" font-size="4.15" fill="#26305a" text-anchor="start" font-weight="bold" font-family="Liberation Sans, sans-serif" >LED-YELLOW</text>
<rect x="603.0" y="388.6" width="2.0" height="2.0" fill="#e03a3a"/>
<polygon points="549.6,425.0 547.0,430.2 552.2,430.2" fill="#e3e3d3" stroke="#10351a" stroke-width="1.35"/>
<line x1="549.6" y1="430.2" x2="549.6" y2="483.6" stroke="#1a4022" stroke-width="0.72"/>
<circle cx="549.6" cy="440.0" r="1.6" fill="#143a1c" stroke="none" stroke-width="1" />
<polyline points="520.0,483.6 520.0,440.0 566.0,440.0" fill="none" stroke="#1a4022" stroke-width="0.72" />
<rect x="517.7" y="454.4" width="4.6" height="16.0" fill="#e4cdb6" stroke="#8c3630" stroke-width="0.9" />
<text x="526.0" y="464.6" font-size="4.3500000000000005" fill="#1c1c1c" text-anchor="start" font-weight="normal" font-family="Liberation Sans, sans-serif"  stroke="#1c1c1c" stroke-width="0.22">1k</text>
<rect x="516.0" y="447.6" width="2.0" height="2.0" fill="#e03a3a"/>
<line x1="520.0" y1="483.6" x2="562.0" y2="483.6" stroke="#1a4022" stroke-width="0.72"/>
<circle cx="533.6" cy="483.6" r="6.8" fill="#7a1010" stroke="#5a0a0a" stroke-width="0.8" />
<circle cx="549.6" cy="483.6" r="1.6" fill="#143a1c" stroke="none" stroke-width="1" />
<circle cx="562.0" cy="483.6" r="1.6" fill="#143a1c" stroke="none" stroke-width="1" />
<polygon points="544.4,473 554.8,473 549.6,467.8" fill="#e4cdb6" stroke="#8c3630" stroke-width="0.9"/>
<line x1="544.2" y1="467.6" x2="555.0" y2="467.6" stroke="#8c3630" stroke-width="1"/>
<rect x="545.0" y="461.0" width="2.0" height="2.0" fill="#e03a3a"/>
<text x="558.0" y="473.0" font-size="6.6" fill="#1c1c1c" text-anchor="start" font-weight="normal" font-family="Liberation Sans, sans-serif" >D4</text>
<text x="558.0" y="478.6" font-size="4.3500000000000005" fill="#1c1c1c" text-anchor="start" font-weight="normal" font-family="Liberation Sans, sans-serif"  stroke="#1c1c1c" stroke-width="0.22">1N4148</text>
<path d="M566 440 C574.5 440 574.5 445.5 567.6 445.5 C574.5 445.5 574.5 451 567.6 451 C574.5 451 574.5 456.6 566 456.6" fill="none" stroke="#8a3030" stroke-width="0.85"/>
<polyline points="566.0,456.6 557.4,456.6 557.4,483.6" fill="none" stroke="#1a4022" stroke-width="0.72" />
<line x1="574.0" y1="437.4" x2="574.0" y2="459.3" stroke="#6a2a2a" stroke-width="0.6"/>
<line x1="576.4" y1="437.4" x2="576.4" y2="459.3" stroke="#6a2a2a" stroke-width="0.6"/>
<rect x="559.0" y="436.4" width="2.0" height="2.0" fill="#e03a3a"/>
<polygon points="587.4,411.0 584.8,416.2 590.0,416.2" fill="#e3e3d3" stroke="#10351a" stroke-width="1.35"/>
<line x1="587.4" y1="416.2" x2="587.4" y2="438.4" stroke="#1a4022" stroke-width="0.72"/>
<rect x="589.2" y="428.0" width="2.0" height="2.0" fill="#e03a3a"/>
<circle cx="587.4" cy="440.0" r="1.5" fill="#e3e3d3" stroke="#8c3630" stroke-width="0.9" />
<line x1="587.0" y1="441.4" x2="582.4" y2="456.4" stroke="#18a8b8" stroke-width="1.2"/>
<circle cx="582.0" cy="458.0" r="1.5" fill="#e3e3d3" stroke="#8c3630" stroke-width="0.9" />
<circle cx="593.0" cy="458.0" r="1.5" fill="#e3e3d3" stroke="#8c3630" stroke-width="0.9" />
<line x1="582.0" y1="459.6" x2="582.0" y2="478.4" stroke="#1a4022" stroke-width="0.72"/>
<rect x="580.0" y="478.4" width="4.6" height="15.8" fill="#e4cdb6" stroke="#8c3630" stroke-width="0.9" />
<polyline points="582.3,494.2 582.3,499.6 592.6,499.6 592.6,507.0" fill="none" stroke="#1a4022" stroke-width="0.72" />
<polyline points="593.0,459.6 593.0,465.6 598.4,465.6 598.4,478.4" fill="none" stroke="#1a4022" stroke-width="0.72" />
<rect x="596.1" y="478.4" width="4.6" height="15.8" fill="#e4cdb6" stroke="#8c3630" stroke-width="0.9" />
<line x1="598.4" y1="494.2" x2="598.4" y2="510.6" stroke="#1a4022" stroke-width="0.72"/>
<text x="588.0" y="489.6" font-size="4.3500000000000005" fill="#1c1c1c" text-anchor="start" font-weight="normal" font-family="Liberation Sans, sans-serif"  stroke="#1c1c1c" stroke-width="0.22">100</text>
<text x="604.0" y="489.6" font-size="4.3500000000000005" fill="#1c1c1c" text-anchor="start" font-weight="normal" font-family="Liberation Sans, sans-serif"  stroke="#1c1c1c" stroke-width="0.22">100</text>
<circle cx="598.4" cy="516.4" r="6.0" fill="#de1414" stroke="#a80c0c" stroke-width="0.8" />
<rect x="591.1" y="507.1" width="1.8" height="1.8" fill="#e03a3a"/>
<rect x="595.1" y="507.1" width="1.8" height="1.8" fill="#e03a3a"/>
<rect x="601.7" y="506.7" width="1.8" height="1.8" fill="#e03a3a"/>
<rect x="594.6" y="523.0" width="2.0" height="2.0" fill="#3a3ae0"/>
<polyline points="598.4,522.4 598.4,532.0 562.0,532.0" fill="none" stroke="#1a4022" stroke-width="0.72" />
<polyline points="562.0,483.6 562.0,499.0 553.8,506.0" fill="none" stroke="#1a4022" stroke-width="0.72" />
<rect x="551.0" y="502.0" width="2.8" height="16.4" fill="#e4cdb6" stroke="#8c3630" stroke-width="0.9" />
<polyline points="553.8,514.0 562.0,521.0 562.0,541.4" fill="none" stroke="#1a4022" stroke-width="0.72" />
<circle cx="562.0" cy="532.0" r="1.6" fill="#143a1c" stroke="none" stroke-width="1" />
<line x1="556.5" y1="541.4" x2="567.5" y2="541.4" stroke="#1a4022" stroke-width="0.72"/>
<line x1="559.2" y1="543.9" x2="564.8" y2="543.9" stroke="#1a4022" stroke-width="0.9"/>
<line x1="561.0" y1="546.4" x2="563.0" y2="546.4" stroke="#1a4022" stroke-width="0.9"/>
<polygon points="555.6,504.2 558.6,503.6 557.4,501.2" fill="#8c3630"/>
<line x1="529.0" y1="510.6" x2="551.0" y2="510.6" stroke="#1a4022" stroke-width="0.72"/>
<rect x="511.6" y="508.4" width="17.4" height="4.4" fill="#e4cdb6" stroke="#8c3630" stroke-width="0.9" />
<line x1="482.5" y1="510.6" x2="511.6" y2="510.6" stroke="#1a4022" stroke-width="0.72"/>
<circle cx="480.4" cy="510.6" r="2.3" fill="#e3e3d3" stroke="#1a4022" stroke-width="0.8" />
<text x="495.6" y="508.4" font-size="4.45" fill="#1c1c1c" text-anchor="start" font-weight="normal" font-family="Liberation Sans, sans-serif"  stroke="#1c1c1c" stroke-width="0.22">PB1</text>
<text x="503.6" y="508.4" font-size="4.3" fill="#44c" text-anchor="start" font-weight="normal" font-family="Liberation Sans, sans-serif" >4</text>
<text x="512.0" y="517.4" font-size="4.3500000000000005" fill="#1c1c1c" text-anchor="start" font-weight="normal" font-family="Liberation Sans, sans-serif"  stroke="#1c1c1c" stroke-width="0.22">100</text>
<text x="565.6" y="505.6" font-size="6.6" fill="#1c1c1c" text-anchor="start" font-weight="normal" font-family="Liberation Sans, sans-serif" >Q3</text>
<text x="566.0" y="510.6" font-size="4.3500000000000005" fill="#1c1c1c" text-anchor="start" font-weight="normal" font-family="Liberation Sans, sans-serif"  stroke="#1c1c1c" stroke-width="0.22">TIP32</text>
<rect x="557.0" y="524.0" width="2.0" height="2.0" fill="#3a3ae0"/>
<path transform="translate(615.6,501.6)" d="M2.9 0 V5.8 M0 1.6 H5.8 M0 5.8 L2.9 1.6 M5.8 5.8 L2.9 1.6 M1 4.3 H4.8" stroke="#b03030" stroke-width="0.8" fill="none" opacity="0.78"/>
<path transform="translate(621.9,501.6)" d="M0 1.6 H5.8 M1.6 0 V5.8 M4.3 1.6 V5.8 M2.9 3.2 H5.8 M0 5.8 H2.9" stroke="#b03030" stroke-width="0.8" fill="none" opacity="0.78"/>
<text x="609.4" y="517.0" font-size="6.6" fill="#a02020" text-anchor="start" font-weight="normal" font-family="Liberation Sans, sans-serif" >Heating Up</text></g></svg>
<div id="vt"><div class="title">Virtual Terminal</div><div class="close"></div><div class="grad"></div>
<div class="scr"><div style="height:0.1px"></div><div>Set humidity low th:40%</div><div>Set light high th:1200</div><div>temperature:17</div><div>humidity:36%</div><div>Light:983</div><div>Gas:18%</div><div>temperature:16</div><div>temperature:15</div></div>
<div class="sb"><svg width="19" height="110" style="position:absolute;left:0;top:0"><path d="M5.5 12.5 L9.5 8.5 L13.5 12.5" fill="none" stroke="#555" stroke-width="1.7"/><path d="M5.5 100 L9.5 104 L13.5 100" fill="none" stroke="#555" stroke-width="1.7"/></svg><div class="thumb"></div></div>
</div>
</body></html>
